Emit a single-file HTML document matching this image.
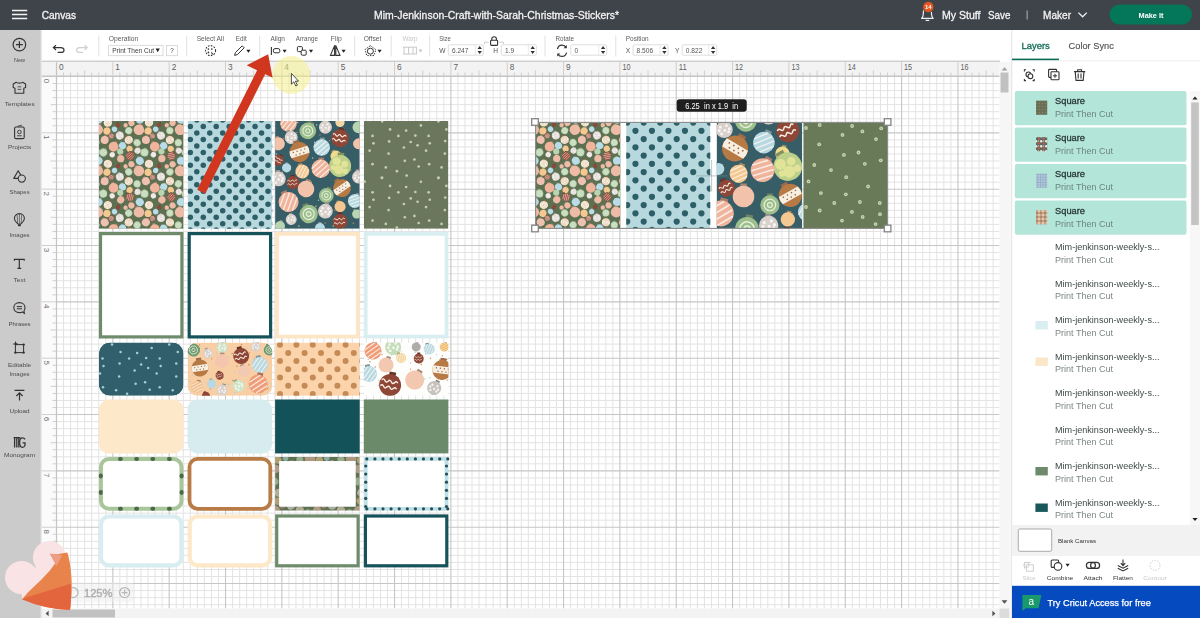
<!DOCTYPE html><html><head><meta charset="utf-8"><style>html,body{margin:0;padding:0;background:#fff}body{width:1200px;height:618px;overflow:hidden}svg{display:block;filter:blur(0.4px)}</style></head><body><svg width="1200" height="618" viewBox="0 0 1200 618" font-family="'Liberation Sans', sans-serif"><defs><clipPath id="c1"><rect x="98.9" y="121" width="84.6" height="107.8" rx="0"/></clipPath><clipPath id="c2"><rect x="187.6" y="121" width="84.6" height="107.8" rx="0"/></clipPath><clipPath id="c3"><rect x="275.1" y="121" width="84.6" height="107.8" rx="0"/></clipPath><clipPath id="c4"><rect x="363.8" y="121" width="84.6" height="107.8" rx="0"/></clipPath><clipPath id="c5"><rect x="98.9" y="342.6" width="84.6" height="53.2" rx="11"/></clipPath><clipPath id="c6"><rect x="187.6" y="342.6" width="84.6" height="53.2" rx="10"/></clipPath><clipPath id="c7"><rect x="275.1" y="342.6" width="84.6" height="53.2" rx="0"/></clipPath><clipPath id="c8"><rect x="363.8" y="342.6" width="84.6" height="53.2" rx="0"/></clipPath><clipPath id="c9"><rect x="275.1" y="457" width="84.6" height="53.7" rx="0"/></clipPath><mask id="m5"><rect x="275.1" y="457" width="84.6" height="53.7" fill="#fff"/><rect x="279.3" y="461.2" width="76.2" height="45.3" fill="#000"/></mask><clipPath id="c10"><rect x="275.1" y="457" width="84.6" height="53.7" rx="0"/></clipPath><clipPath id="c11"><rect x="536" y="122.8" width="84.5" height="105.8" rx="0"/></clipPath><clipPath id="c12"><rect x="626.2" y="122.8" width="84.1" height="105.8" rx="0"/></clipPath><clipPath id="c13"><rect x="716.6" y="122.8" width="85.5" height="105.8" rx="0"/></clipPath><clipPath id="c14"><rect x="803.3" y="122.8" width="84.5" height="105.8" rx="0"/></clipPath><pattern id="th_ornA" patternUnits="userSpaceOnUse" width="5" height="5"><rect width="5" height="5" fill="#5a6a62"/><circle cx="1.2" cy="1.2" r="1.2" fill="#f0e8e0"/><circle cx="3.8" cy="3.4" r="1.1" fill="#c85a48"/><circle cx="3.6" cy="1" r="0.8" fill="#f0b8a0"/></pattern><pattern id="th_polka" patternUnits="userSpaceOnUse" width="2.6" height="2.6"><rect width="2.6" height="2.6" fill="#b4cadc"/><path d="M0 .4H2.6M.4 0V2.6" stroke="#8ea8c2" stroke-width="0.7"/></pattern><pattern id="th_ornB" patternUnits="userSpaceOnUse" width="4" height="4"><rect width="4" height="4" fill="#c7a386"/><circle cx="1" cy="1" r="0.8" fill="#8a604a"/><circle cx="3" cy="3" r="0.9" fill="#ecdcc8"/></pattern><pattern id="th_sp" patternUnits="userSpaceOnUse" width="3" height="3"><rect width="3" height="3" fill="#6b6f56"/><circle cx="1.5" cy="1.5" r="0.45" fill="#9aa088"/></pattern></defs><rect x="41" y="61" width="971" height="557" fill="#ffffff"/><path d="M63.54 76V608.5M70.59 76V608.5M77.63 76V608.5M84.67 76V608.5M91.71 76V608.5M98.75 76V608.5M105.8 76V608.5M119.88 76V608.5M126.93 76V608.5M133.97 76V608.5M141.01 76V608.5M148.05 76V608.5M155.09 76V608.5M162.14 76V608.5M176.22 76V608.5M183.27 76V608.5M190.31 76V608.5M197.35 76V608.5M204.39 76V608.5M211.44 76V608.5M218.48 76V608.5M232.56 76V608.5M239.61 76V608.5M246.65 76V608.5M253.69 76V608.5M260.73 76V608.5M267.77 76V608.5M274.82 76V608.5M288.9 76V608.5M295.95 76V608.5M302.99 76V608.5M310.03 76V608.5M317.07 76V608.5M324.12 76V608.5M331.16 76V608.5M345.24 76V608.5M352.29 76V608.5M359.33 76V608.5M366.37 76V608.5M373.41 76V608.5M380.46 76V608.5M387.5 76V608.5M401.58 76V608.5M408.62 76V608.5M415.67 76V608.5M422.71 76V608.5M429.75 76V608.5M436.8 76V608.5M443.84 76V608.5M457.92 76V608.5M464.97 76V608.5M472.01 76V608.5M479.05 76V608.5M486.09 76V608.5M493.14 76V608.5M500.18 76V608.5M514.26 76V608.5M521.31 76V608.5M528.35 76V608.5M535.39 76V608.5M542.43 76V608.5M549.48 76V608.5M556.52 76V608.5M570.6 76V608.5M577.64 76V608.5M584.69 76V608.5M591.73 76V608.5M598.77 76V608.5M605.82 76V608.5M612.86 76V608.5M626.94 76V608.5M633.99 76V608.5M641.03 76V608.5M648.07 76V608.5M655.11 76V608.5M662.16 76V608.5M669.2 76V608.5M683.28 76V608.5M690.33 76V608.5M697.37 76V608.5M704.41 76V608.5M711.45 76V608.5M718.5 76V608.5M725.54 76V608.5M739.62 76V608.5M746.67 76V608.5M753.71 76V608.5M760.75 76V608.5M767.79 76V608.5M774.84 76V608.5M781.88 76V608.5M795.96 76V608.5M803 76V608.5M810.05 76V608.5M817.09 76V608.5M824.13 76V608.5M831.18 76V608.5M838.22 76V608.5M852.3 76V608.5M859.35 76V608.5M866.39 76V608.5M873.43 76V608.5M880.47 76V608.5M887.52 76V608.5M894.56 76V608.5M908.64 76V608.5M915.69 76V608.5M922.73 76V608.5M929.77 76V608.5M936.81 76V608.5M943.86 76V608.5M950.9 76V608.5M964.98 76V608.5M972.03 76V608.5M979.07 76V608.5M986.11 76V608.5M993.15 76V608.5M56 83.54H999.5M56 90.59H999.5M56 97.63H999.5M56 104.67H999.5M56 111.71H999.5M56 118.75H999.5M56 125.8H999.5M56 139.88H999.5M56 146.93H999.5M56 153.97H999.5M56 161.01H999.5M56 168.05H999.5M56 175.09H999.5M56 182.14H999.5M56 196.22H999.5M56 203.27H999.5M56 210.31H999.5M56 217.35H999.5M56 224.39H999.5M56 231.44H999.5M56 238.48H999.5M56 252.56H999.5M56 259.61H999.5M56 266.65H999.5M56 273.69H999.5M56 280.73H999.5M56 287.77H999.5M56 294.82H999.5M56 308.9H999.5M56 315.95H999.5M56 322.99H999.5M56 330.03H999.5M56 337.07H999.5M56 344.12H999.5M56 351.16H999.5M56 365.24H999.5M56 372.29H999.5M56 379.33H999.5M56 386.37H999.5M56 393.41H999.5M56 400.46H999.5M56 407.5H999.5M56 421.58H999.5M56 428.62H999.5M56 435.67H999.5M56 442.71H999.5M56 449.75H999.5M56 456.8H999.5M56 463.84H999.5M56 477.92H999.5M56 484.97H999.5M56 492.01H999.5M56 499.05H999.5M56 506.09H999.5M56 513.13H999.5M56 520.18H999.5M56 534.26H999.5M56 541.31H999.5M56 548.35H999.5M56 555.39H999.5M56 562.43H999.5M56 569.48H999.5M56 576.52H999.5M56 590.6H999.5M56 597.64H999.5M56 604.69H999.5" stroke="#e3e3e3" stroke-width="1" fill="none"/><path d="M56.5 62V608.5M112.84 62V608.5M169.18 62V608.5M225.52 62V608.5M281.86 62V608.5M338.2 62V608.5M394.54 62V608.5M450.88 62V608.5M507.22 62V608.5M563.56 62V608.5M619.9 62V608.5M676.24 62V608.5M732.58 62V608.5M788.92 62V608.5M845.26 62V608.5M901.6 62V608.5M957.94 62V608.5M41 76.5H999.5M41 132.84H999.5M41 189.18H999.5M41 245.52H999.5M41 301.86H999.5M41 358.2H999.5M41 414.54H999.5M41 470.88H999.5M41 527.22H999.5M41 583.56H999.5" stroke="#c6c6c6" stroke-width="1.1" fill="none"/><rect x="41" y="61.5" width="958.5" height="14.5" fill="#f3f3f3"/><rect x="41" y="76" width="15.5" height="532.5" fill="#fbfbfb"/><path d="M56.5 62V76M63.54 72.5V76M70.59 72.5V76M77.63 72.5V76M84.67 70.5V76M91.71 72.5V76M98.75 72.5V76M105.8 72.5V76M112.84 62V76M119.88 72.5V76M126.93 72.5V76M133.97 72.5V76M141.01 70.5V76M148.05 72.5V76M155.09 72.5V76M162.14 72.5V76M169.18 62V76M176.22 72.5V76M183.27 72.5V76M190.31 72.5V76M197.35 70.5V76M204.39 72.5V76M211.44 72.5V76M218.48 72.5V76M225.52 62V76M232.56 72.5V76M239.61 72.5V76M246.65 72.5V76M253.69 70.5V76M260.73 72.5V76M267.77 72.5V76M274.82 72.5V76M281.86 62V76M288.9 72.5V76M295.95 72.5V76M302.99 72.5V76M310.03 70.5V76M317.07 72.5V76M324.12 72.5V76M331.16 72.5V76M338.2 62V76M345.24 72.5V76M352.29 72.5V76M359.33 72.5V76M366.37 70.5V76M373.41 72.5V76M380.46 72.5V76M387.5 72.5V76M394.54 62V76M401.58 72.5V76M408.62 72.5V76M415.67 72.5V76M422.71 70.5V76M429.75 72.5V76M436.8 72.5V76M443.84 72.5V76M450.88 62V76M457.92 72.5V76M464.97 72.5V76M472.01 72.5V76M479.05 70.5V76M486.09 72.5V76M493.14 72.5V76M500.18 72.5V76M507.22 62V76M514.26 72.5V76M521.31 72.5V76M528.35 72.5V76M535.39 70.5V76M542.43 72.5V76M549.48 72.5V76M556.52 72.5V76M563.56 62V76M570.6 72.5V76M577.64 72.5V76M584.69 72.5V76M591.73 70.5V76M598.77 72.5V76M605.82 72.5V76M612.86 72.5V76M619.9 62V76M626.94 72.5V76M633.99 72.5V76M641.03 72.5V76M648.07 70.5V76M655.11 72.5V76M662.16 72.5V76M669.2 72.5V76M676.24 62V76M683.28 72.5V76M690.33 72.5V76M697.37 72.5V76M704.41 70.5V76M711.45 72.5V76M718.5 72.5V76M725.54 72.5V76M732.58 62V76M739.62 72.5V76M746.67 72.5V76M753.71 72.5V76M760.75 70.5V76M767.79 72.5V76M774.84 72.5V76M781.88 72.5V76M788.92 62V76M795.96 72.5V76M803 72.5V76M810.05 72.5V76M817.09 70.5V76M824.13 72.5V76M831.18 72.5V76M838.22 72.5V76M845.26 62V76M852.3 72.5V76M859.35 72.5V76M866.39 72.5V76M873.43 70.5V76M880.47 72.5V76M887.52 72.5V76M894.56 72.5V76M901.6 62V76M908.64 72.5V76M915.69 72.5V76M922.73 72.5V76M929.77 70.5V76M936.81 72.5V76M943.86 72.5V76M950.9 72.5V76M957.94 62V76M964.98 72.5V76M972.03 72.5V76M979.07 72.5V76M986.11 70.5V76M993.15 72.5V76M41 76.5H56.5M52.5 83.54H56.5M52.5 90.59H56.5M52.5 97.63H56.5M50.5 104.67H56.5M52.5 111.71H56.5M52.5 118.75H56.5M52.5 125.8H56.5M41 132.84H56.5M52.5 139.88H56.5M52.5 146.93H56.5M52.5 153.97H56.5M50.5 161.01H56.5M52.5 168.05H56.5M52.5 175.09H56.5M52.5 182.14H56.5M41 189.18H56.5M52.5 196.22H56.5M52.5 203.27H56.5M52.5 210.31H56.5M50.5 217.35H56.5M52.5 224.39H56.5M52.5 231.44H56.5M52.5 238.48H56.5M41 245.52H56.5M52.5 252.56H56.5M52.5 259.61H56.5M52.5 266.65H56.5M50.5 273.69H56.5M52.5 280.73H56.5M52.5 287.77H56.5M52.5 294.82H56.5M41 301.86H56.5M52.5 308.9H56.5M52.5 315.95H56.5M52.5 322.99H56.5M50.5 330.03H56.5M52.5 337.07H56.5M52.5 344.12H56.5M52.5 351.16H56.5M41 358.2H56.5M52.5 365.24H56.5M52.5 372.29H56.5M52.5 379.33H56.5M50.5 386.37H56.5M52.5 393.41H56.5M52.5 400.46H56.5M52.5 407.5H56.5M41 414.54H56.5M52.5 421.58H56.5M52.5 428.62H56.5M52.5 435.67H56.5M50.5 442.71H56.5M52.5 449.75H56.5M52.5 456.8H56.5M52.5 463.84H56.5M41 470.88H56.5M52.5 477.92H56.5M52.5 484.97H56.5M52.5 492.01H56.5M50.5 499.05H56.5M52.5 506.09H56.5M52.5 513.13H56.5M52.5 520.18H56.5M41 527.22H56.5M52.5 534.26H56.5M52.5 541.31H56.5M52.5 548.35H56.5M50.5 555.39H56.5M52.5 562.43H56.5M52.5 569.48H56.5M52.5 576.52H56.5M41 583.56H56.5M52.5 590.6H56.5M52.5 597.64H56.5M52.5 604.69H56.5" stroke="#cfcfcf" stroke-width="1" fill="none"/><path d="M41 76.2H999.5M56.5 62V608.5" stroke="#c4c4c4" stroke-width="1.2" fill="none"/><text x="59" y="70.4" font-size="8.3" fill="#5f5f5f">0</text><text x="115.34" y="70.4" font-size="8.3" fill="#5f5f5f">1</text><text x="171.68" y="70.4" font-size="8.3" fill="#5f5f5f">2</text><text x="228.02" y="70.4" font-size="8.3" fill="#5f5f5f">3</text><text x="284.36" y="70.4" font-size="8.3" fill="#5f5f5f">4</text><text x="340.7" y="70.4" font-size="8.3" fill="#5f5f5f">5</text><text x="397.04" y="70.4" font-size="8.3" fill="#5f5f5f">6</text><text x="453.38" y="70.4" font-size="8.3" fill="#5f5f5f">7</text><text x="509.72" y="70.4" font-size="8.3" fill="#5f5f5f">8</text><text x="566.06" y="70.4" font-size="8.3" fill="#5f5f5f">9</text><text x="622.4" y="70.4" font-size="8.3" fill="#5f5f5f" textLength="8" lengthAdjust="spacingAndGlyphs">10</text><text x="678.74" y="70.4" font-size="8.3" fill="#5f5f5f" textLength="8" lengthAdjust="spacingAndGlyphs">11</text><text x="735.08" y="70.4" font-size="8.3" fill="#5f5f5f" textLength="8" lengthAdjust="spacingAndGlyphs">12</text><text x="791.42" y="70.4" font-size="8.3" fill="#5f5f5f" textLength="8" lengthAdjust="spacingAndGlyphs">13</text><text x="847.76" y="70.4" font-size="8.3" fill="#5f5f5f" textLength="8" lengthAdjust="spacingAndGlyphs">14</text><text x="904.1" y="70.4" font-size="8.3" fill="#5f5f5f" textLength="8" lengthAdjust="spacingAndGlyphs">15</text><text x="960.44" y="70.4" font-size="8.3" fill="#5f5f5f" textLength="8" lengthAdjust="spacingAndGlyphs">16</text><text x="0" y="0" font-size="8" fill="#6f6f6f" transform="translate(44.2 78.7) rotate(90)">0</text><text x="0" y="0" font-size="8" fill="#6f6f6f" transform="translate(44.2 135.04) rotate(90)">1</text><text x="0" y="0" font-size="8" fill="#6f6f6f" transform="translate(44.2 191.38) rotate(90)">2</text><text x="0" y="0" font-size="8" fill="#6f6f6f" transform="translate(44.2 247.72) rotate(90)">3</text><text x="0" y="0" font-size="8" fill="#6f6f6f" transform="translate(44.2 304.06) rotate(90)">4</text><text x="0" y="0" font-size="8" fill="#6f6f6f" transform="translate(44.2 360.4) rotate(90)">5</text><text x="0" y="0" font-size="8" fill="#6f6f6f" transform="translate(44.2 416.74) rotate(90)">6</text><text x="0" y="0" font-size="8" fill="#6f6f6f" transform="translate(44.2 473.08) rotate(90)">7</text><text x="0" y="0" font-size="8" fill="#6f6f6f" transform="translate(44.2 529.42) rotate(90)">8</text><text x="0" y="0" font-size="8" fill="#6f6f6f" transform="translate(44.2 585.76) rotate(90)">9</text><rect x="999.5" y="61.5" width="12.5" height="556.5" fill="#f6f6f6"/><rect x="1000.5" y="72.5" width="8" height="20" fill="#c1c1c1"/><path d="M1001.6 70.5L1004.5 67.3L1007.4 70.5Z" fill="#a0a0a0"/><path d="M1001.6 600.2L1004.5 603.7L1007.4 600.2Z" fill="#505050"/><rect x="41" y="608.5" width="958.5" height="9.5" fill="#f3f3f3"/><rect x="52.5" y="609.5" width="62.5" height="8" fill="#c1c1c1"/><path d="M48.6 610.8L45.6 613.5L48.6 616.2Z" fill="#505050"/><path d="M992.4 610.8L995.4 613.5L992.4 616.2Z" fill="#505050"/><rect x="999.5" y="608.5" width="10" height="9.5" fill="#dcdcdc"/><rect x="1009.5" y="61.5" width="2.5" height="556.5" fill="#f7f7f7"/><g clip-path="url(#c1)"><rect x="98.9" y="121" width="84.6" height="107.8" fill="#5d7052"/><g transform="translate(98.6 119.7) rotate(8.6)"><rect x="-1.2" y="-4.8" width="2.4" height="1.6" fill="#849ea7"/><circle r="4" fill="#b8dce8"/></g><g transform="translate(97.7 129.8) rotate(16.93)"><rect x="-1.59" y="-6.36" width="3.18" height="2.12" fill="#ab8677"/><circle r="5.3" fill="#eebba6"/></g><g transform="translate(95.9 142.7) rotate(20.66)"><rect x="-1.08" y="-4.32" width="2.16" height="1.44" fill="#84987e"/><circle r="3.6" fill="#b8d4b0"/><circle r="2.16" fill="none" stroke="#eef4e4" stroke-opacity="0.9" stroke-width="0.55"/><circle r="0.9" fill="none" stroke="#eef4e4" stroke-opacity="0.9" stroke-width="0.55"/></g><g transform="translate(96.4 150.7) rotate(30.97)"><rect x="-0.93" y="-3.72" width="1.86" height="1.24" fill="#a49e9b"/><circle r="3.1" fill="#e4dcd8"/><circle cx="-1.4" cy="-0.93" r="0.53" fill="#fff" fill-opacity="0.8"/><circle cx="0.93" cy="-1.4" r="0.53" fill="#fff" fill-opacity="0.8"/><circle cx="0.16" cy="0.31" r="0.53" fill="#fff" fill-opacity="0.8"/><circle cx="-1.08" cy="1.55" r="0.53" fill="#fff" fill-opacity="0.8"/><circle cx="1.55" cy="0.93" r="0.53" fill="#fff" fill-opacity="0.8"/><circle cx="1.86" cy="-0.16" r="0.53" fill="#fff" fill-opacity="0.8"/><circle cx="-1.86" cy="0.31" r="0.53" fill="#fff" fill-opacity="0.8"/></g><g transform="translate(98.6 160.9) rotate(16.79)"><rect x="-1.2" y="-4.8" width="2.4" height="1.6" fill="#849ea7"/><circle r="4" fill="#b8dce8"/></g><g transform="translate(97.7 171) rotate(29.56)"><rect x="-1.59" y="-6.36" width="3.18" height="2.12" fill="#ab8677"/><circle r="5.3" fill="#eebba6"/></g><g transform="translate(95.9 183.9) rotate(-32.97)"><rect x="-1.08" y="-4.32" width="2.16" height="1.44" fill="#84987e"/><circle r="3.6" fill="#b8d4b0"/><circle r="2.16" fill="none" stroke="#eef4e4" stroke-opacity="0.9" stroke-width="0.55"/><circle r="0.9" fill="none" stroke="#eef4e4" stroke-opacity="0.9" stroke-width="0.55"/></g><g transform="translate(96.4 191.9) rotate(-2.41)"><rect x="-0.93" y="-3.72" width="1.86" height="1.24" fill="#a49e9b"/><circle r="3.1" fill="#e4dcd8"/><circle cx="-1.4" cy="-0.93" r="0.53" fill="#fff" fill-opacity="0.8"/><circle cx="0.93" cy="-1.4" r="0.53" fill="#fff" fill-opacity="0.8"/><circle cx="0.16" cy="0.31" r="0.53" fill="#fff" fill-opacity="0.8"/><circle cx="-1.08" cy="1.55" r="0.53" fill="#fff" fill-opacity="0.8"/><circle cx="1.55" cy="0.93" r="0.53" fill="#fff" fill-opacity="0.8"/><circle cx="1.86" cy="-0.16" r="0.53" fill="#fff" fill-opacity="0.8"/><circle cx="-1.86" cy="0.31" r="0.53" fill="#fff" fill-opacity="0.8"/></g><g transform="translate(98.6 202.1) rotate(31.03)"><rect x="-1.2" y="-4.8" width="2.4" height="1.6" fill="#849ea7"/><circle r="4" fill="#b8dce8"/></g><g transform="translate(97.7 212.2) rotate(10.43)"><rect x="-1.59" y="-6.36" width="3.18" height="2.12" fill="#ab8677"/><circle r="5.3" fill="#eebba6"/></g><g transform="translate(95.9 225.1) rotate(28.06)"><rect x="-1.08" y="-4.32" width="2.16" height="1.44" fill="#84987e"/><circle r="3.6" fill="#b8d4b0"/><circle r="2.16" fill="none" stroke="#eef4e4" stroke-opacity="0.9" stroke-width="0.55"/><circle r="0.9" fill="none" stroke="#eef4e4" stroke-opacity="0.9" stroke-width="0.55"/></g><g transform="translate(96.4 233.1) rotate(-27.08)"><rect x="-0.93" y="-3.72" width="1.86" height="1.24" fill="#a49e9b"/><circle r="3.1" fill="#e4dcd8"/><circle cx="-1.4" cy="-0.93" r="0.53" fill="#fff" fill-opacity="0.8"/><circle cx="0.93" cy="-1.4" r="0.53" fill="#fff" fill-opacity="0.8"/><circle cx="0.16" cy="0.31" r="0.53" fill="#fff" fill-opacity="0.8"/><circle cx="-1.08" cy="1.55" r="0.53" fill="#fff" fill-opacity="0.8"/><circle cx="1.55" cy="0.93" r="0.53" fill="#fff" fill-opacity="0.8"/><circle cx="1.86" cy="-0.16" r="0.53" fill="#fff" fill-opacity="0.8"/><circle cx="-1.86" cy="0.31" r="0.53" fill="#fff" fill-opacity="0.8"/></g><g transform="translate(120.7 117.5) rotate(-2.17)"><rect x="-1.08" y="-4.32" width="2.16" height="1.44" fill="#ab8677"/><circle r="3.6" fill="#eebba6"/></g><g transform="translate(139.8 119.7) rotate(-17.74)"><rect x="-1.2" y="-4.8" width="2.4" height="1.6" fill="#849ea7"/><circle r="4" fill="#b8dce8"/></g><g transform="translate(107.8 122.7) rotate(3.06)"><rect x="-1.2" y="-4.8" width="2.4" height="1.6" fill="#9c6a48"/><circle r="4" fill="#f2e2cc"/><path d="M-3.73 -1.44L3.73 -1.44L4 0L3.73 1.44L-3.73 1.44L-4 0Z" fill="#f8efe0"/><g fill="#9a6a4a"><circle cx="-2.4" cy="-0.6" r="0.28"/><circle cx="-0.8" cy="-0.6" r="0.28"/><circle cx="0.8" cy="-0.6" r="0.28"/><circle cx="2.4" cy="-0.6" r="0.28"/><circle cx="-1.6" cy="0.68" r="0.28"/><circle cx="0" cy="0.68" r="0.28"/><circle cx="1.6" cy="0.68" r="0.28"/></g></g><g transform="translate(106.9 131.1) rotate(5.18)"><rect x="-1.08" y="-4.32" width="2.16" height="1.44" fill="#af9067"/><circle r="3.6" fill="#f4c890"/></g><g transform="translate(114.5 129.3) rotate(-34.08)"><rect x="-0.81" y="-3.24" width="1.62" height="1.08" fill="#849ea7"/><circle r="2.7" fill="#b8dce8"/></g><g transform="translate(118 124.9) rotate(-19.83)"><rect x="-0.66" y="-2.64" width="1.32" height="0.88" fill="#633529"/><circle r="2.2" fill="#8a4a3a"/></g><g transform="translate(119.8 135.6) rotate(-15.44)"><rect x="-1.2" y="-4.8" width="2.4" height="1.6" fill="#a49e9b"/><circle r="4" fill="#e4dcd8"/><circle cx="-1.8" cy="-1.2" r="0.68" fill="#fff" fill-opacity="0.8"/><circle cx="1.2" cy="-1.8" r="0.68" fill="#fff" fill-opacity="0.8"/><circle cx="0.2" cy="0.4" r="0.68" fill="#fff" fill-opacity="0.8"/><circle cx="-1.4" cy="2" r="0.68" fill="#fff" fill-opacity="0.8"/><circle cx="2" cy="1.2" r="0.68" fill="#fff" fill-opacity="0.8"/><circle cx="2.4" cy="-0.2" r="0.68" fill="#fff" fill-opacity="0.8"/><circle cx="-2.4" cy="0.4" r="0.68" fill="#fff" fill-opacity="0.8"/></g><g transform="translate(125.6 125.3) rotate(29.14)"><rect x="-0.66" y="-2.64" width="1.32" height="0.88" fill="#ab8677"/><circle r="2.2" fill="#eebba6"/></g><g transform="translate(128.7 130.7) rotate(18.6)"><rect x="-1.08" y="-4.32" width="2.16" height="1.44" fill="#84987e"/><circle r="3.6" fill="#b8d4b0"/><circle r="2.16" fill="none" stroke="#eef4e4" stroke-opacity="0.9" stroke-width="0.55"/><circle r="0.9" fill="none" stroke="#eef4e4" stroke-opacity="0.9" stroke-width="0.55"/></g><g transform="translate(131.4 123.1) rotate(-23.83)"><rect x="-0.93" y="-3.72" width="1.86" height="1.24" fill="#ab8677"/><circle r="3.1" fill="#eebba6"/></g><g transform="translate(138.9 129.8) rotate(20.8)"><rect x="-1.59" y="-6.36" width="3.18" height="2.12" fill="#ab8677"/><circle r="5.3" fill="#eebba6"/></g><g transform="translate(111.3 136) rotate(-25.29)"><rect x="-0.81" y="-3.24" width="1.62" height="1.08" fill="#73392e"/><circle r="2.7" fill="#a05040"/><path d="M-2.58 0.06L0.06 -2.58M-2.13 1.29L1.29 -2.13M-1.29 2.13L2.13 -1.29M-0.06 2.58L2.58 -0.06" stroke="#fdf6ee" stroke-opacity="0.85" stroke-width="0.55"/></g><g transform="translate(104.7 140) rotate(8.22)"><rect x="-1.2" y="-4.8" width="2.4" height="1.6" fill="#ac8a7e"/><circle r="4" fill="#f0c0b0"/></g><g transform="translate(128.7 140) rotate(-26.13)"><rect x="-1.2" y="-4.8" width="2.4" height="1.6" fill="#9c6a48"/><circle r="4" fill="#f0d8c0"/><path d="M-3.73 -1.44L3.73 -1.44L4 0L3.73 1.44L-3.73 1.44L-4 0Z" fill="#f8efe0"/><g fill="#9a6a4a"><circle cx="-2.4" cy="-0.6" r="0.28"/><circle cx="-0.8" cy="-0.6" r="0.28"/><circle cx="0.8" cy="-0.6" r="0.28"/><circle cx="2.4" cy="-0.6" r="0.28"/><circle cx="-1.6" cy="0.68" r="0.28"/><circle cx="0" cy="0.68" r="0.28"/><circle cx="1.6" cy="0.68" r="0.28"/></g></g><g transform="translate(137.1 142.7) rotate(-34.88)"><rect x="-1.08" y="-4.32" width="2.16" height="1.44" fill="#84987e"/><circle r="3.6" fill="#b8d4b0"/><circle r="2.16" fill="none" stroke="#eef4e4" stroke-opacity="0.9" stroke-width="0.55"/><circle r="0.9" fill="none" stroke="#eef4e4" stroke-opacity="0.9" stroke-width="0.55"/></g><g transform="translate(113.6 146.7) rotate(26)"><rect x="-1.47" y="-5.88" width="2.94" height="1.96" fill="#ac8170"/><circle r="4.9" fill="#f0b49c"/></g><g transform="translate(122.5 145.8) rotate(-20.34)"><rect x="-1.08" y="-4.32" width="2.16" height="1.44" fill="#849ea7"/><circle r="3.6" fill="#b8dce8"/></g><g transform="translate(129.6 148.9) rotate(-19.92)"><rect x="-0.93" y="-3.72" width="1.86" height="1.24" fill="#af9067"/><circle r="3.1" fill="#f4c890"/></g><g transform="translate(103.3 152.5) rotate(33.77)"><rect x="-1.2" y="-4.8" width="2.4" height="1.6" fill="#84987e"/><circle r="4" fill="#b8d4b0"/><circle r="2.4" fill="none" stroke="#eef4e4" stroke-opacity="0.9" stroke-width="0.55"/><circle r="1" fill="none" stroke="#eef4e4" stroke-opacity="0.9" stroke-width="0.55"/></g><g transform="translate(112.2 154.7) rotate(26.07)"><rect x="-0.81" y="-3.24" width="1.62" height="1.08" fill="#a9a4a1"/><circle r="2.7" fill="#ece4e0"/><circle cx="-1.22" cy="-0.81" r="0.46" fill="#fff" fill-opacity="0.8"/><circle cx="0.81" cy="-1.22" r="0.46" fill="#fff" fill-opacity="0.8"/><circle cx="0.14" cy="0.27" r="0.46" fill="#fff" fill-opacity="0.8"/><circle cx="-0.94" cy="1.35" r="0.46" fill="#fff" fill-opacity="0.8"/><circle cx="1.35" cy="0.81" r="0.46" fill="#fff" fill-opacity="0.8"/><circle cx="1.62" cy="-0.14" r="0.46" fill="#fff" fill-opacity="0.8"/><circle cx="-1.62" cy="0.27" r="0.46" fill="#fff" fill-opacity="0.8"/></g><g transform="translate(120.2 151.6) rotate(-14.75)"><rect x="-0.93" y="-3.72" width="1.86" height="1.24" fill="#84987e"/><circle r="3.1" fill="#b8d4b0"/></g><g transform="translate(137.6 150.7) rotate(32.3)"><rect x="-0.93" y="-3.72" width="1.86" height="1.24" fill="#a49e9b"/><circle r="3.1" fill="#e4dcd8"/><circle cx="-1.4" cy="-0.93" r="0.53" fill="#fff" fill-opacity="0.8"/><circle cx="0.93" cy="-1.4" r="0.53" fill="#fff" fill-opacity="0.8"/><circle cx="0.16" cy="0.31" r="0.53" fill="#fff" fill-opacity="0.8"/><circle cx="-1.08" cy="1.55" r="0.53" fill="#fff" fill-opacity="0.8"/><circle cx="1.55" cy="0.93" r="0.53" fill="#fff" fill-opacity="0.8"/><circle cx="1.86" cy="-0.16" r="0.53" fill="#fff" fill-opacity="0.8"/><circle cx="-1.86" cy="0.31" r="0.53" fill="#fff" fill-opacity="0.8"/></g><g transform="translate(130 156) rotate(2.75)"><rect x="-1.2" y="-4.8" width="2.4" height="1.6" fill="#73392e"/><circle r="4" fill="#a05040"/><path d="M-3.82 0.09L0.09 -3.82M-3.16 1.92L1.92 -3.16M-1.92 3.16L3.16 -1.92M-0.09 3.82L3.82 -0.09" stroke="#fdf6ee" stroke-opacity="0.85" stroke-width="0.55"/></g><g transform="translate(120.7 158.7) rotate(12.45)"><rect x="-1.08" y="-4.32" width="2.16" height="1.44" fill="#ab8677"/><circle r="3.6" fill="#eebba6"/></g><g transform="translate(139.8 160.9) rotate(-20.67)"><rect x="-1.2" y="-4.8" width="2.4" height="1.6" fill="#849ea7"/><circle r="4" fill="#b8dce8"/></g><g transform="translate(107.8 163.9) rotate(30.87)"><rect x="-1.2" y="-4.8" width="2.4" height="1.6" fill="#9c6a48"/><circle r="4" fill="#f2e2cc"/><path d="M-3.73 -1.44L3.73 -1.44L4 0L3.73 1.44L-3.73 1.44L-4 0Z" fill="#f8efe0"/><g fill="#9a6a4a"><circle cx="-2.4" cy="-0.6" r="0.28"/><circle cx="-0.8" cy="-0.6" r="0.28"/><circle cx="0.8" cy="-0.6" r="0.28"/><circle cx="2.4" cy="-0.6" r="0.28"/><circle cx="-1.6" cy="0.68" r="0.28"/><circle cx="0" cy="0.68" r="0.28"/><circle cx="1.6" cy="0.68" r="0.28"/></g></g><g transform="translate(106.9 172.3) rotate(13.34)"><rect x="-1.08" y="-4.32" width="2.16" height="1.44" fill="#af9067"/><circle r="3.6" fill="#f4c890"/></g><g transform="translate(114.5 170.5) rotate(32.66)"><rect x="-0.81" y="-3.24" width="1.62" height="1.08" fill="#849ea7"/><circle r="2.7" fill="#b8dce8"/></g><g transform="translate(118 166.1) rotate(27.56)"><rect x="-0.66" y="-2.64" width="1.32" height="0.88" fill="#633529"/><circle r="2.2" fill="#8a4a3a"/></g><g transform="translate(119.8 176.8) rotate(-14.08)"><rect x="-1.2" y="-4.8" width="2.4" height="1.6" fill="#a49e9b"/><circle r="4" fill="#e4dcd8"/><circle cx="-1.8" cy="-1.2" r="0.68" fill="#fff" fill-opacity="0.8"/><circle cx="1.2" cy="-1.8" r="0.68" fill="#fff" fill-opacity="0.8"/><circle cx="0.2" cy="0.4" r="0.68" fill="#fff" fill-opacity="0.8"/><circle cx="-1.4" cy="2" r="0.68" fill="#fff" fill-opacity="0.8"/><circle cx="2" cy="1.2" r="0.68" fill="#fff" fill-opacity="0.8"/><circle cx="2.4" cy="-0.2" r="0.68" fill="#fff" fill-opacity="0.8"/><circle cx="-2.4" cy="0.4" r="0.68" fill="#fff" fill-opacity="0.8"/></g><g transform="translate(125.6 166.5) rotate(-9.72)"><rect x="-0.66" y="-2.64" width="1.32" height="0.88" fill="#ab8677"/><circle r="2.2" fill="#eebba6"/></g><g transform="translate(128.7 171.9) rotate(-23.38)"><rect x="-1.08" y="-4.32" width="2.16" height="1.44" fill="#84987e"/><circle r="3.6" fill="#b8d4b0"/><circle r="2.16" fill="none" stroke="#eef4e4" stroke-opacity="0.9" stroke-width="0.55"/><circle r="0.9" fill="none" stroke="#eef4e4" stroke-opacity="0.9" stroke-width="0.55"/></g><g transform="translate(131.4 164.3) rotate(-24.8)"><rect x="-0.93" y="-3.72" width="1.86" height="1.24" fill="#ab8677"/><circle r="3.1" fill="#eebba6"/></g><g transform="translate(138.9 171) rotate(-30.44)"><rect x="-1.59" y="-6.36" width="3.18" height="2.12" fill="#ab8677"/><circle r="5.3" fill="#eebba6"/></g><g transform="translate(111.3 177.2) rotate(-13.9)"><rect x="-0.81" y="-3.24" width="1.62" height="1.08" fill="#73392e"/><circle r="2.7" fill="#a05040"/><path d="M-2.58 0.06L0.06 -2.58M-2.13 1.29L1.29 -2.13M-1.29 2.13L2.13 -1.29M-0.06 2.58L2.58 -0.06" stroke="#fdf6ee" stroke-opacity="0.85" stroke-width="0.55"/></g><g transform="translate(104.7 181.2) rotate(7.22)"><rect x="-1.2" y="-4.8" width="2.4" height="1.6" fill="#ac8a7e"/><circle r="4" fill="#f0c0b0"/></g><g transform="translate(128.7 181.2) rotate(-34.76)"><rect x="-1.2" y="-4.8" width="2.4" height="1.6" fill="#9c6a48"/><circle r="4" fill="#f0d8c0"/><path d="M-3.73 -1.44L3.73 -1.44L4 0L3.73 1.44L-3.73 1.44L-4 0Z" fill="#f8efe0"/><g fill="#9a6a4a"><circle cx="-2.4" cy="-0.6" r="0.28"/><circle cx="-0.8" cy="-0.6" r="0.28"/><circle cx="0.8" cy="-0.6" r="0.28"/><circle cx="2.4" cy="-0.6" r="0.28"/><circle cx="-1.6" cy="0.68" r="0.28"/><circle cx="0" cy="0.68" r="0.28"/><circle cx="1.6" cy="0.68" r="0.28"/></g></g><g transform="translate(137.1 183.9) rotate(12.46)"><rect x="-1.08" y="-4.32" width="2.16" height="1.44" fill="#84987e"/><circle r="3.6" fill="#b8d4b0"/><circle r="2.16" fill="none" stroke="#eef4e4" stroke-opacity="0.9" stroke-width="0.55"/><circle r="0.9" fill="none" stroke="#eef4e4" stroke-opacity="0.9" stroke-width="0.55"/></g><g transform="translate(113.6 187.9) rotate(-11.35)"><rect x="-1.47" y="-5.88" width="2.94" height="1.96" fill="#ac8170"/><circle r="4.9" fill="#f0b49c"/></g><g transform="translate(122.5 187) rotate(-13.3)"><rect x="-1.08" y="-4.32" width="2.16" height="1.44" fill="#849ea7"/><circle r="3.6" fill="#b8dce8"/></g><g transform="translate(129.6 190.1) rotate(22.3)"><rect x="-0.93" y="-3.72" width="1.86" height="1.24" fill="#af9067"/><circle r="3.1" fill="#f4c890"/></g><g transform="translate(103.3 193.7) rotate(-1.35)"><rect x="-1.2" y="-4.8" width="2.4" height="1.6" fill="#84987e"/><circle r="4" fill="#b8d4b0"/><circle r="2.4" fill="none" stroke="#eef4e4" stroke-opacity="0.9" stroke-width="0.55"/><circle r="1" fill="none" stroke="#eef4e4" stroke-opacity="0.9" stroke-width="0.55"/></g><g transform="translate(112.2 195.9) rotate(-12.89)"><rect x="-0.81" y="-3.24" width="1.62" height="1.08" fill="#a9a4a1"/><circle r="2.7" fill="#ece4e0"/><circle cx="-1.22" cy="-0.81" r="0.46" fill="#fff" fill-opacity="0.8"/><circle cx="0.81" cy="-1.22" r="0.46" fill="#fff" fill-opacity="0.8"/><circle cx="0.14" cy="0.27" r="0.46" fill="#fff" fill-opacity="0.8"/><circle cx="-0.94" cy="1.35" r="0.46" fill="#fff" fill-opacity="0.8"/><circle cx="1.35" cy="0.81" r="0.46" fill="#fff" fill-opacity="0.8"/><circle cx="1.62" cy="-0.14" r="0.46" fill="#fff" fill-opacity="0.8"/><circle cx="-1.62" cy="0.27" r="0.46" fill="#fff" fill-opacity="0.8"/></g><g transform="translate(120.2 192.8) rotate(-1.31)"><rect x="-0.93" y="-3.72" width="1.86" height="1.24" fill="#84987e"/><circle r="3.1" fill="#b8d4b0"/></g><g transform="translate(137.6 191.9) rotate(14.33)"><rect x="-0.93" y="-3.72" width="1.86" height="1.24" fill="#a49e9b"/><circle r="3.1" fill="#e4dcd8"/><circle cx="-1.4" cy="-0.93" r="0.53" fill="#fff" fill-opacity="0.8"/><circle cx="0.93" cy="-1.4" r="0.53" fill="#fff" fill-opacity="0.8"/><circle cx="0.16" cy="0.31" r="0.53" fill="#fff" fill-opacity="0.8"/><circle cx="-1.08" cy="1.55" r="0.53" fill="#fff" fill-opacity="0.8"/><circle cx="1.55" cy="0.93" r="0.53" fill="#fff" fill-opacity="0.8"/><circle cx="1.86" cy="-0.16" r="0.53" fill="#fff" fill-opacity="0.8"/><circle cx="-1.86" cy="0.31" r="0.53" fill="#fff" fill-opacity="0.8"/></g><g transform="translate(130 197.2) rotate(-31.01)"><rect x="-1.2" y="-4.8" width="2.4" height="1.6" fill="#73392e"/><circle r="4" fill="#a05040"/><path d="M-3.82 0.09L0.09 -3.82M-3.16 1.92L1.92 -3.16M-1.92 3.16L3.16 -1.92M-0.09 3.82L3.82 -0.09" stroke="#fdf6ee" stroke-opacity="0.85" stroke-width="0.55"/></g><g transform="translate(120.7 199.9) rotate(33.26)"><rect x="-1.08" y="-4.32" width="2.16" height="1.44" fill="#ab8677"/><circle r="3.6" fill="#eebba6"/></g><g transform="translate(139.8 202.1) rotate(-33.4)"><rect x="-1.2" y="-4.8" width="2.4" height="1.6" fill="#849ea7"/><circle r="4" fill="#b8dce8"/></g><g transform="translate(107.8 205.1) rotate(17.49)"><rect x="-1.2" y="-4.8" width="2.4" height="1.6" fill="#9c6a48"/><circle r="4" fill="#f2e2cc"/><path d="M-3.73 -1.44L3.73 -1.44L4 0L3.73 1.44L-3.73 1.44L-4 0Z" fill="#f8efe0"/><g fill="#9a6a4a"><circle cx="-2.4" cy="-0.6" r="0.28"/><circle cx="-0.8" cy="-0.6" r="0.28"/><circle cx="0.8" cy="-0.6" r="0.28"/><circle cx="2.4" cy="-0.6" r="0.28"/><circle cx="-1.6" cy="0.68" r="0.28"/><circle cx="0" cy="0.68" r="0.28"/><circle cx="1.6" cy="0.68" r="0.28"/></g></g><g transform="translate(106.9 213.5) rotate(24.14)"><rect x="-1.08" y="-4.32" width="2.16" height="1.44" fill="#af9067"/><circle r="3.6" fill="#f4c890"/></g><g transform="translate(114.5 211.7) rotate(-33.74)"><rect x="-0.81" y="-3.24" width="1.62" height="1.08" fill="#849ea7"/><circle r="2.7" fill="#b8dce8"/></g><g transform="translate(118 207.3) rotate(20.14)"><rect x="-0.66" y="-2.64" width="1.32" height="0.88" fill="#633529"/><circle r="2.2" fill="#8a4a3a"/></g><g transform="translate(119.8 218) rotate(-9.37)"><rect x="-1.2" y="-4.8" width="2.4" height="1.6" fill="#a49e9b"/><circle r="4" fill="#e4dcd8"/><circle cx="-1.8" cy="-1.2" r="0.68" fill="#fff" fill-opacity="0.8"/><circle cx="1.2" cy="-1.8" r="0.68" fill="#fff" fill-opacity="0.8"/><circle cx="0.2" cy="0.4" r="0.68" fill="#fff" fill-opacity="0.8"/><circle cx="-1.4" cy="2" r="0.68" fill="#fff" fill-opacity="0.8"/><circle cx="2" cy="1.2" r="0.68" fill="#fff" fill-opacity="0.8"/><circle cx="2.4" cy="-0.2" r="0.68" fill="#fff" fill-opacity="0.8"/><circle cx="-2.4" cy="0.4" r="0.68" fill="#fff" fill-opacity="0.8"/></g><g transform="translate(125.6 207.7) rotate(5.5)"><rect x="-0.66" y="-2.64" width="1.32" height="0.88" fill="#ab8677"/><circle r="2.2" fill="#eebba6"/></g><g transform="translate(128.7 213.1) rotate(-34.36)"><rect x="-1.08" y="-4.32" width="2.16" height="1.44" fill="#84987e"/><circle r="3.6" fill="#b8d4b0"/><circle r="2.16" fill="none" stroke="#eef4e4" stroke-opacity="0.9" stroke-width="0.55"/><circle r="0.9" fill="none" stroke="#eef4e4" stroke-opacity="0.9" stroke-width="0.55"/></g><g transform="translate(131.4 205.5) rotate(-31.73)"><rect x="-0.93" y="-3.72" width="1.86" height="1.24" fill="#ab8677"/><circle r="3.1" fill="#eebba6"/></g><g transform="translate(138.9 212.2) rotate(-22.34)"><rect x="-1.59" y="-6.36" width="3.18" height="2.12" fill="#ab8677"/><circle r="5.3" fill="#eebba6"/></g><g transform="translate(111.3 218.4) rotate(31.86)"><rect x="-0.81" y="-3.24" width="1.62" height="1.08" fill="#73392e"/><circle r="2.7" fill="#a05040"/><path d="M-2.58 0.06L0.06 -2.58M-2.13 1.29L1.29 -2.13M-1.29 2.13L2.13 -1.29M-0.06 2.58L2.58 -0.06" stroke="#fdf6ee" stroke-opacity="0.85" stroke-width="0.55"/></g><g transform="translate(104.7 222.4) rotate(-21.24)"><rect x="-1.2" y="-4.8" width="2.4" height="1.6" fill="#ac8a7e"/><circle r="4" fill="#f0c0b0"/></g><g transform="translate(128.7 222.4) rotate(17.9)"><rect x="-1.2" y="-4.8" width="2.4" height="1.6" fill="#9c6a48"/><circle r="4" fill="#f0d8c0"/><path d="M-3.73 -1.44L3.73 -1.44L4 0L3.73 1.44L-3.73 1.44L-4 0Z" fill="#f8efe0"/><g fill="#9a6a4a"><circle cx="-2.4" cy="-0.6" r="0.28"/><circle cx="-0.8" cy="-0.6" r="0.28"/><circle cx="0.8" cy="-0.6" r="0.28"/><circle cx="2.4" cy="-0.6" r="0.28"/><circle cx="-1.6" cy="0.68" r="0.28"/><circle cx="0" cy="0.68" r="0.28"/><circle cx="1.6" cy="0.68" r="0.28"/></g></g><g transform="translate(137.1 225.1) rotate(30.08)"><rect x="-1.08" y="-4.32" width="2.16" height="1.44" fill="#84987e"/><circle r="3.6" fill="#b8d4b0"/><circle r="2.16" fill="none" stroke="#eef4e4" stroke-opacity="0.9" stroke-width="0.55"/><circle r="0.9" fill="none" stroke="#eef4e4" stroke-opacity="0.9" stroke-width="0.55"/></g><g transform="translate(113.6 229.1) rotate(30.94)"><rect x="-1.47" y="-5.88" width="2.94" height="1.96" fill="#ac8170"/><circle r="4.9" fill="#f0b49c"/></g><g transform="translate(122.5 228.2) rotate(-10.89)"><rect x="-1.08" y="-4.32" width="2.16" height="1.44" fill="#849ea7"/><circle r="3.6" fill="#b8dce8"/></g><g transform="translate(129.6 231.3) rotate(-10.16)"><rect x="-0.93" y="-3.72" width="1.86" height="1.24" fill="#af9067"/><circle r="3.1" fill="#f4c890"/></g><g transform="translate(120.2 234) rotate(1.73)"><rect x="-0.93" y="-3.72" width="1.86" height="1.24" fill="#84987e"/><circle r="3.1" fill="#b8d4b0"/></g><g transform="translate(137.6 233.1) rotate(19.29)"><rect x="-0.93" y="-3.72" width="1.86" height="1.24" fill="#a49e9b"/><circle r="3.1" fill="#e4dcd8"/><circle cx="-1.4" cy="-0.93" r="0.53" fill="#fff" fill-opacity="0.8"/><circle cx="0.93" cy="-1.4" r="0.53" fill="#fff" fill-opacity="0.8"/><circle cx="0.16" cy="0.31" r="0.53" fill="#fff" fill-opacity="0.8"/><circle cx="-1.08" cy="1.55" r="0.53" fill="#fff" fill-opacity="0.8"/><circle cx="1.55" cy="0.93" r="0.53" fill="#fff" fill-opacity="0.8"/><circle cx="1.86" cy="-0.16" r="0.53" fill="#fff" fill-opacity="0.8"/><circle cx="-1.86" cy="0.31" r="0.53" fill="#fff" fill-opacity="0.8"/></g><g transform="translate(161.9 117.5) rotate(-27.44)"><rect x="-1.08" y="-4.32" width="2.16" height="1.44" fill="#ab8677"/><circle r="3.6" fill="#eebba6"/></g><g transform="translate(181 119.7) rotate(17.39)"><rect x="-1.2" y="-4.8" width="2.4" height="1.6" fill="#849ea7"/><circle r="4" fill="#b8dce8"/></g><g transform="translate(149 122.7) rotate(20.81)"><rect x="-1.2" y="-4.8" width="2.4" height="1.6" fill="#9c6a48"/><circle r="4" fill="#f2e2cc"/><path d="M-3.73 -1.44L3.73 -1.44L4 0L3.73 1.44L-3.73 1.44L-4 0Z" fill="#f8efe0"/><g fill="#9a6a4a"><circle cx="-2.4" cy="-0.6" r="0.28"/><circle cx="-0.8" cy="-0.6" r="0.28"/><circle cx="0.8" cy="-0.6" r="0.28"/><circle cx="2.4" cy="-0.6" r="0.28"/><circle cx="-1.6" cy="0.68" r="0.28"/><circle cx="0" cy="0.68" r="0.28"/><circle cx="1.6" cy="0.68" r="0.28"/></g></g><g transform="translate(148.1 131.1) rotate(25.18)"><rect x="-1.08" y="-4.32" width="2.16" height="1.44" fill="#af9067"/><circle r="3.6" fill="#f4c890"/></g><g transform="translate(155.7 129.3) rotate(-32.44)"><rect x="-0.81" y="-3.24" width="1.62" height="1.08" fill="#849ea7"/><circle r="2.7" fill="#b8dce8"/></g><g transform="translate(159.2 124.9) rotate(31.21)"><rect x="-0.66" y="-2.64" width="1.32" height="0.88" fill="#633529"/><circle r="2.2" fill="#8a4a3a"/></g><g transform="translate(161 135.6) rotate(-28.62)"><rect x="-1.2" y="-4.8" width="2.4" height="1.6" fill="#a49e9b"/><circle r="4" fill="#e4dcd8"/><circle cx="-1.8" cy="-1.2" r="0.68" fill="#fff" fill-opacity="0.8"/><circle cx="1.2" cy="-1.8" r="0.68" fill="#fff" fill-opacity="0.8"/><circle cx="0.2" cy="0.4" r="0.68" fill="#fff" fill-opacity="0.8"/><circle cx="-1.4" cy="2" r="0.68" fill="#fff" fill-opacity="0.8"/><circle cx="2" cy="1.2" r="0.68" fill="#fff" fill-opacity="0.8"/><circle cx="2.4" cy="-0.2" r="0.68" fill="#fff" fill-opacity="0.8"/><circle cx="-2.4" cy="0.4" r="0.68" fill="#fff" fill-opacity="0.8"/></g><g transform="translate(166.8 125.3) rotate(-11.15)"><rect x="-0.66" y="-2.64" width="1.32" height="0.88" fill="#ab8677"/><circle r="2.2" fill="#eebba6"/></g><g transform="translate(169.9 130.7) rotate(7.76)"><rect x="-1.08" y="-4.32" width="2.16" height="1.44" fill="#84987e"/><circle r="3.6" fill="#b8d4b0"/><circle r="2.16" fill="none" stroke="#eef4e4" stroke-opacity="0.9" stroke-width="0.55"/><circle r="0.9" fill="none" stroke="#eef4e4" stroke-opacity="0.9" stroke-width="0.55"/></g><g transform="translate(172.6 123.1) rotate(29.27)"><rect x="-0.93" y="-3.72" width="1.86" height="1.24" fill="#ab8677"/><circle r="3.1" fill="#eebba6"/></g><g transform="translate(180.1 129.8) rotate(-11.2)"><rect x="-1.59" y="-6.36" width="3.18" height="2.12" fill="#ab8677"/><circle r="5.3" fill="#eebba6"/></g><g transform="translate(152.5 136) rotate(29.69)"><rect x="-0.81" y="-3.24" width="1.62" height="1.08" fill="#73392e"/><circle r="2.7" fill="#a05040"/><path d="M-2.58 0.06L0.06 -2.58M-2.13 1.29L1.29 -2.13M-1.29 2.13L2.13 -1.29M-0.06 2.58L2.58 -0.06" stroke="#fdf6ee" stroke-opacity="0.85" stroke-width="0.55"/></g><g transform="translate(145.9 140) rotate(3.16)"><rect x="-1.2" y="-4.8" width="2.4" height="1.6" fill="#ac8a7e"/><circle r="4" fill="#f0c0b0"/></g><g transform="translate(169.9 140) rotate(-13.13)"><rect x="-1.2" y="-4.8" width="2.4" height="1.6" fill="#9c6a48"/><circle r="4" fill="#f0d8c0"/><path d="M-3.73 -1.44L3.73 -1.44L4 0L3.73 1.44L-3.73 1.44L-4 0Z" fill="#f8efe0"/><g fill="#9a6a4a"><circle cx="-2.4" cy="-0.6" r="0.28"/><circle cx="-0.8" cy="-0.6" r="0.28"/><circle cx="0.8" cy="-0.6" r="0.28"/><circle cx="2.4" cy="-0.6" r="0.28"/><circle cx="-1.6" cy="0.68" r="0.28"/><circle cx="0" cy="0.68" r="0.28"/><circle cx="1.6" cy="0.68" r="0.28"/></g></g><g transform="translate(178.3 142.7) rotate(-12.82)"><rect x="-1.08" y="-4.32" width="2.16" height="1.44" fill="#84987e"/><circle r="3.6" fill="#b8d4b0"/><circle r="2.16" fill="none" stroke="#eef4e4" stroke-opacity="0.9" stroke-width="0.55"/><circle r="0.9" fill="none" stroke="#eef4e4" stroke-opacity="0.9" stroke-width="0.55"/></g><g transform="translate(154.8 146.7) rotate(-22.58)"><rect x="-1.47" y="-5.88" width="2.94" height="1.96" fill="#ac8170"/><circle r="4.9" fill="#f0b49c"/></g><g transform="translate(163.7 145.8) rotate(-29.53)"><rect x="-1.08" y="-4.32" width="2.16" height="1.44" fill="#849ea7"/><circle r="3.6" fill="#b8dce8"/></g><g transform="translate(170.8 148.9) rotate(-24.58)"><rect x="-0.93" y="-3.72" width="1.86" height="1.24" fill="#af9067"/><circle r="3.1" fill="#f4c890"/></g><g transform="translate(144.5 152.5) rotate(13.24)"><rect x="-1.2" y="-4.8" width="2.4" height="1.6" fill="#84987e"/><circle r="4" fill="#b8d4b0"/><circle r="2.4" fill="none" stroke="#eef4e4" stroke-opacity="0.9" stroke-width="0.55"/><circle r="1" fill="none" stroke="#eef4e4" stroke-opacity="0.9" stroke-width="0.55"/></g><g transform="translate(153.4 154.7) rotate(34.77)"><rect x="-0.81" y="-3.24" width="1.62" height="1.08" fill="#a9a4a1"/><circle r="2.7" fill="#ece4e0"/><circle cx="-1.22" cy="-0.81" r="0.46" fill="#fff" fill-opacity="0.8"/><circle cx="0.81" cy="-1.22" r="0.46" fill="#fff" fill-opacity="0.8"/><circle cx="0.14" cy="0.27" r="0.46" fill="#fff" fill-opacity="0.8"/><circle cx="-0.94" cy="1.35" r="0.46" fill="#fff" fill-opacity="0.8"/><circle cx="1.35" cy="0.81" r="0.46" fill="#fff" fill-opacity="0.8"/><circle cx="1.62" cy="-0.14" r="0.46" fill="#fff" fill-opacity="0.8"/><circle cx="-1.62" cy="0.27" r="0.46" fill="#fff" fill-opacity="0.8"/></g><g transform="translate(161.4 151.6) rotate(-23.69)"><rect x="-0.93" y="-3.72" width="1.86" height="1.24" fill="#84987e"/><circle r="3.1" fill="#b8d4b0"/></g><g transform="translate(178.8 150.7) rotate(-31.6)"><rect x="-0.93" y="-3.72" width="1.86" height="1.24" fill="#a49e9b"/><circle r="3.1" fill="#e4dcd8"/><circle cx="-1.4" cy="-0.93" r="0.53" fill="#fff" fill-opacity="0.8"/><circle cx="0.93" cy="-1.4" r="0.53" fill="#fff" fill-opacity="0.8"/><circle cx="0.16" cy="0.31" r="0.53" fill="#fff" fill-opacity="0.8"/><circle cx="-1.08" cy="1.55" r="0.53" fill="#fff" fill-opacity="0.8"/><circle cx="1.55" cy="0.93" r="0.53" fill="#fff" fill-opacity="0.8"/><circle cx="1.86" cy="-0.16" r="0.53" fill="#fff" fill-opacity="0.8"/><circle cx="-1.86" cy="0.31" r="0.53" fill="#fff" fill-opacity="0.8"/></g><g transform="translate(171.2 156) rotate(34.07)"><rect x="-1.2" y="-4.8" width="2.4" height="1.6" fill="#73392e"/><circle r="4" fill="#a05040"/><path d="M-3.82 0.09L0.09 -3.82M-3.16 1.92L1.92 -3.16M-1.92 3.16L3.16 -1.92M-0.09 3.82L3.82 -0.09" stroke="#fdf6ee" stroke-opacity="0.85" stroke-width="0.55"/></g><g transform="translate(161.9 158.7) rotate(2.35)"><rect x="-1.08" y="-4.32" width="2.16" height="1.44" fill="#ab8677"/><circle r="3.6" fill="#eebba6"/></g><g transform="translate(181 160.9) rotate(-6.59)"><rect x="-1.2" y="-4.8" width="2.4" height="1.6" fill="#849ea7"/><circle r="4" fill="#b8dce8"/></g><g transform="translate(149 163.9) rotate(-18.39)"><rect x="-1.2" y="-4.8" width="2.4" height="1.6" fill="#9c6a48"/><circle r="4" fill="#f2e2cc"/><path d="M-3.73 -1.44L3.73 -1.44L4 0L3.73 1.44L-3.73 1.44L-4 0Z" fill="#f8efe0"/><g fill="#9a6a4a"><circle cx="-2.4" cy="-0.6" r="0.28"/><circle cx="-0.8" cy="-0.6" r="0.28"/><circle cx="0.8" cy="-0.6" r="0.28"/><circle cx="2.4" cy="-0.6" r="0.28"/><circle cx="-1.6" cy="0.68" r="0.28"/><circle cx="0" cy="0.68" r="0.28"/><circle cx="1.6" cy="0.68" r="0.28"/></g></g><g transform="translate(148.1 172.3) rotate(6.58)"><rect x="-1.08" y="-4.32" width="2.16" height="1.44" fill="#af9067"/><circle r="3.6" fill="#f4c890"/></g><g transform="translate(155.7 170.5) rotate(22.84)"><rect x="-0.81" y="-3.24" width="1.62" height="1.08" fill="#849ea7"/><circle r="2.7" fill="#b8dce8"/></g><g transform="translate(159.2 166.1) rotate(-3.1)"><rect x="-0.66" y="-2.64" width="1.32" height="0.88" fill="#633529"/><circle r="2.2" fill="#8a4a3a"/></g><g transform="translate(161 176.8) rotate(-5.48)"><rect x="-1.2" y="-4.8" width="2.4" height="1.6" fill="#a49e9b"/><circle r="4" fill="#e4dcd8"/><circle cx="-1.8" cy="-1.2" r="0.68" fill="#fff" fill-opacity="0.8"/><circle cx="1.2" cy="-1.8" r="0.68" fill="#fff" fill-opacity="0.8"/><circle cx="0.2" cy="0.4" r="0.68" fill="#fff" fill-opacity="0.8"/><circle cx="-1.4" cy="2" r="0.68" fill="#fff" fill-opacity="0.8"/><circle cx="2" cy="1.2" r="0.68" fill="#fff" fill-opacity="0.8"/><circle cx="2.4" cy="-0.2" r="0.68" fill="#fff" fill-opacity="0.8"/><circle cx="-2.4" cy="0.4" r="0.68" fill="#fff" fill-opacity="0.8"/></g><g transform="translate(166.8 166.5) rotate(-31.1)"><rect x="-0.66" y="-2.64" width="1.32" height="0.88" fill="#ab8677"/><circle r="2.2" fill="#eebba6"/></g><g transform="translate(169.9 171.9) rotate(29.12)"><rect x="-1.08" y="-4.32" width="2.16" height="1.44" fill="#84987e"/><circle r="3.6" fill="#b8d4b0"/><circle r="2.16" fill="none" stroke="#eef4e4" stroke-opacity="0.9" stroke-width="0.55"/><circle r="0.9" fill="none" stroke="#eef4e4" stroke-opacity="0.9" stroke-width="0.55"/></g><g transform="translate(172.6 164.3) rotate(-32.71)"><rect x="-0.93" y="-3.72" width="1.86" height="1.24" fill="#ab8677"/><circle r="3.1" fill="#eebba6"/></g><g transform="translate(180.1 171) rotate(-0.45)"><rect x="-1.59" y="-6.36" width="3.18" height="2.12" fill="#ab8677"/><circle r="5.3" fill="#eebba6"/></g><g transform="translate(152.5 177.2) rotate(23.69)"><rect x="-0.81" y="-3.24" width="1.62" height="1.08" fill="#73392e"/><circle r="2.7" fill="#a05040"/><path d="M-2.58 0.06L0.06 -2.58M-2.13 1.29L1.29 -2.13M-1.29 2.13L2.13 -1.29M-0.06 2.58L2.58 -0.06" stroke="#fdf6ee" stroke-opacity="0.85" stroke-width="0.55"/></g><g transform="translate(145.9 181.2) rotate(-25.86)"><rect x="-1.2" y="-4.8" width="2.4" height="1.6" fill="#ac8a7e"/><circle r="4" fill="#f0c0b0"/></g><g transform="translate(169.9 181.2) rotate(16.22)"><rect x="-1.2" y="-4.8" width="2.4" height="1.6" fill="#9c6a48"/><circle r="4" fill="#f0d8c0"/><path d="M-3.73 -1.44L3.73 -1.44L4 0L3.73 1.44L-3.73 1.44L-4 0Z" fill="#f8efe0"/><g fill="#9a6a4a"><circle cx="-2.4" cy="-0.6" r="0.28"/><circle cx="-0.8" cy="-0.6" r="0.28"/><circle cx="0.8" cy="-0.6" r="0.28"/><circle cx="2.4" cy="-0.6" r="0.28"/><circle cx="-1.6" cy="0.68" r="0.28"/><circle cx="0" cy="0.68" r="0.28"/><circle cx="1.6" cy="0.68" r="0.28"/></g></g><g transform="translate(178.3 183.9) rotate(31.49)"><rect x="-1.08" y="-4.32" width="2.16" height="1.44" fill="#84987e"/><circle r="3.6" fill="#b8d4b0"/><circle r="2.16" fill="none" stroke="#eef4e4" stroke-opacity="0.9" stroke-width="0.55"/><circle r="0.9" fill="none" stroke="#eef4e4" stroke-opacity="0.9" stroke-width="0.55"/></g><g transform="translate(154.8 187.9) rotate(9.13)"><rect x="-1.47" y="-5.88" width="2.94" height="1.96" fill="#ac8170"/><circle r="4.9" fill="#f0b49c"/></g><g transform="translate(163.7 187) rotate(20.16)"><rect x="-1.08" y="-4.32" width="2.16" height="1.44" fill="#849ea7"/><circle r="3.6" fill="#b8dce8"/></g><g transform="translate(170.8 190.1) rotate(-27.54)"><rect x="-0.93" y="-3.72" width="1.86" height="1.24" fill="#af9067"/><circle r="3.1" fill="#f4c890"/></g><g transform="translate(144.5 193.7) rotate(-4.58)"><rect x="-1.2" y="-4.8" width="2.4" height="1.6" fill="#84987e"/><circle r="4" fill="#b8d4b0"/><circle r="2.4" fill="none" stroke="#eef4e4" stroke-opacity="0.9" stroke-width="0.55"/><circle r="1" fill="none" stroke="#eef4e4" stroke-opacity="0.9" stroke-width="0.55"/></g><g transform="translate(153.4 195.9) rotate(-24.55)"><rect x="-0.81" y="-3.24" width="1.62" height="1.08" fill="#a9a4a1"/><circle r="2.7" fill="#ece4e0"/><circle cx="-1.22" cy="-0.81" r="0.46" fill="#fff" fill-opacity="0.8"/><circle cx="0.81" cy="-1.22" r="0.46" fill="#fff" fill-opacity="0.8"/><circle cx="0.14" cy="0.27" r="0.46" fill="#fff" fill-opacity="0.8"/><circle cx="-0.94" cy="1.35" r="0.46" fill="#fff" fill-opacity="0.8"/><circle cx="1.35" cy="0.81" r="0.46" fill="#fff" fill-opacity="0.8"/><circle cx="1.62" cy="-0.14" r="0.46" fill="#fff" fill-opacity="0.8"/><circle cx="-1.62" cy="0.27" r="0.46" fill="#fff" fill-opacity="0.8"/></g><g transform="translate(161.4 192.8) rotate(24.13)"><rect x="-0.93" y="-3.72" width="1.86" height="1.24" fill="#84987e"/><circle r="3.1" fill="#b8d4b0"/></g><g transform="translate(178.8 191.9) rotate(-14.36)"><rect x="-0.93" y="-3.72" width="1.86" height="1.24" fill="#a49e9b"/><circle r="3.1" fill="#e4dcd8"/><circle cx="-1.4" cy="-0.93" r="0.53" fill="#fff" fill-opacity="0.8"/><circle cx="0.93" cy="-1.4" r="0.53" fill="#fff" fill-opacity="0.8"/><circle cx="0.16" cy="0.31" r="0.53" fill="#fff" fill-opacity="0.8"/><circle cx="-1.08" cy="1.55" r="0.53" fill="#fff" fill-opacity="0.8"/><circle cx="1.55" cy="0.93" r="0.53" fill="#fff" fill-opacity="0.8"/><circle cx="1.86" cy="-0.16" r="0.53" fill="#fff" fill-opacity="0.8"/><circle cx="-1.86" cy="0.31" r="0.53" fill="#fff" fill-opacity="0.8"/></g><g transform="translate(171.2 197.2) rotate(-3.28)"><rect x="-1.2" y="-4.8" width="2.4" height="1.6" fill="#73392e"/><circle r="4" fill="#a05040"/><path d="M-3.82 0.09L0.09 -3.82M-3.16 1.92L1.92 -3.16M-1.92 3.16L3.16 -1.92M-0.09 3.82L3.82 -0.09" stroke="#fdf6ee" stroke-opacity="0.85" stroke-width="0.55"/></g><g transform="translate(161.9 199.9) rotate(34.95)"><rect x="-1.08" y="-4.32" width="2.16" height="1.44" fill="#ab8677"/><circle r="3.6" fill="#eebba6"/></g><g transform="translate(181 202.1) rotate(24.66)"><rect x="-1.2" y="-4.8" width="2.4" height="1.6" fill="#849ea7"/><circle r="4" fill="#b8dce8"/></g><g transform="translate(149 205.1) rotate(33.32)"><rect x="-1.2" y="-4.8" width="2.4" height="1.6" fill="#9c6a48"/><circle r="4" fill="#f2e2cc"/><path d="M-3.73 -1.44L3.73 -1.44L4 0L3.73 1.44L-3.73 1.44L-4 0Z" fill="#f8efe0"/><g fill="#9a6a4a"><circle cx="-2.4" cy="-0.6" r="0.28"/><circle cx="-0.8" cy="-0.6" r="0.28"/><circle cx="0.8" cy="-0.6" r="0.28"/><circle cx="2.4" cy="-0.6" r="0.28"/><circle cx="-1.6" cy="0.68" r="0.28"/><circle cx="0" cy="0.68" r="0.28"/><circle cx="1.6" cy="0.68" r="0.28"/></g></g><g transform="translate(148.1 213.5) rotate(-3.25)"><rect x="-1.08" y="-4.32" width="2.16" height="1.44" fill="#af9067"/><circle r="3.6" fill="#f4c890"/></g><g transform="translate(155.7 211.7) rotate(-0.83)"><rect x="-0.81" y="-3.24" width="1.62" height="1.08" fill="#849ea7"/><circle r="2.7" fill="#b8dce8"/></g><g transform="translate(159.2 207.3) rotate(16.07)"><rect x="-0.66" y="-2.64" width="1.32" height="0.88" fill="#633529"/><circle r="2.2" fill="#8a4a3a"/></g><g transform="translate(161 218) rotate(-1.47)"><rect x="-1.2" y="-4.8" width="2.4" height="1.6" fill="#a49e9b"/><circle r="4" fill="#e4dcd8"/><circle cx="-1.8" cy="-1.2" r="0.68" fill="#fff" fill-opacity="0.8"/><circle cx="1.2" cy="-1.8" r="0.68" fill="#fff" fill-opacity="0.8"/><circle cx="0.2" cy="0.4" r="0.68" fill="#fff" fill-opacity="0.8"/><circle cx="-1.4" cy="2" r="0.68" fill="#fff" fill-opacity="0.8"/><circle cx="2" cy="1.2" r="0.68" fill="#fff" fill-opacity="0.8"/><circle cx="2.4" cy="-0.2" r="0.68" fill="#fff" fill-opacity="0.8"/><circle cx="-2.4" cy="0.4" r="0.68" fill="#fff" fill-opacity="0.8"/></g><g transform="translate(166.8 207.7) rotate(-14.63)"><rect x="-0.66" y="-2.64" width="1.32" height="0.88" fill="#ab8677"/><circle r="2.2" fill="#eebba6"/></g><g transform="translate(169.9 213.1) rotate(-6.73)"><rect x="-1.08" y="-4.32" width="2.16" height="1.44" fill="#84987e"/><circle r="3.6" fill="#b8d4b0"/><circle r="2.16" fill="none" stroke="#eef4e4" stroke-opacity="0.9" stroke-width="0.55"/><circle r="0.9" fill="none" stroke="#eef4e4" stroke-opacity="0.9" stroke-width="0.55"/></g><g transform="translate(172.6 205.5) rotate(-24.74)"><rect x="-0.93" y="-3.72" width="1.86" height="1.24" fill="#ab8677"/><circle r="3.1" fill="#eebba6"/></g><g transform="translate(180.1 212.2) rotate(-8.61)"><rect x="-1.59" y="-6.36" width="3.18" height="2.12" fill="#ab8677"/><circle r="5.3" fill="#eebba6"/></g><g transform="translate(152.5 218.4) rotate(34.19)"><rect x="-0.81" y="-3.24" width="1.62" height="1.08" fill="#73392e"/><circle r="2.7" fill="#a05040"/><path d="M-2.58 0.06L0.06 -2.58M-2.13 1.29L1.29 -2.13M-1.29 2.13L2.13 -1.29M-0.06 2.58L2.58 -0.06" stroke="#fdf6ee" stroke-opacity="0.85" stroke-width="0.55"/></g><g transform="translate(145.9 222.4) rotate(32.19)"><rect x="-1.2" y="-4.8" width="2.4" height="1.6" fill="#ac8a7e"/><circle r="4" fill="#f0c0b0"/></g><g transform="translate(169.9 222.4) rotate(8.89)"><rect x="-1.2" y="-4.8" width="2.4" height="1.6" fill="#9c6a48"/><circle r="4" fill="#f0d8c0"/><path d="M-3.73 -1.44L3.73 -1.44L4 0L3.73 1.44L-3.73 1.44L-4 0Z" fill="#f8efe0"/><g fill="#9a6a4a"><circle cx="-2.4" cy="-0.6" r="0.28"/><circle cx="-0.8" cy="-0.6" r="0.28"/><circle cx="0.8" cy="-0.6" r="0.28"/><circle cx="2.4" cy="-0.6" r="0.28"/><circle cx="-1.6" cy="0.68" r="0.28"/><circle cx="0" cy="0.68" r="0.28"/><circle cx="1.6" cy="0.68" r="0.28"/></g></g><g transform="translate(178.3 225.1) rotate(-0.05)"><rect x="-1.08" y="-4.32" width="2.16" height="1.44" fill="#84987e"/><circle r="3.6" fill="#b8d4b0"/><circle r="2.16" fill="none" stroke="#eef4e4" stroke-opacity="0.9" stroke-width="0.55"/><circle r="0.9" fill="none" stroke="#eef4e4" stroke-opacity="0.9" stroke-width="0.55"/></g><g transform="translate(154.8 229.1) rotate(-11.31)"><rect x="-1.47" y="-5.88" width="2.94" height="1.96" fill="#ac8170"/><circle r="4.9" fill="#f0b49c"/></g><g transform="translate(163.7 228.2) rotate(-28.76)"><rect x="-1.08" y="-4.32" width="2.16" height="1.44" fill="#849ea7"/><circle r="3.6" fill="#b8dce8"/></g><g transform="translate(170.8 231.3) rotate(-15.94)"><rect x="-0.93" y="-3.72" width="1.86" height="1.24" fill="#af9067"/><circle r="3.1" fill="#f4c890"/></g><g transform="translate(161.4 234) rotate(19.74)"><rect x="-0.93" y="-3.72" width="1.86" height="1.24" fill="#84987e"/><circle r="3.1" fill="#b8d4b0"/></g><g transform="translate(178.8 233.1) rotate(25.72)"><rect x="-0.93" y="-3.72" width="1.86" height="1.24" fill="#a49e9b"/><circle r="3.1" fill="#e4dcd8"/><circle cx="-1.4" cy="-0.93" r="0.53" fill="#fff" fill-opacity="0.8"/><circle cx="0.93" cy="-1.4" r="0.53" fill="#fff" fill-opacity="0.8"/><circle cx="0.16" cy="0.31" r="0.53" fill="#fff" fill-opacity="0.8"/><circle cx="-1.08" cy="1.55" r="0.53" fill="#fff" fill-opacity="0.8"/><circle cx="1.55" cy="0.93" r="0.53" fill="#fff" fill-opacity="0.8"/><circle cx="1.86" cy="-0.16" r="0.53" fill="#fff" fill-opacity="0.8"/><circle cx="-1.86" cy="0.31" r="0.53" fill="#fff" fill-opacity="0.8"/></g><g transform="translate(189.3 131.1) rotate(-9.71)"><rect x="-1.08" y="-4.32" width="2.16" height="1.44" fill="#af9067"/><circle r="3.6" fill="#f4c890"/></g><g transform="translate(187.1 140) rotate(20.02)"><rect x="-1.2" y="-4.8" width="2.4" height="1.6" fill="#ac8a7e"/><circle r="4" fill="#f0c0b0"/></g><g transform="translate(185.7 152.5) rotate(19.24)"><rect x="-1.2" y="-4.8" width="2.4" height="1.6" fill="#84987e"/><circle r="4" fill="#b8d4b0"/><circle r="2.4" fill="none" stroke="#eef4e4" stroke-opacity="0.9" stroke-width="0.55"/><circle r="1" fill="none" stroke="#eef4e4" stroke-opacity="0.9" stroke-width="0.55"/></g><g transform="translate(189.3 172.3) rotate(13.62)"><rect x="-1.08" y="-4.32" width="2.16" height="1.44" fill="#af9067"/><circle r="3.6" fill="#f4c890"/></g><g transform="translate(187.1 181.2) rotate(11.48)"><rect x="-1.2" y="-4.8" width="2.4" height="1.6" fill="#ac8a7e"/><circle r="4" fill="#f0c0b0"/></g><g transform="translate(185.7 193.7) rotate(18.17)"><rect x="-1.2" y="-4.8" width="2.4" height="1.6" fill="#84987e"/><circle r="4" fill="#b8d4b0"/><circle r="2.4" fill="none" stroke="#eef4e4" stroke-opacity="0.9" stroke-width="0.55"/><circle r="1" fill="none" stroke="#eef4e4" stroke-opacity="0.9" stroke-width="0.55"/></g><g transform="translate(189.3 213.5) rotate(-9.56)"><rect x="-1.08" y="-4.32" width="2.16" height="1.44" fill="#af9067"/><circle r="3.6" fill="#f4c890"/></g><g transform="translate(187.1 222.4) rotate(14.31)"><rect x="-1.2" y="-4.8" width="2.4" height="1.6" fill="#ac8a7e"/><circle r="4" fill="#f0c0b0"/></g></g><g clip-path="url(#c2)"><rect x="187.6" y="121" width="84.6" height="107.8" fill="#b7d9de"/><g fill="#2e5e68"><circle cx="183.85" cy="120.05" r="2.75"/><circle cx="196.8" cy="120.05" r="2.75"/><circle cx="209.75" cy="120.05" r="2.75"/><circle cx="222.7" cy="120.05" r="2.75"/><circle cx="235.65" cy="120.05" r="2.75"/><circle cx="248.6" cy="120.05" r="2.75"/><circle cx="261.55" cy="120.05" r="2.75"/><circle cx="274.5" cy="120.05" r="2.75"/><circle cx="190.32" cy="126.52" r="2.75"/><circle cx="203.27" cy="126.52" r="2.75"/><circle cx="216.22" cy="126.52" r="2.75"/><circle cx="229.17" cy="126.52" r="2.75"/><circle cx="242.12" cy="126.52" r="2.75"/><circle cx="255.07" cy="126.52" r="2.75"/><circle cx="268.02" cy="126.52" r="2.75"/><circle cx="183.85" cy="133" r="2.75"/><circle cx="196.8" cy="133" r="2.75"/><circle cx="209.75" cy="133" r="2.75"/><circle cx="222.7" cy="133" r="2.75"/><circle cx="235.65" cy="133" r="2.75"/><circle cx="248.6" cy="133" r="2.75"/><circle cx="261.55" cy="133" r="2.75"/><circle cx="274.5" cy="133" r="2.75"/><circle cx="190.32" cy="139.47" r="2.75"/><circle cx="203.27" cy="139.47" r="2.75"/><circle cx="216.22" cy="139.47" r="2.75"/><circle cx="229.17" cy="139.47" r="2.75"/><circle cx="242.12" cy="139.47" r="2.75"/><circle cx="255.07" cy="139.47" r="2.75"/><circle cx="268.02" cy="139.47" r="2.75"/><circle cx="183.85" cy="145.95" r="2.75"/><circle cx="196.8" cy="145.95" r="2.75"/><circle cx="209.75" cy="145.95" r="2.75"/><circle cx="222.7" cy="145.95" r="2.75"/><circle cx="235.65" cy="145.95" r="2.75"/><circle cx="248.6" cy="145.95" r="2.75"/><circle cx="261.55" cy="145.95" r="2.75"/><circle cx="274.5" cy="145.95" r="2.75"/><circle cx="190.32" cy="152.42" r="2.75"/><circle cx="203.27" cy="152.42" r="2.75"/><circle cx="216.22" cy="152.42" r="2.75"/><circle cx="229.17" cy="152.42" r="2.75"/><circle cx="242.12" cy="152.42" r="2.75"/><circle cx="255.07" cy="152.42" r="2.75"/><circle cx="268.02" cy="152.42" r="2.75"/><circle cx="183.85" cy="158.9" r="2.75"/><circle cx="196.8" cy="158.9" r="2.75"/><circle cx="209.75" cy="158.9" r="2.75"/><circle cx="222.7" cy="158.9" r="2.75"/><circle cx="235.65" cy="158.9" r="2.75"/><circle cx="248.6" cy="158.9" r="2.75"/><circle cx="261.55" cy="158.9" r="2.75"/><circle cx="274.5" cy="158.9" r="2.75"/><circle cx="190.32" cy="165.37" r="2.75"/><circle cx="203.27" cy="165.37" r="2.75"/><circle cx="216.22" cy="165.37" r="2.75"/><circle cx="229.17" cy="165.37" r="2.75"/><circle cx="242.12" cy="165.37" r="2.75"/><circle cx="255.07" cy="165.37" r="2.75"/><circle cx="268.02" cy="165.37" r="2.75"/><circle cx="183.85" cy="171.85" r="2.75"/><circle cx="196.8" cy="171.85" r="2.75"/><circle cx="209.75" cy="171.85" r="2.75"/><circle cx="222.7" cy="171.85" r="2.75"/><circle cx="235.65" cy="171.85" r="2.75"/><circle cx="248.6" cy="171.85" r="2.75"/><circle cx="261.55" cy="171.85" r="2.75"/><circle cx="274.5" cy="171.85" r="2.75"/><circle cx="190.32" cy="178.32" r="2.75"/><circle cx="203.27" cy="178.32" r="2.75"/><circle cx="216.22" cy="178.32" r="2.75"/><circle cx="229.17" cy="178.32" r="2.75"/><circle cx="242.12" cy="178.32" r="2.75"/><circle cx="255.07" cy="178.32" r="2.75"/><circle cx="268.02" cy="178.32" r="2.75"/><circle cx="183.85" cy="184.8" r="2.75"/><circle cx="196.8" cy="184.8" r="2.75"/><circle cx="209.75" cy="184.8" r="2.75"/><circle cx="222.7" cy="184.8" r="2.75"/><circle cx="235.65" cy="184.8" r="2.75"/><circle cx="248.6" cy="184.8" r="2.75"/><circle cx="261.55" cy="184.8" r="2.75"/><circle cx="274.5" cy="184.8" r="2.75"/><circle cx="190.32" cy="191.27" r="2.75"/><circle cx="203.27" cy="191.27" r="2.75"/><circle cx="216.22" cy="191.27" r="2.75"/><circle cx="229.17" cy="191.27" r="2.75"/><circle cx="242.12" cy="191.27" r="2.75"/><circle cx="255.07" cy="191.27" r="2.75"/><circle cx="268.02" cy="191.27" r="2.75"/><circle cx="183.85" cy="197.75" r="2.75"/><circle cx="196.8" cy="197.75" r="2.75"/><circle cx="209.75" cy="197.75" r="2.75"/><circle cx="222.7" cy="197.75" r="2.75"/><circle cx="235.65" cy="197.75" r="2.75"/><circle cx="248.6" cy="197.75" r="2.75"/><circle cx="261.55" cy="197.75" r="2.75"/><circle cx="274.5" cy="197.75" r="2.75"/><circle cx="190.32" cy="204.22" r="2.75"/><circle cx="203.27" cy="204.22" r="2.75"/><circle cx="216.22" cy="204.22" r="2.75"/><circle cx="229.17" cy="204.22" r="2.75"/><circle cx="242.12" cy="204.22" r="2.75"/><circle cx="255.07" cy="204.22" r="2.75"/><circle cx="268.02" cy="204.22" r="2.75"/><circle cx="183.85" cy="210.7" r="2.75"/><circle cx="196.8" cy="210.7" r="2.75"/><circle cx="209.75" cy="210.7" r="2.75"/><circle cx="222.7" cy="210.7" r="2.75"/><circle cx="235.65" cy="210.7" r="2.75"/><circle cx="248.6" cy="210.7" r="2.75"/><circle cx="261.55" cy="210.7" r="2.75"/><circle cx="274.5" cy="210.7" r="2.75"/><circle cx="190.32" cy="217.17" r="2.75"/><circle cx="203.27" cy="217.17" r="2.75"/><circle cx="216.22" cy="217.17" r="2.75"/><circle cx="229.17" cy="217.17" r="2.75"/><circle cx="242.12" cy="217.17" r="2.75"/><circle cx="255.07" cy="217.17" r="2.75"/><circle cx="268.02" cy="217.17" r="2.75"/><circle cx="183.85" cy="223.65" r="2.75"/><circle cx="196.8" cy="223.65" r="2.75"/><circle cx="209.75" cy="223.65" r="2.75"/><circle cx="222.7" cy="223.65" r="2.75"/><circle cx="235.65" cy="223.65" r="2.75"/><circle cx="248.6" cy="223.65" r="2.75"/><circle cx="261.55" cy="223.65" r="2.75"/><circle cx="274.5" cy="223.65" r="2.75"/><circle cx="190.32" cy="230.12" r="2.75"/><circle cx="203.27" cy="230.12" r="2.75"/><circle cx="216.22" cy="230.12" r="2.75"/><circle cx="229.17" cy="230.12" r="2.75"/><circle cx="242.12" cy="230.12" r="2.75"/><circle cx="255.07" cy="230.12" r="2.75"/><circle cx="268.02" cy="230.12" r="2.75"/></g></g><g clip-path="url(#c3)"><rect x="275.1" y="121" width="84.6" height="107.8" fill="#375d67"/><circle cx="353.34" cy="223.26" r="0.7" fill="#d08a6a"/><circle cx="276.54" cy="154.07" r="0.7" fill="#a8d0d8"/><circle cx="319.95" cy="135.05" r="0.7" fill="#d08a6a"/><circle cx="297.72" cy="122.52" r="0.7" fill="#e8c890"/><circle cx="313.6" cy="123.67" r="0.7" fill="#d08a6a"/><circle cx="358.12" cy="174.71" r="0.7" fill="#d08a6a"/><circle cx="318.47" cy="200.15" r="0.7" fill="#a8d0d8"/><circle cx="340.31" cy="143.17" r="0.7" fill="#d08a6a"/><circle cx="324.94" cy="191.92" r="0.7" fill="#e8c890"/><circle cx="293.38" cy="200.26" r="0.7" fill="#e8c890"/><circle cx="339.38" cy="160.74" r="0.7" fill="#e8c890"/><circle cx="298.9" cy="226.06" r="0.7" fill="#e8c890"/><circle cx="282.35" cy="172.1" r="0.7" fill="#e8c890"/><circle cx="315.97" cy="206.32" r="0.7" fill="#e8c890"/><circle cx="329.45" cy="140.62" r="0.7" fill="#d08a6a"/><circle cx="320.24" cy="193.59" r="0.7" fill="#e8c890"/><circle cx="291.65" cy="133.32" r="0.7" fill="#d08a6a"/><circle cx="311.15" cy="182.23" r="0.7" fill="#e8c890"/><circle cx="298.84" cy="184.6" r="0.7" fill="#d08a6a"/><circle cx="306.37" cy="152.1" r="0.7" fill="#a8d0d8"/><circle cx="350.78" cy="170.02" r="0.7" fill="#d08a6a"/><circle cx="296.96" cy="132.55" r="0.7" fill="#d08a6a"/><circle cx="334.92" cy="210.32" r="0.7" fill="#d08a6a"/><circle cx="302.87" cy="136.36" r="0.7" fill="#e8c890"/><circle cx="325.24" cy="222.92" r="0.7" fill="#d08a6a"/><circle cx="313.11" cy="124.64" r="0.7" fill="#e8c890"/><circle cx="310.31" cy="123.52" r="0.7" fill="#d08a6a"/><circle cx="333.24" cy="225.97" r="0.7" fill="#e8c890"/><circle cx="355.37" cy="179.06" r="0.7" fill="#a8d0d8"/><circle cx="338.47" cy="158.31" r="0.7" fill="#a8d0d8"/><circle cx="316.6" cy="124.99" r="0.7" fill="#a8d0d8"/><circle cx="314.52" cy="142.2" r="0.7" fill="#a8d0d8"/><circle cx="355.51" cy="144.28" r="0.7" fill="#d08a6a"/><circle cx="322.17" cy="191.02" r="0.7" fill="#e8c890"/><circle cx="321.09" cy="208.62" r="0.7" fill="#a8d0d8"/><circle cx="283.56" cy="138.78" r="0.7" fill="#d08a6a"/><circle cx="312.72" cy="157.95" r="0.7" fill="#a8d0d8"/><circle cx="343.94" cy="217.5" r="0.7" fill="#e8c890"/><circle cx="343.67" cy="128.5" r="0.7" fill="#e8c890"/><circle cx="338.19" cy="179.84" r="0.7" fill="#a8d0d8"/><g transform="translate(288.5 123.5) rotate(-6.33)"><rect x="-2.49" y="-9.96" width="4.98" height="3.32" fill="#a87d6d"/><circle r="8.3" fill="#f0b49c"/><path d="M-7.93 0.18L0.18 -7.93M-6.56 3.98L3.98 -6.56M-3.98 6.56L6.56 -3.98M-0.18 7.93L7.93 -0.18" stroke="#fdf6ee" stroke-opacity="0.85" stroke-width="1.08"/></g><g transform="translate(307.8 130.9) rotate(19.02)"><rect x="-2.49" y="-9.96" width="4.98" height="3.32" fill="#6d8562"/><circle r="8.3" fill="#9cbf8c"/><circle r="4.98" fill="none" stroke="#eef4e4" stroke-opacity="0.9" stroke-width="1.08"/><circle r="2.08" fill="none" stroke="#eef4e4" stroke-opacity="0.9" stroke-width="1.08"/></g><g transform="translate(325.4 127.2) rotate(4)"><rect x="-1.95" y="-7.8" width="3.9" height="2.6" fill="#97918e"/><circle r="6.5" fill="#d9d0cb"/><circle cx="-2.93" cy="-1.95" r="1.1" fill="#fff" fill-opacity="0.8"/><circle cx="1.95" cy="-2.93" r="1.1" fill="#fff" fill-opacity="0.8"/><circle cx="0.33" cy="0.65" r="1.1" fill="#fff" fill-opacity="0.8"/><circle cx="-2.27" cy="3.25" r="1.1" fill="#fff" fill-opacity="0.8"/><circle cx="3.25" cy="1.95" r="1.1" fill="#fff" fill-opacity="0.8"/><circle cx="3.9" cy="-0.33" r="1.1" fill="#fff" fill-opacity="0.8"/><circle cx="-3.9" cy="0.65" r="1.1" fill="#fff" fill-opacity="0.8"/></g><g transform="translate(340 122.5) rotate(3.5)"><rect x="-1.38" y="-5.52" width="2.76" height="1.84" fill="#aa9572"/><circle r="4.6" fill="#f4d6a4"/></g><g transform="translate(358.6 127.2) rotate(22.86)"><rect x="-1.8" y="-7.2" width="3.6" height="2.4" fill="#80947b"/><circle r="6" fill="#b8d4b0"/></g><g transform="translate(291.2 137.5) rotate(-27.41)"><rect x="-1.95" y="-7.8" width="3.9" height="2.6" fill="#97918e"/><circle r="6.5" fill="#d9d0cb"/><circle cx="-2.93" cy="-1.95" r="1.1" fill="#fff" fill-opacity="0.8"/><circle cx="1.95" cy="-2.93" r="1.1" fill="#fff" fill-opacity="0.8"/><circle cx="0.33" cy="0.65" r="1.1" fill="#fff" fill-opacity="0.8"/><circle cx="-2.27" cy="3.25" r="1.1" fill="#fff" fill-opacity="0.8"/><circle cx="3.25" cy="1.95" r="1.1" fill="#fff" fill-opacity="0.8"/><circle cx="3.9" cy="-0.33" r="1.1" fill="#fff" fill-opacity="0.8"/><circle cx="-3.9" cy="0.65" r="1.1" fill="#fff" fill-opacity="0.8"/></g><g transform="translate(340.1 138.3) rotate(9.19)"><rect x="-2.67" y="-10.68" width="5.34" height="3.56" fill="#633125"/><circle r="8.9" fill="#8e4636"/><path d="M-7.57 -2.67q1.33 -1.96 2.67 0t2.67 0t2.67 0t2.67 0t2.67 0M-7.57 2.23q1.33 -1.96 2.67 0t2.67 0t2.67 0t2.67 0t2.67 0" fill="none" stroke="#fbeee4" stroke-width="1.16"/></g><g transform="translate(278.3 143.8) rotate(-11.72)"><rect x="-1.95" y="-7.8" width="3.9" height="2.6" fill="#a98777"/><circle r="6.5" fill="#f2c2ab"/></g><g transform="translate(321.7 147.5) rotate(4.15)"><rect x="-2.49" y="-9.96" width="4.98" height="3.32" fill="#7f979e"/><circle r="8.3" fill="#b6d9e3"/><path d="M-7.93 0.18L0.18 -7.93M-6.56 3.98L3.98 -6.56M-3.98 6.56L6.56 -3.98M-0.18 7.93L7.93 -0.18" stroke="#fdf6ee" stroke-opacity="0.85" stroke-width="1.08"/></g><g transform="translate(358.6 143.8) rotate(23.47)"><rect x="-1.65" y="-6.6" width="3.3" height="2.2" fill="#a98777"/><circle r="5.5" fill="#f2c2ab"/></g><g transform="translate(299.5 152.1) rotate(-17.62)"><rect x="-3" y="-12" width="6" height="4" fill="#9c6a48"/><circle r="10" fill="#b87a45"/><path d="M-9.33 -3.6L9.33 -3.6L10 0L9.33 3.6L-9.33 3.6L-10 0Z" fill="#f8efe0"/><g fill="#9a6a4a"><circle cx="-6" cy="-1.5" r="0.7"/><circle cx="-2" cy="-1.5" r="0.7"/><circle cx="2" cy="-1.5" r="0.7"/><circle cx="6" cy="-1.5" r="0.7"/><circle cx="-4" cy="1.7" r="0.7"/><circle cx="0" cy="1.7" r="0.7"/><circle cx="4" cy="1.7" r="0.7"/></g></g><g transform="translate(278.3 160.4) rotate(31.61)"><rect x="-1.65" y="-6.6" width="3.3" height="2.2" fill="#633125"/><circle r="5.5" fill="#8e4636"/><path d="M-4.67 -1.65q0.82 -1.21 1.65 0t1.65 0t1.65 0t1.65 0t1.65 0M-4.67 1.38q0.82 -1.21 1.65 0t1.65 0t1.65 0t1.65 0t1.65 0" fill="none" stroke="#fbeee4" stroke-width="0.72"/></g><g transform="translate(336 156) rotate(-29.5)"><rect x="-1.65" y="-6.6" width="3.3" height="2.2" fill="#a89863"/><circle r="5.5" fill="#f0da8e"/></g><g transform="translate(340.1 166) rotate(4.34)"><rect x="-3.3" y="-13.2" width="6.6" height="4.4" fill="#839160"/><circle r="11" fill="#bcd08a"/><circle cx="-3.85" cy="-4.4" r="4.18" fill="#e4e49a" fill-opacity="0.9"/><circle cx="4.4" cy="-2.2" r="3.3" fill="#e4e49a" fill-opacity="0.9"/><circle cx="-1.1" cy="3.85" r="4.62" fill="#e4e49a" fill-opacity="0.9"/><circle cx="5.5" cy="4.95" r="2.75" fill="#e4e49a" fill-opacity="0.9"/><circle cx="-6.6" cy="2.2" r="2.42" fill="#e4e49a" fill-opacity="0.9"/></g><g transform="translate(320.7 168.7) rotate(2.93)"><rect x="-2.76" y="-11.04" width="5.52" height="3.68" fill="#a87d6d"/><circle r="9.2" fill="#f0b49c"/><path d="M-8.79 0.2L0.2 -8.79M-7.27 4.41L4.41 -7.27M-4.41 7.27L7.27 -4.41M-0.2 8.79L8.79 -0.2" stroke="#fdf6ee" stroke-opacity="0.85" stroke-width="1.2"/></g><g transform="translate(302.3 171.5) rotate(-18.54)"><rect x="-2.1" y="-8.4" width="4.2" height="2.8" fill="#aa8c64"/><circle r="7" fill="#f4c890"/><path d="M-6.69 0.15L0.15 -6.69M-5.53 3.35L3.35 -5.53M-3.35 5.53L5.53 -3.35M-0.15 6.69L6.69 -0.15" stroke="#fdf6ee" stroke-opacity="0.85" stroke-width="0.91"/></g><g transform="translate(286.6 167.8) rotate(4.26)"><rect x="-1.38" y="-5.52" width="2.76" height="1.84" fill="#7f979e"/><circle r="4.6" fill="#b6d9e3"/></g><g transform="translate(278.3 178.9) rotate(-2.05)"><rect x="-2.22" y="-8.88" width="4.44" height="2.96" fill="#97918e"/><circle r="7.4" fill="#d9d0cb"/><circle cx="-3.33" cy="-2.22" r="1.26" fill="#fff" fill-opacity="0.8"/><circle cx="2.22" cy="-3.33" r="1.26" fill="#fff" fill-opacity="0.8"/><circle cx="0.37" cy="0.74" r="1.26" fill="#fff" fill-opacity="0.8"/><circle cx="-2.59" cy="3.7" r="1.26" fill="#fff" fill-opacity="0.8"/><circle cx="3.7" cy="2.22" r="1.26" fill="#fff" fill-opacity="0.8"/><circle cx="4.44" cy="-0.37" r="1.26" fill="#fff" fill-opacity="0.8"/><circle cx="-4.44" cy="0.74" r="1.26" fill="#fff" fill-opacity="0.8"/></g><g transform="translate(293 182.6) rotate(-3.53)"><rect x="-1.95" y="-7.8" width="3.9" height="2.6" fill="#633125"/><circle r="6.5" fill="#8e4636"/><path d="M-5.52 -1.95q0.97 -1.43 1.95 0t1.95 0t1.95 0t1.95 0t1.95 0M-5.52 1.62q0.97 -1.43 1.95 0t1.95 0t1.95 0t1.95 0t1.95 0" fill="none" stroke="#fbeee4" stroke-width="0.84"/></g><g transform="translate(306 189) rotate(15.29)"><rect x="-2.49" y="-9.96" width="4.98" height="3.32" fill="#a98777"/><circle r="8.3" fill="#f2c2ab"/></g><g transform="translate(342 188.1) rotate(-34.72)"><rect x="-2.67" y="-10.68" width="5.34" height="3.56" fill="#9c6a48"/><circle r="8.9" fill="#b87a45"/><path d="M-8.3 -3.2L8.3 -3.2L8.9 0L8.3 3.2L-8.3 3.2L-8.9 0Z" fill="#f8efe0"/><g fill="#9a6a4a"><circle cx="-5.34" cy="-1.33" r="0.62"/><circle cx="-1.78" cy="-1.33" r="0.62"/><circle cx="1.78" cy="-1.33" r="0.62"/><circle cx="5.34" cy="-1.33" r="0.62"/><circle cx="-3.56" cy="1.51" r="0.62"/><circle cx="0" cy="1.51" r="0.62"/><circle cx="3.56" cy="1.51" r="0.62"/></g></g><g transform="translate(358.6 177) rotate(-8.6)"><rect x="-1.95" y="-7.8" width="3.9" height="2.6" fill="#97918e"/><circle r="6.5" fill="#d9d0cb"/><circle cx="-2.93" cy="-1.95" r="1.1" fill="#fff" fill-opacity="0.8"/><circle cx="1.95" cy="-2.93" r="1.1" fill="#fff" fill-opacity="0.8"/><circle cx="0.33" cy="0.65" r="1.1" fill="#fff" fill-opacity="0.8"/><circle cx="-2.27" cy="3.25" r="1.1" fill="#fff" fill-opacity="0.8"/><circle cx="3.25" cy="1.95" r="1.1" fill="#fff" fill-opacity="0.8"/><circle cx="3.9" cy="-0.33" r="1.1" fill="#fff" fill-opacity="0.8"/><circle cx="-3.9" cy="0.65" r="1.1" fill="#fff" fill-opacity="0.8"/></g><g transform="translate(326.3 195.5) rotate(19.99)"><rect x="-2.22" y="-8.88" width="4.44" height="2.96" fill="#6d8562"/><circle r="7.4" fill="#9cbf8c"/><circle r="4.44" fill="none" stroke="#eef4e4" stroke-opacity="0.9" stroke-width="0.96"/><circle r="1.85" fill="none" stroke="#eef4e4" stroke-opacity="0.9" stroke-width="0.96"/></g><g transform="translate(288.5 202) rotate(-25.07)"><rect x="-3" y="-12" width="6" height="4" fill="#a87d6d"/><circle r="10" fill="#f0b49c"/><path d="M-9.55 0.22L0.22 -9.55M-7.9 4.79L4.79 -7.9M-4.79 7.9L7.9 -4.79M-0.22 9.55L9.55 -0.22" stroke="#fdf6ee" stroke-opacity="0.85" stroke-width="1.3"/></g><g transform="translate(354.9 201) rotate(25.72)"><rect x="-2.1" y="-8.4" width="4.2" height="2.8" fill="#7f979e"/><circle r="7" fill="#b6d9e3"/><path d="M-6.69 0.15L0.15 -6.69M-5.53 3.35L3.35 -5.53M-3.35 5.53L5.53 -3.35M-0.15 6.69L6.69 -0.15" stroke="#fdf6ee" stroke-opacity="0.85" stroke-width="0.91"/></g><g transform="translate(308.7 214) rotate(-20.75)"><rect x="-2.76" y="-11.04" width="5.52" height="3.68" fill="#6d8562"/><circle r="9.2" fill="#9cbf8c"/><circle r="5.52" fill="none" stroke="#eef4e4" stroke-opacity="0.9" stroke-width="1.2"/><circle r="2.3" fill="none" stroke="#eef4e4" stroke-opacity="0.9" stroke-width="1.2"/></g><g transform="translate(325.4 211.2) rotate(12.68)"><rect x="-2.22" y="-8.88" width="4.44" height="2.96" fill="#97918e"/><circle r="7.4" fill="#d9d0cb"/><circle cx="-3.33" cy="-2.22" r="1.26" fill="#fff" fill-opacity="0.8"/><circle cx="2.22" cy="-3.33" r="1.26" fill="#fff" fill-opacity="0.8"/><circle cx="0.37" cy="0.74" r="1.26" fill="#fff" fill-opacity="0.8"/><circle cx="-2.59" cy="3.7" r="1.26" fill="#fff" fill-opacity="0.8"/><circle cx="3.7" cy="2.22" r="1.26" fill="#fff" fill-opacity="0.8"/><circle cx="4.44" cy="-0.37" r="1.26" fill="#fff" fill-opacity="0.8"/><circle cx="-4.44" cy="0.74" r="1.26" fill="#fff" fill-opacity="0.8"/></g><g transform="translate(340.1 206.6) rotate(-22.88)"><rect x="-1.65" y="-6.6" width="3.3" height="2.2" fill="#aa8c64"/><circle r="5.5" fill="#f4c890"/></g><g transform="translate(340.1 221.3) rotate(-3.55)"><rect x="-2.22" y="-8.88" width="4.44" height="2.96" fill="#633125"/><circle r="7.4" fill="#8e4636"/><path d="M-6.29 -2.22q1.11 -1.63 2.22 0t2.22 0t2.22 0t2.22 0t2.22 0M-6.29 1.85q1.11 -1.63 2.22 0t2.22 0t2.22 0t2.22 0t2.22 0" fill="none" stroke="#fbeee4" stroke-width="0.96"/></g><g transform="translate(291.2 219.5) rotate(-5.42)"><rect x="-1.65" y="-6.6" width="3.3" height="2.2" fill="#97918e"/><circle r="5.5" fill="#d9d0cb"/><circle cx="-2.48" cy="-1.65" r="0.94" fill="#fff" fill-opacity="0.8"/><circle cx="1.65" cy="-2.48" r="0.94" fill="#fff" fill-opacity="0.8"/><circle cx="0.28" cy="0.55" r="0.94" fill="#fff" fill-opacity="0.8"/><circle cx="-1.92" cy="2.75" r="0.94" fill="#fff" fill-opacity="0.8"/><circle cx="2.75" cy="1.65" r="0.94" fill="#fff" fill-opacity="0.8"/><circle cx="3.3" cy="-0.28" r="0.94" fill="#fff" fill-opacity="0.8"/><circle cx="-3.3" cy="0.55" r="0.94" fill="#fff" fill-opacity="0.8"/></g><g transform="translate(356.7 214) rotate(-29.27)"><rect x="-1.38" y="-5.52" width="2.76" height="1.84" fill="#80947b"/><circle r="4.6" fill="#b8d4b0"/></g><g transform="translate(280 226) rotate(13.97)"><rect x="-1.5" y="-6" width="3" height="2" fill="#80947b"/><circle r="5" fill="#b8d4b0"/></g><g transform="translate(320 228) rotate(-1.39)"><rect x="-1.5" y="-6" width="3" height="2" fill="#7f979e"/><circle r="5" fill="#b6d9e3"/></g></g><g clip-path="url(#c4)"><rect x="363.8" y="121" width="84.6" height="107.8" rx="0" fill="#6b775d"/><g fill="#c4ceac"><circle cx="420.89" cy="125.38" r="1.35"/><circle cx="420.89" cy="181.84" r="1.35"/><circle cx="390.07" cy="129.44" r="1.35"/><circle cx="390.07" cy="185.9" r="1.35"/><circle cx="406.13" cy="130.55" r="1.35"/><circle cx="406.13" cy="187" r="1.35"/><circle cx="446.35" cy="129.44" r="1.35"/><circle cx="446.35" cy="185.9" r="1.35"/><circle cx="372.55" cy="135.9" r="1.35"/><circle cx="372.55" cy="192.35" r="1.35"/><circle cx="398.38" cy="135.9" r="1.35"/><circle cx="398.38" cy="192.35" r="1.35"/><circle cx="415.35" cy="135.53" r="1.35"/><circle cx="415.35" cy="191.99" r="1.35"/><circle cx="428.63" cy="135.9" r="1.35"/><circle cx="428.63" cy="192.35" r="1.35"/><circle cx="373.47" cy="143.28" r="1.35"/><circle cx="373.47" cy="199.73" r="1.35"/><circle cx="389.15" cy="141.43" r="1.35"/><circle cx="389.15" cy="197.89" r="1.35"/><circle cx="410.74" cy="141.99" r="1.35"/><circle cx="410.74" cy="198.44" r="1.35"/><circle cx="429.74" cy="143.28" r="1.35"/><circle cx="429.74" cy="199.73" r="1.35"/><circle cx="445.24" cy="141.06" r="1.35"/><circle cx="445.24" cy="197.52" r="1.35"/><circle cx="417.56" cy="145.31" r="1.35"/><circle cx="417.56" cy="201.76" r="1.35"/><circle cx="403.91" cy="147.52" r="1.35"/><circle cx="403.91" cy="203.98" r="1.35"/><circle cx="369.59" cy="150.66" r="1.35"/><circle cx="369.59" cy="207.11" r="1.35"/><circle cx="426.05" cy="150.66" r="1.35"/><circle cx="426.05" cy="207.11" r="1.35"/><circle cx="388.6" cy="153.61" r="1.35"/><circle cx="388.6" cy="210.07" r="1.35"/><circle cx="444.87" cy="153.61" r="1.35"/><circle cx="444.87" cy="210.07" r="1.35"/><circle cx="404.83" cy="160.8" r="1.35"/><circle cx="404.83" cy="217.26" r="1.35"/><circle cx="414.43" cy="159.51" r="1.35"/><circle cx="414.43" cy="215.97" r="1.35"/><circle cx="372.55" cy="164.13" r="1.35"/><circle cx="372.55" cy="220.58" r="1.35"/><circle cx="429.19" cy="164.13" r="1.35"/><circle cx="429.19" cy="220.58" r="1.35"/><circle cx="385.83" cy="167.45" r="1.35"/><circle cx="385.83" cy="223.9" r="1.35"/><circle cx="418.67" cy="166.52" r="1.35"/><circle cx="418.67" cy="222.98" r="1.35"/><circle cx="441.55" cy="167.45" r="1.35"/><circle cx="441.55" cy="223.9" r="1.35"/><circle cx="396.9" cy="171.14" r="1.35"/><circle cx="396.9" cy="227.59" r="1.35"/><circle cx="406.68" cy="175.56" r="1.35"/><circle cx="406.68" cy="232.02" r="1.35"/><circle cx="381.77" cy="177.96" r="1.35"/><circle cx="381.77" cy="234.42" r="1.35"/><circle cx="438.41" cy="177.96" r="1.35"/><circle cx="438.41" cy="234.42" r="1.35"/><circle cx="364.61" cy="181.65" r="1.35"/><circle cx="364.61" cy="238.11" r="1.35"/><circle cx="382.14" cy="121.32" r="1.35"/><circle cx="382.14" cy="177.78" r="1.35"/><circle cx="438.41" cy="121.32" r="1.35"/><circle cx="438.41" cy="177.78" r="1.35"/></g></g><rect x="100.5" y="233.6" width="81.4" height="103.3" rx="0" fill="#fff" stroke="#6e8c6c" stroke-width="3.2"/><rect x="189.2" y="233.6" width="81.4" height="103.3" rx="0" fill="#fff" stroke="#15525a" stroke-width="3.2"/><rect x="277" y="233.9" width="80.8" height="102.7" rx="0" fill="#fff" stroke="#fde6c6" stroke-width="3.8"/><rect x="365.7" y="233.9" width="80.8" height="102.7" rx="0" fill="#fff" stroke="#d9eef0" stroke-width="3.8"/><g clip-path="url(#c5)"><rect x="98.9" y="342.6" width="84.6" height="53.2" rx="11" fill="#31606c"/><g fill="#a9cdd0"><circle cx="112.05" cy="344.52" r="1.25"/><circle cx="169.22" cy="344.52" r="1.25"/><circle cx="151.67" cy="348.03" r="1.25"/><circle cx="120.57" cy="352.04" r="1.25"/><circle cx="137.12" cy="353.05" r="1.25"/><circle cx="177.75" cy="352.04" r="1.25"/><circle cx="102.52" cy="358.56" r="1.25"/><circle cx="129.1" cy="358.56" r="1.25"/><circle cx="146.15" cy="358.06" r="1.25"/><circle cx="159.69" cy="358.56" r="1.25"/><circle cx="119.57" cy="363.58" r="1.25"/><circle cx="141.14" cy="364.58" r="1.25"/><circle cx="176.24" cy="363.58" r="1.25"/><circle cx="103.52" cy="366.08" r="1.25"/><circle cx="160.69" cy="366.08" r="1.25"/><circle cx="148.16" cy="368.09" r="1.25"/><circle cx="134.62" cy="370.6" r="1.25"/><circle cx="100.01" cy="373.61" r="1.25"/><circle cx="156.68" cy="373.61" r="1.25"/><circle cx="119.07" cy="376.62" r="1.25"/><circle cx="176.24" cy="376.62" r="1.25"/><circle cx="135.62" cy="383.64" r="1.25"/><circle cx="145.15" cy="382.13" r="1.25"/><circle cx="103.02" cy="387.15" r="1.25"/><circle cx="159.69" cy="387.15" r="1.25"/><circle cx="116.06" cy="390.16" r="1.25"/><circle cx="149.66" cy="389.65" r="1.25"/><circle cx="172.73" cy="390.16" r="1.25"/><circle cx="127.09" cy="393.67" r="1.25"/></g></g><g clip-path="url(#c6)"><rect x="187.6" y="342.6" width="84.6" height="53.2" fill="#f8cfa5"/><circle cx="188.64" cy="348.58" r="0.7" fill="#a8d0d8"/><circle cx="199.52" cy="344.9" r="0.7" fill="#c88a5a"/><circle cx="232.88" cy="380.45" r="0.7" fill="#c88a5a"/><circle cx="200.07" cy="382" r="0.7" fill="#c88a5a"/><circle cx="199.15" cy="371.1" r="0.7" fill="#a8d0d8"/><circle cx="232.11" cy="353.5" r="0.7" fill="#c88a5a"/><circle cx="197.6" cy="383.58" r="0.7" fill="#a8d0d8"/><circle cx="216.49" cy="353.56" r="0.7" fill="#a8d0d8"/><circle cx="218.47" cy="393.41" r="0.7" fill="#c88a5a"/><circle cx="248.85" cy="364.75" r="0.7" fill="#c88a5a"/><circle cx="268.29" cy="387.22" r="0.7" fill="#a8d0d8"/><circle cx="199" cy="350.45" r="0.7" fill="#a8d0d8"/><circle cx="190.17" cy="381.7" r="0.7" fill="#a8d0d8"/><circle cx="242.69" cy="354.22" r="0.7" fill="#a8d0d8"/><circle cx="249.34" cy="352.91" r="0.7" fill="#c88a5a"/><circle cx="228.39" cy="356.61" r="0.7" fill="#a8d0d8"/><circle cx="215.89" cy="363.68" r="0.7" fill="#a8d0d8"/><circle cx="268.93" cy="394.55" r="0.7" fill="#c88a5a"/><circle cx="254.42" cy="358.9" r="0.7" fill="#c88a5a"/><circle cx="234.97" cy="392.39" r="0.7" fill="#a8d0d8"/><circle cx="195.51" cy="352.86" r="0.7" fill="#a8d0d8"/><circle cx="246.43" cy="347.69" r="0.7" fill="#a8d0d8"/><circle cx="211.7" cy="358.86" r="0.7" fill="#c88a5a"/><circle cx="197.24" cy="353.38" r="0.7" fill="#a8d0d8"/><circle cx="225.22" cy="384.57" r="0.7" fill="#c88a5a"/><circle cx="210.25" cy="389.05" r="0.7" fill="#c88a5a"/><circle cx="268.88" cy="353.3" r="0.7" fill="#c88a5a"/><circle cx="247.96" cy="388.04" r="0.7" fill="#a8d0d8"/><circle cx="192.5" cy="375.14" r="0.7" fill="#a8d0d8"/><circle cx="260.39" cy="394.81" r="0.7" fill="#a8d0d8"/><circle cx="241.42" cy="344.63" r="0.7" fill="#c88a5a"/><circle cx="228.67" cy="385.02" r="0.7" fill="#a8d0d8"/><circle cx="269.93" cy="383.43" r="0.7" fill="#a8d0d8"/><circle cx="229.03" cy="384.18" r="0.7" fill="#a8d0d8"/><circle cx="217.1" cy="343.2" r="0.7" fill="#a8d0d8"/><circle cx="236.9" cy="366.32" r="0.7" fill="#c88a5a"/><circle cx="198.78" cy="372.77" r="0.7" fill="#c88a5a"/><circle cx="265.72" cy="389.78" r="0.7" fill="#c88a5a"/><circle cx="267.69" cy="388.7" r="0.7" fill="#c88a5a"/><circle cx="234.51" cy="372.31" r="0.7" fill="#a8d0d8"/><g transform="translate(193.5 350) rotate(-19.11)"><rect x="-1.95" y="-7.8" width="3.9" height="2.6" fill="#4d6b4e"/><circle r="6.5" fill="#6f9a70"/><circle r="3.9" fill="none" stroke="#eef4e4" stroke-opacity="0.9" stroke-width="0.84"/><circle r="1.62" fill="none" stroke="#eef4e4" stroke-opacity="0.9" stroke-width="0.84"/></g><g transform="translate(208 353.5) rotate(-21.38)"><rect x="-1.44" y="-5.76" width="2.88" height="1.92" fill="#97918e"/><circle r="4.8" fill="#d9d0cb"/><circle cx="-2.16" cy="-1.44" r="0.82" fill="#fff" fill-opacity="0.8"/><circle cx="1.44" cy="-2.16" r="0.82" fill="#fff" fill-opacity="0.8"/><circle cx="0.24" cy="0.48" r="0.82" fill="#fff" fill-opacity="0.8"/><circle cx="-1.68" cy="2.4" r="0.82" fill="#fff" fill-opacity="0.8"/><circle cx="2.4" cy="1.44" r="0.82" fill="#fff" fill-opacity="0.8"/><circle cx="2.88" cy="-0.24" r="0.82" fill="#fff" fill-opacity="0.8"/><circle cx="-2.88" cy="0.48" r="0.82" fill="#fff" fill-opacity="0.8"/></g><g transform="translate(222.1 347.5) rotate(8.02)"><rect x="-1.65" y="-6.6" width="3.3" height="2.2" fill="#909e8a"/><circle r="5.5" fill="#cfe3c6"/><circle cx="-2.48" cy="-1.65" r="0.94" fill="#fff" fill-opacity="0.8"/><circle cx="1.65" cy="-2.48" r="0.94" fill="#fff" fill-opacity="0.8"/><circle cx="0.28" cy="0.55" r="0.94" fill="#fff" fill-opacity="0.8"/><circle cx="-1.92" cy="2.75" r="0.94" fill="#fff" fill-opacity="0.8"/><circle cx="2.75" cy="1.65" r="0.94" fill="#fff" fill-opacity="0.8"/><circle cx="3.3" cy="-0.28" r="0.94" fill="#fff" fill-opacity="0.8"/><circle cx="-3.3" cy="0.55" r="0.94" fill="#fff" fill-opacity="0.8"/></g><g transform="translate(241.2 356) rotate(-13.41)"><rect x="-2.4" y="-9.6" width="4.8" height="3.2" fill="#633125"/><circle r="8" fill="#8e4636"/><path d="M-6.8 -2.4q1.2 -1.76 2.4 0t2.4 0t2.4 0t2.4 0t2.4 0M-6.8 2q1.2 -1.76 2.4 0t2.4 0t2.4 0t2.4 0t2.4 0" fill="none" stroke="#fbeee4" stroke-width="1.04"/></g><g transform="translate(255.7 346.5) rotate(22.35)"><rect x="-1.5" y="-6" width="3" height="2" fill="#97918e"/><circle r="5" fill="#d9d0cb"/><circle cx="-2.25" cy="-1.5" r="0.85" fill="#fff" fill-opacity="0.8"/><circle cx="1.5" cy="-2.25" r="0.85" fill="#fff" fill-opacity="0.8"/><circle cx="0.25" cy="0.5" r="0.85" fill="#fff" fill-opacity="0.8"/><circle cx="-1.75" cy="2.5" r="0.85" fill="#fff" fill-opacity="0.8"/><circle cx="2.5" cy="1.5" r="0.85" fill="#fff" fill-opacity="0.8"/><circle cx="3" cy="-0.25" r="0.85" fill="#fff" fill-opacity="0.8"/><circle cx="-3" cy="0.5" r="0.85" fill="#fff" fill-opacity="0.8"/></g><g transform="translate(269.3 350) rotate(-12.18)"><rect x="-1.65" y="-6.6" width="3.3" height="2.2" fill="#4d6b4e"/><circle r="5.5" fill="#6f9a70"/><circle r="3.3" fill="none" stroke="#eef4e4" stroke-opacity="0.9" stroke-width="0.72"/><circle r="1.38" fill="none" stroke="#eef4e4" stroke-opacity="0.9" stroke-width="0.72"/></g><g transform="translate(200 368) rotate(-8.99)"><rect x="-2.55" y="-10.2" width="5.1" height="3.4" fill="#9c6a48"/><circle r="8.5" fill="#b87a45"/><path d="M-7.93 -3.06L7.93 -3.06L8.5 0L7.93 3.06L-7.93 3.06L-8.5 0Z" fill="#f8efe0"/><g fill="#9a6a4a"><circle cx="-5.1" cy="-1.27" r="0.6"/><circle cx="-1.7" cy="-1.27" r="0.6"/><circle cx="1.7" cy="-1.27" r="0.6"/><circle cx="5.1" cy="-1.27" r="0.6"/><circle cx="-3.4" cy="1.45" r="0.6"/><circle cx="0" cy="1.45" r="0.6"/><circle cx="3.4" cy="1.45" r="0.6"/></g></g><g transform="translate(222.1 361) rotate(1.58)"><rect x="-2.1" y="-8.4" width="4.2" height="2.8" fill="#aa8a79"/><circle r="7" fill="#f4c6ae"/></g><g transform="translate(259.7 365) rotate(-10.72)"><rect x="-2.4" y="-9.6" width="4.8" height="3.2" fill="#7f979e"/><circle r="8" fill="#b6d9e3"/><path d="M-7.64 0.18L0.18 -7.64M-6.32 3.83L3.83 -6.32M-3.83 6.32L6.32 -3.83M-0.18 7.64L7.64 -0.18" stroke="#fdf6ee" stroke-opacity="0.85" stroke-width="1.04"/></g><g transform="translate(244.2 371) rotate(-21.59)"><rect x="-1.8" y="-7.2" width="3.6" height="2.4" fill="#aa8c7d"/><circle r="6" fill="#f4c9b4"/></g><g transform="translate(219.6 375.6) rotate(-14.51)"><rect x="-1.2" y="-4.8" width="2.4" height="1.6" fill="#633125"/><circle r="4" fill="#8e4636"/><path d="M-3.4 -1.2q0.6 -0.88 1.2 0t1.2 0t1.2 0t1.2 0t1.2 0M-3.4 1q0.6 -0.88 1.2 0t1.2 0t1.2 0t1.2 0t1.2 0" fill="none" stroke="#fbeee4" stroke-width="0.55"/></g><g transform="translate(211.6 384) rotate(-8.45)"><rect x="-1.35" y="-5.4" width="2.7" height="1.8" fill="#7f979e"/><circle r="4.5" fill="#b6d9e3"/></g><g transform="translate(222.1 390) rotate(19.08)"><rect x="-1.65" y="-6.6" width="3.3" height="2.2" fill="#97918e"/><circle r="5.5" fill="#d9d0cb"/><circle cx="-2.48" cy="-1.65" r="0.94" fill="#fff" fill-opacity="0.8"/><circle cx="1.65" cy="-2.48" r="0.94" fill="#fff" fill-opacity="0.8"/><circle cx="0.28" cy="0.55" r="0.94" fill="#fff" fill-opacity="0.8"/><circle cx="-1.92" cy="2.75" r="0.94" fill="#fff" fill-opacity="0.8"/><circle cx="2.75" cy="1.65" r="0.94" fill="#fff" fill-opacity="0.8"/><circle cx="3.3" cy="-0.28" r="0.94" fill="#fff" fill-opacity="0.8"/><circle cx="-3.3" cy="0.55" r="0.94" fill="#fff" fill-opacity="0.8"/></g><g transform="translate(238.7 386) rotate(-32.06)"><rect x="-1.8" y="-7.2" width="3.6" height="2.4" fill="#909e8a"/><circle r="6" fill="#cfe3c6"/><circle cx="-2.7" cy="-1.8" r="1.02" fill="#fff" fill-opacity="0.8"/><circle cx="1.8" cy="-2.7" r="1.02" fill="#fff" fill-opacity="0.8"/><circle cx="0.3" cy="0.6" r="1.02" fill="#fff" fill-opacity="0.8"/><circle cx="-2.1" cy="3" r="1.02" fill="#fff" fill-opacity="0.8"/><circle cx="3" cy="1.8" r="1.02" fill="#fff" fill-opacity="0.8"/><circle cx="3.6" cy="-0.3" r="1.02" fill="#fff" fill-opacity="0.8"/><circle cx="-3.6" cy="0.6" r="1.02" fill="#fff" fill-opacity="0.8"/></g><g transform="translate(258.2 384) rotate(11.76)"><rect x="-2.85" y="-11.4" width="5.7" height="3.8" fill="#a76d54"/><circle r="9.5" fill="#ef9d78"/><path d="M-9.08 0.21L0.21 -9.08M-7.51 4.55L4.55 -7.51M-4.55 7.51L7.51 -4.55M-0.21 9.08L9.08 -0.21" stroke="#fdf6ee" stroke-opacity="0.85" stroke-width="1.24"/></g><g transform="translate(197 387) rotate(16.28)"><rect x="-1.8" y="-7.2" width="3.6" height="2.4" fill="#a88664"/><circle r="6" fill="#f0c090"/><path d="M-5.73 0.13L0.13 -5.73M-4.74 2.87L2.87 -4.74M-2.87 4.74L4.74 -2.87M-0.13 5.73L5.73 -0.13" stroke="#fdf6ee" stroke-opacity="0.85" stroke-width="0.78"/></g><g transform="translate(206 396) rotate(-20.46)"><rect x="-1.2" y="-4.8" width="2.4" height="1.6" fill="#633125"/><circle r="4" fill="#8e4636"/></g></g><g clip-path="url(#c7)"><rect x="275.1" y="342.6" width="84.6" height="53.2" fill="#fbd4ab"/><g fill="#c48b56"><circle cx="263.6" cy="344.7" r="3"/><circle cx="280" cy="344.7" r="3"/><circle cx="296.4" cy="344.7" r="3"/><circle cx="312.8" cy="344.7" r="3"/><circle cx="329.2" cy="344.7" r="3"/><circle cx="345.6" cy="344.7" r="3"/><circle cx="362" cy="344.7" r="3"/><circle cx="271.8" cy="352.9" r="3"/><circle cx="288.2" cy="352.9" r="3"/><circle cx="304.6" cy="352.9" r="3"/><circle cx="321" cy="352.9" r="3"/><circle cx="337.4" cy="352.9" r="3"/><circle cx="353.8" cy="352.9" r="3"/><circle cx="263.6" cy="361.1" r="3"/><circle cx="280" cy="361.1" r="3"/><circle cx="296.4" cy="361.1" r="3"/><circle cx="312.8" cy="361.1" r="3"/><circle cx="329.2" cy="361.1" r="3"/><circle cx="345.6" cy="361.1" r="3"/><circle cx="362" cy="361.1" r="3"/><circle cx="271.8" cy="369.3" r="3"/><circle cx="288.2" cy="369.3" r="3"/><circle cx="304.6" cy="369.3" r="3"/><circle cx="321" cy="369.3" r="3"/><circle cx="337.4" cy="369.3" r="3"/><circle cx="353.8" cy="369.3" r="3"/><circle cx="263.6" cy="377.5" r="3"/><circle cx="280" cy="377.5" r="3"/><circle cx="296.4" cy="377.5" r="3"/><circle cx="312.8" cy="377.5" r="3"/><circle cx="329.2" cy="377.5" r="3"/><circle cx="345.6" cy="377.5" r="3"/><circle cx="362" cy="377.5" r="3"/><circle cx="271.8" cy="385.7" r="3"/><circle cx="288.2" cy="385.7" r="3"/><circle cx="304.6" cy="385.7" r="3"/><circle cx="321" cy="385.7" r="3"/><circle cx="337.4" cy="385.7" r="3"/><circle cx="353.8" cy="385.7" r="3"/><circle cx="263.6" cy="393.9" r="3"/><circle cx="280" cy="393.9" r="3"/><circle cx="296.4" cy="393.9" r="3"/><circle cx="312.8" cy="393.9" r="3"/><circle cx="329.2" cy="393.9" r="3"/><circle cx="345.6" cy="393.9" r="3"/><circle cx="362" cy="393.9" r="3"/></g></g><g clip-path="url(#c8)"><rect x="363.8" y="342.6" width="84.6" height="53.2" fill="#fdfdfb"/><circle cx="396.03" cy="354.87" r="0.7" fill="#a8d0d8"/><circle cx="440.11" cy="363.12" r="0.7" fill="#c88a5a"/><circle cx="410.59" cy="363" r="0.7" fill="#a8d0d8"/><circle cx="429.89" cy="377.8" r="0.7" fill="#a8d0d8"/><circle cx="400.97" cy="350.85" r="0.7" fill="#a8d0d8"/><circle cx="446.71" cy="359.56" r="0.7" fill="#c88a5a"/><circle cx="419.18" cy="375.63" r="0.7" fill="#a8d0d8"/><circle cx="373.94" cy="373.87" r="0.7" fill="#c88a5a"/><circle cx="437.14" cy="387.34" r="0.7" fill="#a8d0d8"/><circle cx="369.95" cy="361.76" r="0.7" fill="#c88a5a"/><circle cx="374.38" cy="378.24" r="0.7" fill="#a8d0d8"/><circle cx="372.15" cy="350.24" r="0.7" fill="#a8d0d8"/><circle cx="368.33" cy="359.51" r="0.7" fill="#a8d0d8"/><circle cx="415.25" cy="352.29" r="0.7" fill="#a8d0d8"/><circle cx="389.3" cy="350.36" r="0.7" fill="#a8d0d8"/><circle cx="398.25" cy="377.89" r="0.7" fill="#c88a5a"/><circle cx="436.51" cy="354.86" r="0.7" fill="#a8d0d8"/><circle cx="375.22" cy="366.99" r="0.7" fill="#c88a5a"/><circle cx="399.81" cy="382.2" r="0.7" fill="#a8d0d8"/><circle cx="438.28" cy="377.45" r="0.7" fill="#c88a5a"/><circle cx="378.72" cy="385.54" r="0.7" fill="#a8d0d8"/><circle cx="424.73" cy="378.89" r="0.7" fill="#a8d0d8"/><circle cx="447.26" cy="380.11" r="0.7" fill="#c88a5a"/><circle cx="419.25" cy="382.48" r="0.7" fill="#c88a5a"/><circle cx="414.66" cy="347.89" r="0.7" fill="#a8d0d8"/><circle cx="382.46" cy="361.92" r="0.7" fill="#c88a5a"/><circle cx="421.32" cy="364.44" r="0.7" fill="#c88a5a"/><circle cx="370.82" cy="378.17" r="0.7" fill="#a8d0d8"/><circle cx="442.4" cy="355.84" r="0.7" fill="#c88a5a"/><circle cx="439.72" cy="359.93" r="0.7" fill="#c88a5a"/><circle cx="430.44" cy="358.28" r="0.7" fill="#c88a5a"/><circle cx="425.73" cy="354" r="0.7" fill="#a8d0d8"/><circle cx="381.89" cy="354.6" r="0.7" fill="#c88a5a"/><circle cx="420.19" cy="346.02" r="0.7" fill="#a8d0d8"/><circle cx="410.13" cy="375.73" r="0.7" fill="#c88a5a"/><circle cx="391.64" cy="354.75" r="0.7" fill="#a8d0d8"/><circle cx="433.39" cy="366.39" r="0.7" fill="#a8d0d8"/><circle cx="410.55" cy="369.08" r="0.7" fill="#c88a5a"/><circle cx="439.41" cy="386.33" r="0.7" fill="#a8d0d8"/><circle cx="378.91" cy="380.29" r="0.7" fill="#a8d0d8"/><g transform="translate(373 351) rotate(9.68)"><rect x="-2.55" y="-10.2" width="5.1" height="3.4" fill="#a76d54"/><circle r="8.5" fill="#ef9d78"/><path d="M-8.12 0.19L0.19 -8.12M-6.72 4.07L4.07 -6.72M-4.07 6.72L6.72 -4.07M-0.19 8.12L8.12 -0.19" stroke="#fdf6ee" stroke-opacity="0.85" stroke-width="1.1"/></g><g transform="translate(393.1 347) rotate(0.91)"><rect x="-2.4" y="-9.6" width="4.8" height="3.2" fill="#899a80"/><circle r="8" fill="#c4dcb8"/><circle cx="-3.6" cy="-2.4" r="1.36" fill="#fff" fill-opacity="0.8"/><circle cx="2.4" cy="-3.6" r="1.36" fill="#fff" fill-opacity="0.8"/><circle cx="0.4" cy="0.8" r="1.36" fill="#fff" fill-opacity="0.8"/><circle cx="-2.8" cy="4" r="1.36" fill="#fff" fill-opacity="0.8"/><circle cx="4" cy="2.4" r="1.36" fill="#fff" fill-opacity="0.8"/><circle cx="4.8" cy="-0.4" r="1.36" fill="#fff" fill-opacity="0.8"/><circle cx="-4.8" cy="0.8" r="1.36" fill="#fff" fill-opacity="0.8"/></g><g transform="translate(416.2 347) rotate(10.48)"><rect x="-1.35" y="-5.4" width="2.7" height="1.8" fill="#7b7875"/><circle r="4.5" fill="#b0aca8"/></g><g transform="translate(429.2 349) rotate(-22.61)"><rect x="-1.65" y="-6.6" width="3.3" height="2.2" fill="#7f979e"/><circle r="5.5" fill="#b6d9e3"/><path d="M-5.25 0.12L0.12 -5.25M-4.35 2.63L2.63 -4.35M-2.63 4.35L4.35 -2.63M-0.12 5.25L5.25 -0.12" stroke="#fdf6ee" stroke-opacity="0.85" stroke-width="0.72"/></g><g transform="translate(444.3 347) rotate(15.94)"><rect x="-1.35" y="-5.4" width="2.7" height="1.8" fill="#a98047"/><circle r="4.5" fill="#f2b866"/><path d="M-4.3 0.1L0.1 -4.3M-3.56 2.16L2.16 -3.56M-2.16 3.56L3.56 -2.16M-0.1 4.3L4.3 -0.1" stroke="#fdf6ee" stroke-opacity="0.85" stroke-width="0.58"/></g><g transform="translate(386 365) rotate(19.86)"><rect x="-2.25" y="-9" width="4.5" height="3" fill="#aa8c7b"/><circle r="7.5" fill="#f3c8b0"/></g><g transform="translate(401.1 358) rotate(-29.98)"><rect x="-1.5" y="-6" width="3" height="2" fill="#aa946b"/><circle r="5" fill="#f4d49a"/><path d="M-4.78 0.11L0.11 -4.78M-3.95 2.39L2.39 -3.95M-2.39 3.95L3.95 -2.39M-0.11 4.78L4.78 -0.11" stroke="#fdf6ee" stroke-opacity="0.85" stroke-width="0.65"/></g><g transform="translate(418.7 358.6) rotate(0.69)"><rect x="-1.5" y="-6" width="3" height="2" fill="#633125"/><circle r="5" fill="#8e4636"/><path d="M-4.25 -1.5q0.75 -1.1 1.5 0t1.5 0t1.5 0t1.5 0t1.5 0M-4.25 1.25q0.75 -1.1 1.5 0t1.5 0t1.5 0t1.5 0t1.5 0" fill="none" stroke="#fbeee4" stroke-width="0.65"/></g><g transform="translate(442.2 370) rotate(6.67)"><rect x="-3" y="-12" width="6" height="4" fill="#9c6a48"/><circle r="10" fill="#b87a45"/><path d="M-9.33 -3.6L9.33 -3.6L10 0L9.33 3.6L-9.33 3.6L-10 0Z" fill="#f8efe0"/><g fill="#9a6a4a"><circle cx="-6" cy="-1.5" r="0.7"/><circle cx="-2" cy="-1.5" r="0.7"/><circle cx="2" cy="-1.5" r="0.7"/><circle cx="6" cy="-1.5" r="0.7"/><circle cx="-4" cy="1.7" r="0.7"/><circle cx="0" cy="1.7" r="0.7"/><circle cx="4" cy="1.7" r="0.7"/></g></g><g transform="translate(369 374) rotate(-10.36)"><rect x="-2.4" y="-9.6" width="4.8" height="3.2" fill="#7f979e"/><circle r="8" fill="#b6d9e3"/><path d="M-7.64 0.18L0.18 -7.64M-6.32 3.83L3.83 -6.32M-3.83 6.32L6.32 -3.83M-0.18 7.64L7.64 -0.18" stroke="#fdf6ee" stroke-opacity="0.85" stroke-width="1.04"/></g><g transform="translate(390.1 385) rotate(12.72)"><rect x="-3.3" y="-13.2" width="6.6" height="4.4" fill="#633125"/><circle r="11" fill="#8e4636"/><path d="M-9.35 -3.3q1.65 -2.42 3.3 0t3.3 0t3.3 0t3.3 0t3.3 0M-9.35 2.75q1.65 -2.42 3.3 0t3.3 0t3.3 0t3.3 0t3.3 0" fill="none" stroke="#fbeee4" stroke-width="1.43"/></g><g transform="translate(414.7 380) rotate(29.54)"><rect x="-2.85" y="-11.4" width="5.7" height="3.8" fill="#aa8c7b"/><circle r="9.5" fill="#f3c8b0"/></g><g transform="translate(434.2 388) rotate(28.43)"><rect x="-2.1" y="-8.4" width="4.2" height="2.8" fill="#8c8785"/><circle r="7" fill="#c8c2be"/><circle cx="-3.15" cy="-2.1" r="1.19" fill="#fff" fill-opacity="0.8"/><circle cx="2.1" cy="-3.15" r="1.19" fill="#fff" fill-opacity="0.8"/><circle cx="0.35" cy="0.7" r="1.19" fill="#fff" fill-opacity="0.8"/><circle cx="-2.45" cy="3.5" r="1.19" fill="#fff" fill-opacity="0.8"/><circle cx="3.5" cy="2.1" r="1.19" fill="#fff" fill-opacity="0.8"/><circle cx="4.2" cy="-0.35" r="1.19" fill="#fff" fill-opacity="0.8"/><circle cx="-4.2" cy="0.7" r="1.19" fill="#fff" fill-opacity="0.8"/></g></g><rect x="98.9" y="399.5" width="84.6" height="53.9" rx="10" fill="#fde8ca"/><rect x="187.6" y="399.5" width="84.6" height="53.9" rx="10" fill="#d6ecee"/><rect x="275.1" y="399.5" width="84.6" height="53.9" fill="#135258"/><rect x="363.8" y="399.5" width="84.6" height="53.9" fill="#6b8a69"/><rect x="100.9" y="459" width="80.6" height="49.7" rx="8" fill="#fff" stroke="#a9c69b" stroke-width="4"/><g fill="#4a6a48"><rect x="118" y="456.9" width="4.8" height="4" rx="1.8"/><rect x="118" y="506.8" width="4.8" height="4" rx="1.8"/><rect x="134.2" y="456.9" width="4.8" height="4" rx="1.8"/><rect x="134.2" y="506.8" width="4.8" height="4" rx="1.8"/><rect x="150.4" y="456.9" width="4.8" height="4" rx="1.8"/><rect x="150.4" y="506.8" width="4.8" height="4" rx="1.8"/><rect x="167" y="456.9" width="4.8" height="4" rx="1.8"/><rect x="167" y="506.8" width="4.8" height="4" rx="1.8"/><rect x="98.8" y="473.6" width="4" height="4.8" rx="1.8"/><rect x="179.6" y="473.6" width="4" height="4.8" rx="1.8"/><rect x="98.8" y="490.1" width="4" height="4.8" rx="1.8"/><rect x="179.6" y="490.1" width="4" height="4.8" rx="1.8"/></g><rect x="189.5" y="458.9" width="80.8" height="49.9" rx="8.1" fill="#fff" stroke="#b97b46" stroke-width="3.8"/><g mask="url(#m5)"><g clip-path="url(#c10)"><rect x="275.1" y="457" width="84.6" height="53.7" fill="#5d7052"/><g transform="translate(269.7 489.9) rotate(8.6)"><rect x="-1.2" y="-4.8" width="2.4" height="1.6" fill="#849ea7"/><circle r="4" fill="#b8dce8"/></g><g transform="translate(278.9 451.7) rotate(16.93)"><rect x="-1.2" y="-4.8" width="2.4" height="1.6" fill="#9c6a48"/><circle r="4" fill="#f2e2cc"/><path d="M-3.73 -1.44L3.73 -1.44L4 0L3.73 1.44L-3.73 1.44L-4 0Z" fill="#f8efe0"/><g fill="#9a6a4a"><circle cx="-2.4" cy="-0.6" r="0.28"/><circle cx="-0.8" cy="-0.6" r="0.28"/><circle cx="0.8" cy="-0.6" r="0.28"/><circle cx="2.4" cy="-0.6" r="0.28"/><circle cx="-1.6" cy="0.68" r="0.28"/><circle cx="0" cy="0.68" r="0.28"/><circle cx="1.6" cy="0.68" r="0.28"/></g></g><g transform="translate(278 460.1) rotate(20.66)"><rect x="-1.08" y="-4.32" width="2.16" height="1.44" fill="#af9067"/><circle r="3.6" fill="#f4c890"/></g><g transform="translate(285.6 458.3) rotate(30.97)"><rect x="-0.81" y="-3.24" width="1.62" height="1.08" fill="#849ea7"/><circle r="2.7" fill="#b8dce8"/></g><g transform="translate(289.1 453.9) rotate(16.79)"><rect x="-0.66" y="-2.64" width="1.32" height="0.88" fill="#633529"/><circle r="2.2" fill="#8a4a3a"/></g><g transform="translate(290.9 464.6) rotate(29.56)"><rect x="-1.2" y="-4.8" width="2.4" height="1.6" fill="#a49e9b"/><circle r="4" fill="#e4dcd8"/><circle cx="-1.8" cy="-1.2" r="0.68" fill="#fff" fill-opacity="0.8"/><circle cx="1.2" cy="-1.8" r="0.68" fill="#fff" fill-opacity="0.8"/><circle cx="0.2" cy="0.4" r="0.68" fill="#fff" fill-opacity="0.8"/><circle cx="-1.4" cy="2" r="0.68" fill="#fff" fill-opacity="0.8"/><circle cx="2" cy="1.2" r="0.68" fill="#fff" fill-opacity="0.8"/><circle cx="2.4" cy="-0.2" r="0.68" fill="#fff" fill-opacity="0.8"/><circle cx="-2.4" cy="0.4" r="0.68" fill="#fff" fill-opacity="0.8"/></g><g transform="translate(296.7 454.3) rotate(-32.97)"><rect x="-0.66" y="-2.64" width="1.32" height="0.88" fill="#ab8677"/><circle r="2.2" fill="#eebba6"/></g><g transform="translate(299.8 459.7) rotate(-2.41)"><rect x="-1.08" y="-4.32" width="2.16" height="1.44" fill="#84987e"/><circle r="3.6" fill="#b8d4b0"/><circle r="2.16" fill="none" stroke="#eef4e4" stroke-opacity="0.9" stroke-width="0.55"/><circle r="0.9" fill="none" stroke="#eef4e4" stroke-opacity="0.9" stroke-width="0.55"/></g><g transform="translate(302.5 452.1) rotate(31.03)"><rect x="-0.93" y="-3.72" width="1.86" height="1.24" fill="#ab8677"/><circle r="3.1" fill="#eebba6"/></g><g transform="translate(310 458.8) rotate(10.43)"><rect x="-1.59" y="-6.36" width="3.18" height="2.12" fill="#ab8677"/><circle r="5.3" fill="#eebba6"/></g><g transform="translate(282.4 465) rotate(28.06)"><rect x="-0.81" y="-3.24" width="1.62" height="1.08" fill="#73392e"/><circle r="2.7" fill="#a05040"/><path d="M-2.58 0.06L0.06 -2.58M-2.13 1.29L1.29 -2.13M-1.29 2.13L2.13 -1.29M-0.06 2.58L2.58 -0.06" stroke="#fdf6ee" stroke-opacity="0.85" stroke-width="0.55"/></g><g transform="translate(275.8 469) rotate(-27.08)"><rect x="-1.2" y="-4.8" width="2.4" height="1.6" fill="#ac8a7e"/><circle r="4" fill="#f0c0b0"/></g><g transform="translate(299.8 469) rotate(-2.17)"><rect x="-1.2" y="-4.8" width="2.4" height="1.6" fill="#9c6a48"/><circle r="4" fill="#f0d8c0"/><path d="M-3.73 -1.44L3.73 -1.44L4 0L3.73 1.44L-3.73 1.44L-4 0Z" fill="#f8efe0"/><g fill="#9a6a4a"><circle cx="-2.4" cy="-0.6" r="0.28"/><circle cx="-0.8" cy="-0.6" r="0.28"/><circle cx="0.8" cy="-0.6" r="0.28"/><circle cx="2.4" cy="-0.6" r="0.28"/><circle cx="-1.6" cy="0.68" r="0.28"/><circle cx="0" cy="0.68" r="0.28"/><circle cx="1.6" cy="0.68" r="0.28"/></g></g><g transform="translate(308.2 471.7) rotate(-17.74)"><rect x="-1.08" y="-4.32" width="2.16" height="1.44" fill="#84987e"/><circle r="3.6" fill="#b8d4b0"/><circle r="2.16" fill="none" stroke="#eef4e4" stroke-opacity="0.9" stroke-width="0.55"/><circle r="0.9" fill="none" stroke="#eef4e4" stroke-opacity="0.9" stroke-width="0.55"/></g><g transform="translate(284.7 475.7) rotate(3.06)"><rect x="-1.47" y="-5.88" width="2.94" height="1.96" fill="#ac8170"/><circle r="4.9" fill="#f0b49c"/></g><g transform="translate(293.6 474.8) rotate(5.18)"><rect x="-1.08" y="-4.32" width="2.16" height="1.44" fill="#849ea7"/><circle r="3.6" fill="#b8dce8"/></g><g transform="translate(300.7 477.9) rotate(-34.08)"><rect x="-0.93" y="-3.72" width="1.86" height="1.24" fill="#af9067"/><circle r="3.1" fill="#f4c890"/></g><g transform="translate(274.4 481.5) rotate(-19.83)"><rect x="-1.2" y="-4.8" width="2.4" height="1.6" fill="#84987e"/><circle r="4" fill="#b8d4b0"/><circle r="2.4" fill="none" stroke="#eef4e4" stroke-opacity="0.9" stroke-width="0.55"/><circle r="1" fill="none" stroke="#eef4e4" stroke-opacity="0.9" stroke-width="0.55"/></g><g transform="translate(283.3 483.7) rotate(-15.44)"><rect x="-0.81" y="-3.24" width="1.62" height="1.08" fill="#a9a4a1"/><circle r="2.7" fill="#ece4e0"/><circle cx="-1.22" cy="-0.81" r="0.46" fill="#fff" fill-opacity="0.8"/><circle cx="0.81" cy="-1.22" r="0.46" fill="#fff" fill-opacity="0.8"/><circle cx="0.14" cy="0.27" r="0.46" fill="#fff" fill-opacity="0.8"/><circle cx="-0.94" cy="1.35" r="0.46" fill="#fff" fill-opacity="0.8"/><circle cx="1.35" cy="0.81" r="0.46" fill="#fff" fill-opacity="0.8"/><circle cx="1.62" cy="-0.14" r="0.46" fill="#fff" fill-opacity="0.8"/><circle cx="-1.62" cy="0.27" r="0.46" fill="#fff" fill-opacity="0.8"/></g><g transform="translate(291.3 480.6) rotate(29.14)"><rect x="-0.93" y="-3.72" width="1.86" height="1.24" fill="#84987e"/><circle r="3.1" fill="#b8d4b0"/></g><g transform="translate(308.7 479.7) rotate(18.6)"><rect x="-0.93" y="-3.72" width="1.86" height="1.24" fill="#a49e9b"/><circle r="3.1" fill="#e4dcd8"/><circle cx="-1.4" cy="-0.93" r="0.53" fill="#fff" fill-opacity="0.8"/><circle cx="0.93" cy="-1.4" r="0.53" fill="#fff" fill-opacity="0.8"/><circle cx="0.16" cy="0.31" r="0.53" fill="#fff" fill-opacity="0.8"/><circle cx="-1.08" cy="1.55" r="0.53" fill="#fff" fill-opacity="0.8"/><circle cx="1.55" cy="0.93" r="0.53" fill="#fff" fill-opacity="0.8"/><circle cx="1.86" cy="-0.16" r="0.53" fill="#fff" fill-opacity="0.8"/><circle cx="-1.86" cy="0.31" r="0.53" fill="#fff" fill-opacity="0.8"/></g><g transform="translate(301.1 485) rotate(-23.83)"><rect x="-1.2" y="-4.8" width="2.4" height="1.6" fill="#73392e"/><circle r="4" fill="#a05040"/><path d="M-3.82 0.09L0.09 -3.82M-3.16 1.92L1.92 -3.16M-1.92 3.16L3.16 -1.92M-0.09 3.82L3.82 -0.09" stroke="#fdf6ee" stroke-opacity="0.85" stroke-width="0.55"/></g><g transform="translate(291.8 487.7) rotate(20.8)"><rect x="-1.08" y="-4.32" width="2.16" height="1.44" fill="#ab8677"/><circle r="3.6" fill="#eebba6"/></g><g transform="translate(310.9 489.9) rotate(-25.29)"><rect x="-1.2" y="-4.8" width="2.4" height="1.6" fill="#849ea7"/><circle r="4" fill="#b8dce8"/></g><g transform="translate(278.9 492.9) rotate(8.22)"><rect x="-1.2" y="-4.8" width="2.4" height="1.6" fill="#9c6a48"/><circle r="4" fill="#f2e2cc"/><path d="M-3.73 -1.44L3.73 -1.44L4 0L3.73 1.44L-3.73 1.44L-4 0Z" fill="#f8efe0"/><g fill="#9a6a4a"><circle cx="-2.4" cy="-0.6" r="0.28"/><circle cx="-0.8" cy="-0.6" r="0.28"/><circle cx="0.8" cy="-0.6" r="0.28"/><circle cx="2.4" cy="-0.6" r="0.28"/><circle cx="-1.6" cy="0.68" r="0.28"/><circle cx="0" cy="0.68" r="0.28"/><circle cx="1.6" cy="0.68" r="0.28"/></g></g><g transform="translate(278 501.3) rotate(-26.13)"><rect x="-1.08" y="-4.32" width="2.16" height="1.44" fill="#af9067"/><circle r="3.6" fill="#f4c890"/></g><g transform="translate(285.6 499.5) rotate(-34.88)"><rect x="-0.81" y="-3.24" width="1.62" height="1.08" fill="#849ea7"/><circle r="2.7" fill="#b8dce8"/></g><g transform="translate(289.1 495.1) rotate(26)"><rect x="-0.66" y="-2.64" width="1.32" height="0.88" fill="#633529"/><circle r="2.2" fill="#8a4a3a"/></g><g transform="translate(290.9 505.8) rotate(-20.34)"><rect x="-1.2" y="-4.8" width="2.4" height="1.6" fill="#a49e9b"/><circle r="4" fill="#e4dcd8"/><circle cx="-1.8" cy="-1.2" r="0.68" fill="#fff" fill-opacity="0.8"/><circle cx="1.2" cy="-1.8" r="0.68" fill="#fff" fill-opacity="0.8"/><circle cx="0.2" cy="0.4" r="0.68" fill="#fff" fill-opacity="0.8"/><circle cx="-1.4" cy="2" r="0.68" fill="#fff" fill-opacity="0.8"/><circle cx="2" cy="1.2" r="0.68" fill="#fff" fill-opacity="0.8"/><circle cx="2.4" cy="-0.2" r="0.68" fill="#fff" fill-opacity="0.8"/><circle cx="-2.4" cy="0.4" r="0.68" fill="#fff" fill-opacity="0.8"/></g><g transform="translate(296.7 495.5) rotate(-19.92)"><rect x="-0.66" y="-2.64" width="1.32" height="0.88" fill="#ab8677"/><circle r="2.2" fill="#eebba6"/></g><g transform="translate(299.8 500.9) rotate(33.77)"><rect x="-1.08" y="-4.32" width="2.16" height="1.44" fill="#84987e"/><circle r="3.6" fill="#b8d4b0"/><circle r="2.16" fill="none" stroke="#eef4e4" stroke-opacity="0.9" stroke-width="0.55"/><circle r="0.9" fill="none" stroke="#eef4e4" stroke-opacity="0.9" stroke-width="0.55"/></g><g transform="translate(302.5 493.3) rotate(26.07)"><rect x="-0.93" y="-3.72" width="1.86" height="1.24" fill="#ab8677"/><circle r="3.1" fill="#eebba6"/></g><g transform="translate(310 500) rotate(-14.75)"><rect x="-1.59" y="-6.36" width="3.18" height="2.12" fill="#ab8677"/><circle r="5.3" fill="#eebba6"/></g><g transform="translate(282.4 506.2) rotate(32.3)"><rect x="-0.81" y="-3.24" width="1.62" height="1.08" fill="#73392e"/><circle r="2.7" fill="#a05040"/><path d="M-2.58 0.06L0.06 -2.58M-2.13 1.29L1.29 -2.13M-1.29 2.13L2.13 -1.29M-0.06 2.58L2.58 -0.06" stroke="#fdf6ee" stroke-opacity="0.85" stroke-width="0.55"/></g><g transform="translate(275.8 510.2) rotate(2.75)"><rect x="-1.2" y="-4.8" width="2.4" height="1.6" fill="#ac8a7e"/><circle r="4" fill="#f0c0b0"/></g><g transform="translate(299.8 510.2) rotate(12.45)"><rect x="-1.2" y="-4.8" width="2.4" height="1.6" fill="#9c6a48"/><circle r="4" fill="#f0d8c0"/><path d="M-3.73 -1.44L3.73 -1.44L4 0L3.73 1.44L-3.73 1.44L-4 0Z" fill="#f8efe0"/><g fill="#9a6a4a"><circle cx="-2.4" cy="-0.6" r="0.28"/><circle cx="-0.8" cy="-0.6" r="0.28"/><circle cx="0.8" cy="-0.6" r="0.28"/><circle cx="2.4" cy="-0.6" r="0.28"/><circle cx="-1.6" cy="0.68" r="0.28"/><circle cx="0" cy="0.68" r="0.28"/><circle cx="1.6" cy="0.68" r="0.28"/></g></g><g transform="translate(308.2 512.9) rotate(-20.67)"><rect x="-1.08" y="-4.32" width="2.16" height="1.44" fill="#84987e"/><circle r="3.6" fill="#b8d4b0"/><circle r="2.16" fill="none" stroke="#eef4e4" stroke-opacity="0.9" stroke-width="0.55"/><circle r="0.9" fill="none" stroke="#eef4e4" stroke-opacity="0.9" stroke-width="0.55"/></g><g transform="translate(293.6 516) rotate(30.87)"><rect x="-1.08" y="-4.32" width="2.16" height="1.44" fill="#849ea7"/><circle r="3.6" fill="#b8dce8"/></g><g transform="translate(320.1 451.7) rotate(13.34)"><rect x="-1.2" y="-4.8" width="2.4" height="1.6" fill="#9c6a48"/><circle r="4" fill="#f2e2cc"/><path d="M-3.73 -1.44L3.73 -1.44L4 0L3.73 1.44L-3.73 1.44L-4 0Z" fill="#f8efe0"/><g fill="#9a6a4a"><circle cx="-2.4" cy="-0.6" r="0.28"/><circle cx="-0.8" cy="-0.6" r="0.28"/><circle cx="0.8" cy="-0.6" r="0.28"/><circle cx="2.4" cy="-0.6" r="0.28"/><circle cx="-1.6" cy="0.68" r="0.28"/><circle cx="0" cy="0.68" r="0.28"/><circle cx="1.6" cy="0.68" r="0.28"/></g></g><g transform="translate(319.2 460.1) rotate(32.66)"><rect x="-1.08" y="-4.32" width="2.16" height="1.44" fill="#af9067"/><circle r="3.6" fill="#f4c890"/></g><g transform="translate(326.8 458.3) rotate(27.56)"><rect x="-0.81" y="-3.24" width="1.62" height="1.08" fill="#849ea7"/><circle r="2.7" fill="#b8dce8"/></g><g transform="translate(330.3 453.9) rotate(-14.08)"><rect x="-0.66" y="-2.64" width="1.32" height="0.88" fill="#633529"/><circle r="2.2" fill="#8a4a3a"/></g><g transform="translate(332.1 464.6) rotate(-9.72)"><rect x="-1.2" y="-4.8" width="2.4" height="1.6" fill="#a49e9b"/><circle r="4" fill="#e4dcd8"/><circle cx="-1.8" cy="-1.2" r="0.68" fill="#fff" fill-opacity="0.8"/><circle cx="1.2" cy="-1.8" r="0.68" fill="#fff" fill-opacity="0.8"/><circle cx="0.2" cy="0.4" r="0.68" fill="#fff" fill-opacity="0.8"/><circle cx="-1.4" cy="2" r="0.68" fill="#fff" fill-opacity="0.8"/><circle cx="2" cy="1.2" r="0.68" fill="#fff" fill-opacity="0.8"/><circle cx="2.4" cy="-0.2" r="0.68" fill="#fff" fill-opacity="0.8"/><circle cx="-2.4" cy="0.4" r="0.68" fill="#fff" fill-opacity="0.8"/></g><g transform="translate(337.9 454.3) rotate(-23.38)"><rect x="-0.66" y="-2.64" width="1.32" height="0.88" fill="#ab8677"/><circle r="2.2" fill="#eebba6"/></g><g transform="translate(341 459.7) rotate(-24.8)"><rect x="-1.08" y="-4.32" width="2.16" height="1.44" fill="#84987e"/><circle r="3.6" fill="#b8d4b0"/><circle r="2.16" fill="none" stroke="#eef4e4" stroke-opacity="0.9" stroke-width="0.55"/><circle r="0.9" fill="none" stroke="#eef4e4" stroke-opacity="0.9" stroke-width="0.55"/></g><g transform="translate(343.7 452.1) rotate(-30.44)"><rect x="-0.93" y="-3.72" width="1.86" height="1.24" fill="#ab8677"/><circle r="3.1" fill="#eebba6"/></g><g transform="translate(351.2 458.8) rotate(-13.9)"><rect x="-1.59" y="-6.36" width="3.18" height="2.12" fill="#ab8677"/><circle r="5.3" fill="#eebba6"/></g><g transform="translate(323.6 465) rotate(7.22)"><rect x="-0.81" y="-3.24" width="1.62" height="1.08" fill="#73392e"/><circle r="2.7" fill="#a05040"/><path d="M-2.58 0.06L0.06 -2.58M-2.13 1.29L1.29 -2.13M-1.29 2.13L2.13 -1.29M-0.06 2.58L2.58 -0.06" stroke="#fdf6ee" stroke-opacity="0.85" stroke-width="0.55"/></g><g transform="translate(317 469) rotate(-34.76)"><rect x="-1.2" y="-4.8" width="2.4" height="1.6" fill="#ac8a7e"/><circle r="4" fill="#f0c0b0"/></g><g transform="translate(341 469) rotate(12.46)"><rect x="-1.2" y="-4.8" width="2.4" height="1.6" fill="#9c6a48"/><circle r="4" fill="#f0d8c0"/><path d="M-3.73 -1.44L3.73 -1.44L4 0L3.73 1.44L-3.73 1.44L-4 0Z" fill="#f8efe0"/><g fill="#9a6a4a"><circle cx="-2.4" cy="-0.6" r="0.28"/><circle cx="-0.8" cy="-0.6" r="0.28"/><circle cx="0.8" cy="-0.6" r="0.28"/><circle cx="2.4" cy="-0.6" r="0.28"/><circle cx="-1.6" cy="0.68" r="0.28"/><circle cx="0" cy="0.68" r="0.28"/><circle cx="1.6" cy="0.68" r="0.28"/></g></g><g transform="translate(349.4 471.7) rotate(-11.35)"><rect x="-1.08" y="-4.32" width="2.16" height="1.44" fill="#84987e"/><circle r="3.6" fill="#b8d4b0"/><circle r="2.16" fill="none" stroke="#eef4e4" stroke-opacity="0.9" stroke-width="0.55"/><circle r="0.9" fill="none" stroke="#eef4e4" stroke-opacity="0.9" stroke-width="0.55"/></g><g transform="translate(325.9 475.7) rotate(-13.3)"><rect x="-1.47" y="-5.88" width="2.94" height="1.96" fill="#ac8170"/><circle r="4.9" fill="#f0b49c"/></g><g transform="translate(334.8 474.8) rotate(22.3)"><rect x="-1.08" y="-4.32" width="2.16" height="1.44" fill="#849ea7"/><circle r="3.6" fill="#b8dce8"/></g><g transform="translate(341.9 477.9) rotate(-1.35)"><rect x="-0.93" y="-3.72" width="1.86" height="1.24" fill="#af9067"/><circle r="3.1" fill="#f4c890"/></g><g transform="translate(315.6 481.5) rotate(-12.89)"><rect x="-1.2" y="-4.8" width="2.4" height="1.6" fill="#84987e"/><circle r="4" fill="#b8d4b0"/><circle r="2.4" fill="none" stroke="#eef4e4" stroke-opacity="0.9" stroke-width="0.55"/><circle r="1" fill="none" stroke="#eef4e4" stroke-opacity="0.9" stroke-width="0.55"/></g><g transform="translate(324.5 483.7) rotate(-1.31)"><rect x="-0.81" y="-3.24" width="1.62" height="1.08" fill="#a9a4a1"/><circle r="2.7" fill="#ece4e0"/><circle cx="-1.22" cy="-0.81" r="0.46" fill="#fff" fill-opacity="0.8"/><circle cx="0.81" cy="-1.22" r="0.46" fill="#fff" fill-opacity="0.8"/><circle cx="0.14" cy="0.27" r="0.46" fill="#fff" fill-opacity="0.8"/><circle cx="-0.94" cy="1.35" r="0.46" fill="#fff" fill-opacity="0.8"/><circle cx="1.35" cy="0.81" r="0.46" fill="#fff" fill-opacity="0.8"/><circle cx="1.62" cy="-0.14" r="0.46" fill="#fff" fill-opacity="0.8"/><circle cx="-1.62" cy="0.27" r="0.46" fill="#fff" fill-opacity="0.8"/></g><g transform="translate(332.5 480.6) rotate(14.33)"><rect x="-0.93" y="-3.72" width="1.86" height="1.24" fill="#84987e"/><circle r="3.1" fill="#b8d4b0"/></g><g transform="translate(349.9 479.7) rotate(-31.01)"><rect x="-0.93" y="-3.72" width="1.86" height="1.24" fill="#a49e9b"/><circle r="3.1" fill="#e4dcd8"/><circle cx="-1.4" cy="-0.93" r="0.53" fill="#fff" fill-opacity="0.8"/><circle cx="0.93" cy="-1.4" r="0.53" fill="#fff" fill-opacity="0.8"/><circle cx="0.16" cy="0.31" r="0.53" fill="#fff" fill-opacity="0.8"/><circle cx="-1.08" cy="1.55" r="0.53" fill="#fff" fill-opacity="0.8"/><circle cx="1.55" cy="0.93" r="0.53" fill="#fff" fill-opacity="0.8"/><circle cx="1.86" cy="-0.16" r="0.53" fill="#fff" fill-opacity="0.8"/><circle cx="-1.86" cy="0.31" r="0.53" fill="#fff" fill-opacity="0.8"/></g><g transform="translate(342.3 485) rotate(33.26)"><rect x="-1.2" y="-4.8" width="2.4" height="1.6" fill="#73392e"/><circle r="4" fill="#a05040"/><path d="M-3.82 0.09L0.09 -3.82M-3.16 1.92L1.92 -3.16M-1.92 3.16L3.16 -1.92M-0.09 3.82L3.82 -0.09" stroke="#fdf6ee" stroke-opacity="0.85" stroke-width="0.55"/></g><g transform="translate(333 487.7) rotate(-33.4)"><rect x="-1.08" y="-4.32" width="2.16" height="1.44" fill="#ab8677"/><circle r="3.6" fill="#eebba6"/></g><g transform="translate(352.1 489.9) rotate(17.49)"><rect x="-1.2" y="-4.8" width="2.4" height="1.6" fill="#849ea7"/><circle r="4" fill="#b8dce8"/></g><g transform="translate(320.1 492.9) rotate(24.14)"><rect x="-1.2" y="-4.8" width="2.4" height="1.6" fill="#9c6a48"/><circle r="4" fill="#f2e2cc"/><path d="M-3.73 -1.44L3.73 -1.44L4 0L3.73 1.44L-3.73 1.44L-4 0Z" fill="#f8efe0"/><g fill="#9a6a4a"><circle cx="-2.4" cy="-0.6" r="0.28"/><circle cx="-0.8" cy="-0.6" r="0.28"/><circle cx="0.8" cy="-0.6" r="0.28"/><circle cx="2.4" cy="-0.6" r="0.28"/><circle cx="-1.6" cy="0.68" r="0.28"/><circle cx="0" cy="0.68" r="0.28"/><circle cx="1.6" cy="0.68" r="0.28"/></g></g><g transform="translate(319.2 501.3) rotate(-33.74)"><rect x="-1.08" y="-4.32" width="2.16" height="1.44" fill="#af9067"/><circle r="3.6" fill="#f4c890"/></g><g transform="translate(326.8 499.5) rotate(20.14)"><rect x="-0.81" y="-3.24" width="1.62" height="1.08" fill="#849ea7"/><circle r="2.7" fill="#b8dce8"/></g><g transform="translate(330.3 495.1) rotate(-9.37)"><rect x="-0.66" y="-2.64" width="1.32" height="0.88" fill="#633529"/><circle r="2.2" fill="#8a4a3a"/></g><g transform="translate(332.1 505.8) rotate(5.5)"><rect x="-1.2" y="-4.8" width="2.4" height="1.6" fill="#a49e9b"/><circle r="4" fill="#e4dcd8"/><circle cx="-1.8" cy="-1.2" r="0.68" fill="#fff" fill-opacity="0.8"/><circle cx="1.2" cy="-1.8" r="0.68" fill="#fff" fill-opacity="0.8"/><circle cx="0.2" cy="0.4" r="0.68" fill="#fff" fill-opacity="0.8"/><circle cx="-1.4" cy="2" r="0.68" fill="#fff" fill-opacity="0.8"/><circle cx="2" cy="1.2" r="0.68" fill="#fff" fill-opacity="0.8"/><circle cx="2.4" cy="-0.2" r="0.68" fill="#fff" fill-opacity="0.8"/><circle cx="-2.4" cy="0.4" r="0.68" fill="#fff" fill-opacity="0.8"/></g><g transform="translate(337.9 495.5) rotate(-34.36)"><rect x="-0.66" y="-2.64" width="1.32" height="0.88" fill="#ab8677"/><circle r="2.2" fill="#eebba6"/></g><g transform="translate(341 500.9) rotate(-31.73)"><rect x="-1.08" y="-4.32" width="2.16" height="1.44" fill="#84987e"/><circle r="3.6" fill="#b8d4b0"/><circle r="2.16" fill="none" stroke="#eef4e4" stroke-opacity="0.9" stroke-width="0.55"/><circle r="0.9" fill="none" stroke="#eef4e4" stroke-opacity="0.9" stroke-width="0.55"/></g><g transform="translate(343.7 493.3) rotate(-22.34)"><rect x="-0.93" y="-3.72" width="1.86" height="1.24" fill="#ab8677"/><circle r="3.1" fill="#eebba6"/></g><g transform="translate(351.2 500) rotate(31.86)"><rect x="-1.59" y="-6.36" width="3.18" height="2.12" fill="#ab8677"/><circle r="5.3" fill="#eebba6"/></g><g transform="translate(323.6 506.2) rotate(-21.24)"><rect x="-0.81" y="-3.24" width="1.62" height="1.08" fill="#73392e"/><circle r="2.7" fill="#a05040"/><path d="M-2.58 0.06L0.06 -2.58M-2.13 1.29L1.29 -2.13M-1.29 2.13L2.13 -1.29M-0.06 2.58L2.58 -0.06" stroke="#fdf6ee" stroke-opacity="0.85" stroke-width="0.55"/></g><g transform="translate(317 510.2) rotate(17.9)"><rect x="-1.2" y="-4.8" width="2.4" height="1.6" fill="#ac8a7e"/><circle r="4" fill="#f0c0b0"/></g><g transform="translate(341 510.2) rotate(30.08)"><rect x="-1.2" y="-4.8" width="2.4" height="1.6" fill="#9c6a48"/><circle r="4" fill="#f0d8c0"/><path d="M-3.73 -1.44L3.73 -1.44L4 0L3.73 1.44L-3.73 1.44L-4 0Z" fill="#f8efe0"/><g fill="#9a6a4a"><circle cx="-2.4" cy="-0.6" r="0.28"/><circle cx="-0.8" cy="-0.6" r="0.28"/><circle cx="0.8" cy="-0.6" r="0.28"/><circle cx="2.4" cy="-0.6" r="0.28"/><circle cx="-1.6" cy="0.68" r="0.28"/><circle cx="0" cy="0.68" r="0.28"/><circle cx="1.6" cy="0.68" r="0.28"/></g></g><g transform="translate(349.4 512.9) rotate(30.94)"><rect x="-1.08" y="-4.32" width="2.16" height="1.44" fill="#84987e"/><circle r="3.6" fill="#b8d4b0"/><circle r="2.16" fill="none" stroke="#eef4e4" stroke-opacity="0.9" stroke-width="0.55"/><circle r="0.9" fill="none" stroke="#eef4e4" stroke-opacity="0.9" stroke-width="0.55"/></g><g transform="translate(334.8 516) rotate(-10.89)"><rect x="-1.08" y="-4.32" width="2.16" height="1.44" fill="#849ea7"/><circle r="3.6" fill="#b8dce8"/></g><g transform="translate(361.3 451.7) rotate(-10.16)"><rect x="-1.2" y="-4.8" width="2.4" height="1.6" fill="#9c6a48"/><circle r="4" fill="#f2e2cc"/><path d="M-3.73 -1.44L3.73 -1.44L4 0L3.73 1.44L-3.73 1.44L-4 0Z" fill="#f8efe0"/><g fill="#9a6a4a"><circle cx="-2.4" cy="-0.6" r="0.28"/><circle cx="-0.8" cy="-0.6" r="0.28"/><circle cx="0.8" cy="-0.6" r="0.28"/><circle cx="2.4" cy="-0.6" r="0.28"/><circle cx="-1.6" cy="0.68" r="0.28"/><circle cx="0" cy="0.68" r="0.28"/><circle cx="1.6" cy="0.68" r="0.28"/></g></g><g transform="translate(360.4 460.1) rotate(1.73)"><rect x="-1.08" y="-4.32" width="2.16" height="1.44" fill="#af9067"/><circle r="3.6" fill="#f4c890"/></g><g transform="translate(364.8 465) rotate(19.29)"><rect x="-0.81" y="-3.24" width="1.62" height="1.08" fill="#73392e"/><circle r="2.7" fill="#a05040"/><path d="M-2.58 0.06L0.06 -2.58M-2.13 1.29L1.29 -2.13M-1.29 2.13L2.13 -1.29M-0.06 2.58L2.58 -0.06" stroke="#fdf6ee" stroke-opacity="0.85" stroke-width="0.55"/></g><g transform="translate(358.2 469) rotate(-27.44)"><rect x="-1.2" y="-4.8" width="2.4" height="1.6" fill="#ac8a7e"/><circle r="4" fill="#f0c0b0"/></g><g transform="translate(356.8 481.5) rotate(17.39)"><rect x="-1.2" y="-4.8" width="2.4" height="1.6" fill="#84987e"/><circle r="4" fill="#b8d4b0"/><circle r="2.4" fill="none" stroke="#eef4e4" stroke-opacity="0.9" stroke-width="0.55"/><circle r="1" fill="none" stroke="#eef4e4" stroke-opacity="0.9" stroke-width="0.55"/></g><g transform="translate(365.7 483.7) rotate(20.81)"><rect x="-0.81" y="-3.24" width="1.62" height="1.08" fill="#a9a4a1"/><circle r="2.7" fill="#ece4e0"/><circle cx="-1.22" cy="-0.81" r="0.46" fill="#fff" fill-opacity="0.8"/><circle cx="0.81" cy="-1.22" r="0.46" fill="#fff" fill-opacity="0.8"/><circle cx="0.14" cy="0.27" r="0.46" fill="#fff" fill-opacity="0.8"/><circle cx="-0.94" cy="1.35" r="0.46" fill="#fff" fill-opacity="0.8"/><circle cx="1.35" cy="0.81" r="0.46" fill="#fff" fill-opacity="0.8"/><circle cx="1.62" cy="-0.14" r="0.46" fill="#fff" fill-opacity="0.8"/><circle cx="-1.62" cy="0.27" r="0.46" fill="#fff" fill-opacity="0.8"/></g><g transform="translate(361.3 492.9) rotate(25.18)"><rect x="-1.2" y="-4.8" width="2.4" height="1.6" fill="#9c6a48"/><circle r="4" fill="#f2e2cc"/><path d="M-3.73 -1.44L3.73 -1.44L4 0L3.73 1.44L-3.73 1.44L-4 0Z" fill="#f8efe0"/><g fill="#9a6a4a"><circle cx="-2.4" cy="-0.6" r="0.28"/><circle cx="-0.8" cy="-0.6" r="0.28"/><circle cx="0.8" cy="-0.6" r="0.28"/><circle cx="2.4" cy="-0.6" r="0.28"/><circle cx="-1.6" cy="0.68" r="0.28"/><circle cx="0" cy="0.68" r="0.28"/><circle cx="1.6" cy="0.68" r="0.28"/></g></g><g transform="translate(360.4 501.3) rotate(-32.44)"><rect x="-1.08" y="-4.32" width="2.16" height="1.44" fill="#af9067"/><circle r="3.6" fill="#f4c890"/></g><g transform="translate(364.8 506.2) rotate(31.21)"><rect x="-0.81" y="-3.24" width="1.62" height="1.08" fill="#73392e"/><circle r="2.7" fill="#a05040"/><path d="M-2.58 0.06L0.06 -2.58M-2.13 1.29L1.29 -2.13M-1.29 2.13L2.13 -1.29M-0.06 2.58L2.58 -0.06" stroke="#fdf6ee" stroke-opacity="0.85" stroke-width="0.55"/></g><g transform="translate(358.2 510.2) rotate(-28.62)"><rect x="-1.2" y="-4.8" width="2.4" height="1.6" fill="#ac8a7e"/><circle r="4" fill="#f0c0b0"/></g></g><rect x="275.1" y="457" width="84.6" height="53.7" fill="#5d7052" fill-opacity="0.45"/></g><rect x="279.3" y="461.2" width="76.2" height="45.3" fill="#fff"/><rect x="365.7" y="458.9" width="80.8" height="49.9" rx="0" fill="#fff" stroke="#bfe0e6" stroke-width="3.8"/><g fill="#24505a"><circle cx="366.8" cy="458.9" r="1.6"/><circle cx="366.8" cy="508.8" r="1.6"/><circle cx="374.9" cy="458.9" r="1.6"/><circle cx="374.9" cy="508.8" r="1.6"/><circle cx="383" cy="458.9" r="1.6"/><circle cx="383" cy="508.8" r="1.6"/><circle cx="391.1" cy="458.9" r="1.6"/><circle cx="391.1" cy="508.8" r="1.6"/><circle cx="399.2" cy="458.9" r="1.6"/><circle cx="399.2" cy="508.8" r="1.6"/><circle cx="407.3" cy="458.9" r="1.6"/><circle cx="407.3" cy="508.8" r="1.6"/><circle cx="415.4" cy="458.9" r="1.6"/><circle cx="415.4" cy="508.8" r="1.6"/><circle cx="423.5" cy="458.9" r="1.6"/><circle cx="423.5" cy="508.8" r="1.6"/><circle cx="431.6" cy="458.9" r="1.6"/><circle cx="431.6" cy="508.8" r="1.6"/><circle cx="439.7" cy="458.9" r="1.6"/><circle cx="439.7" cy="508.8" r="1.6"/><circle cx="447.8" cy="458.9" r="1.6"/><circle cx="447.8" cy="508.8" r="1.6"/><circle cx="365.7" cy="466" r="1.6"/><circle cx="446.5" cy="466" r="1.6"/><circle cx="365.7" cy="474.1" r="1.6"/><circle cx="446.5" cy="474.1" r="1.6"/><circle cx="365.7" cy="482.2" r="1.6"/><circle cx="446.5" cy="482.2" r="1.6"/><circle cx="365.7" cy="490.3" r="1.6"/><circle cx="446.5" cy="490.3" r="1.6"/><circle cx="365.7" cy="498.4" r="1.6"/><circle cx="446.5" cy="498.4" r="1.6"/><circle cx="365.7" cy="506.5" r="1.6"/><circle cx="446.5" cy="506.5" r="1.6"/></g><rect x="101" y="516.5" width="80.4" height="48.8" rx="7.9" fill="#fff" stroke="#d7edef" stroke-width="4.2"/><rect x="189.7" y="516.5" width="80.4" height="48.8" rx="7.9" fill="#fff" stroke="#fde8c8" stroke-width="4.2"/><rect x="276.7" y="516" width="81.4" height="49.8" rx="0" fill="#fff" stroke="#6e8c6c" stroke-width="3.2"/><rect x="365.4" y="516" width="81.4" height="49.8" rx="0" fill="#fff" stroke="#15525a" stroke-width="3.2"/><rect x="620.5" y="122.8" width="5.7" height="105.8" fill="#fff"/><rect x="710.3" y="122.8" width="6.3" height="105.8" fill="#fff"/><g clip-path="url(#c11)"><rect x="536" y="122.8" width="84.5" height="105.8" fill="#5d7052"/><g transform="translate(534.6 119.6) rotate(8.6)"><rect x="-1.2" y="-4.8" width="2.4" height="1.6" fill="#849ea7"/><circle r="4" fill="#b8dce8"/></g><g transform="translate(533.7 129.7) rotate(16.93)"><rect x="-1.59" y="-6.36" width="3.18" height="2.12" fill="#ab8677"/><circle r="5.3" fill="#eebba6"/></g><g transform="translate(531.9 142.6) rotate(20.66)"><rect x="-1.08" y="-4.32" width="2.16" height="1.44" fill="#84987e"/><circle r="3.6" fill="#b8d4b0"/><circle r="2.16" fill="none" stroke="#eef4e4" stroke-opacity="0.9" stroke-width="0.55"/><circle r="0.9" fill="none" stroke="#eef4e4" stroke-opacity="0.9" stroke-width="0.55"/></g><g transform="translate(532.4 150.6) rotate(30.97)"><rect x="-0.93" y="-3.72" width="1.86" height="1.24" fill="#a49e9b"/><circle r="3.1" fill="#e4dcd8"/><circle cx="-1.4" cy="-0.93" r="0.53" fill="#fff" fill-opacity="0.8"/><circle cx="0.93" cy="-1.4" r="0.53" fill="#fff" fill-opacity="0.8"/><circle cx="0.16" cy="0.31" r="0.53" fill="#fff" fill-opacity="0.8"/><circle cx="-1.08" cy="1.55" r="0.53" fill="#fff" fill-opacity="0.8"/><circle cx="1.55" cy="0.93" r="0.53" fill="#fff" fill-opacity="0.8"/><circle cx="1.86" cy="-0.16" r="0.53" fill="#fff" fill-opacity="0.8"/><circle cx="-1.86" cy="0.31" r="0.53" fill="#fff" fill-opacity="0.8"/></g><g transform="translate(534.6 160.8) rotate(16.79)"><rect x="-1.2" y="-4.8" width="2.4" height="1.6" fill="#849ea7"/><circle r="4" fill="#b8dce8"/></g><g transform="translate(533.7 170.9) rotate(29.56)"><rect x="-1.59" y="-6.36" width="3.18" height="2.12" fill="#ab8677"/><circle r="5.3" fill="#eebba6"/></g><g transform="translate(531.9 183.8) rotate(-32.97)"><rect x="-1.08" y="-4.32" width="2.16" height="1.44" fill="#84987e"/><circle r="3.6" fill="#b8d4b0"/><circle r="2.16" fill="none" stroke="#eef4e4" stroke-opacity="0.9" stroke-width="0.55"/><circle r="0.9" fill="none" stroke="#eef4e4" stroke-opacity="0.9" stroke-width="0.55"/></g><g transform="translate(532.4 191.8) rotate(-2.41)"><rect x="-0.93" y="-3.72" width="1.86" height="1.24" fill="#a49e9b"/><circle r="3.1" fill="#e4dcd8"/><circle cx="-1.4" cy="-0.93" r="0.53" fill="#fff" fill-opacity="0.8"/><circle cx="0.93" cy="-1.4" r="0.53" fill="#fff" fill-opacity="0.8"/><circle cx="0.16" cy="0.31" r="0.53" fill="#fff" fill-opacity="0.8"/><circle cx="-1.08" cy="1.55" r="0.53" fill="#fff" fill-opacity="0.8"/><circle cx="1.55" cy="0.93" r="0.53" fill="#fff" fill-opacity="0.8"/><circle cx="1.86" cy="-0.16" r="0.53" fill="#fff" fill-opacity="0.8"/><circle cx="-1.86" cy="0.31" r="0.53" fill="#fff" fill-opacity="0.8"/></g><g transform="translate(534.6 202) rotate(31.03)"><rect x="-1.2" y="-4.8" width="2.4" height="1.6" fill="#849ea7"/><circle r="4" fill="#b8dce8"/></g><g transform="translate(533.7 212.1) rotate(10.43)"><rect x="-1.59" y="-6.36" width="3.18" height="2.12" fill="#ab8677"/><circle r="5.3" fill="#eebba6"/></g><g transform="translate(531.9 225) rotate(28.06)"><rect x="-1.08" y="-4.32" width="2.16" height="1.44" fill="#84987e"/><circle r="3.6" fill="#b8d4b0"/><circle r="2.16" fill="none" stroke="#eef4e4" stroke-opacity="0.9" stroke-width="0.55"/><circle r="0.9" fill="none" stroke="#eef4e4" stroke-opacity="0.9" stroke-width="0.55"/></g><g transform="translate(532.4 233) rotate(-27.08)"><rect x="-0.93" y="-3.72" width="1.86" height="1.24" fill="#a49e9b"/><circle r="3.1" fill="#e4dcd8"/><circle cx="-1.4" cy="-0.93" r="0.53" fill="#fff" fill-opacity="0.8"/><circle cx="0.93" cy="-1.4" r="0.53" fill="#fff" fill-opacity="0.8"/><circle cx="0.16" cy="0.31" r="0.53" fill="#fff" fill-opacity="0.8"/><circle cx="-1.08" cy="1.55" r="0.53" fill="#fff" fill-opacity="0.8"/><circle cx="1.55" cy="0.93" r="0.53" fill="#fff" fill-opacity="0.8"/><circle cx="1.86" cy="-0.16" r="0.53" fill="#fff" fill-opacity="0.8"/><circle cx="-1.86" cy="0.31" r="0.53" fill="#fff" fill-opacity="0.8"/></g><g transform="translate(556.7 117.4) rotate(-2.17)"><rect x="-1.08" y="-4.32" width="2.16" height="1.44" fill="#ab8677"/><circle r="3.6" fill="#eebba6"/></g><g transform="translate(575.8 119.6) rotate(-17.74)"><rect x="-1.2" y="-4.8" width="2.4" height="1.6" fill="#849ea7"/><circle r="4" fill="#b8dce8"/></g><g transform="translate(543.8 122.6) rotate(3.06)"><rect x="-1.2" y="-4.8" width="2.4" height="1.6" fill="#9c6a48"/><circle r="4" fill="#f2e2cc"/><path d="M-3.73 -1.44L3.73 -1.44L4 0L3.73 1.44L-3.73 1.44L-4 0Z" fill="#f8efe0"/><g fill="#9a6a4a"><circle cx="-2.4" cy="-0.6" r="0.28"/><circle cx="-0.8" cy="-0.6" r="0.28"/><circle cx="0.8" cy="-0.6" r="0.28"/><circle cx="2.4" cy="-0.6" r="0.28"/><circle cx="-1.6" cy="0.68" r="0.28"/><circle cx="0" cy="0.68" r="0.28"/><circle cx="1.6" cy="0.68" r="0.28"/></g></g><g transform="translate(542.9 131) rotate(5.18)"><rect x="-1.08" y="-4.32" width="2.16" height="1.44" fill="#af9067"/><circle r="3.6" fill="#f4c890"/></g><g transform="translate(550.5 129.2) rotate(-34.08)"><rect x="-0.81" y="-3.24" width="1.62" height="1.08" fill="#849ea7"/><circle r="2.7" fill="#b8dce8"/></g><g transform="translate(554 124.8) rotate(-19.83)"><rect x="-0.66" y="-2.64" width="1.32" height="0.88" fill="#633529"/><circle r="2.2" fill="#8a4a3a"/></g><g transform="translate(555.8 135.5) rotate(-15.44)"><rect x="-1.2" y="-4.8" width="2.4" height="1.6" fill="#a49e9b"/><circle r="4" fill="#e4dcd8"/><circle cx="-1.8" cy="-1.2" r="0.68" fill="#fff" fill-opacity="0.8"/><circle cx="1.2" cy="-1.8" r="0.68" fill="#fff" fill-opacity="0.8"/><circle cx="0.2" cy="0.4" r="0.68" fill="#fff" fill-opacity="0.8"/><circle cx="-1.4" cy="2" r="0.68" fill="#fff" fill-opacity="0.8"/><circle cx="2" cy="1.2" r="0.68" fill="#fff" fill-opacity="0.8"/><circle cx="2.4" cy="-0.2" r="0.68" fill="#fff" fill-opacity="0.8"/><circle cx="-2.4" cy="0.4" r="0.68" fill="#fff" fill-opacity="0.8"/></g><g transform="translate(561.6 125.2) rotate(29.14)"><rect x="-0.66" y="-2.64" width="1.32" height="0.88" fill="#ab8677"/><circle r="2.2" fill="#eebba6"/></g><g transform="translate(564.7 130.6) rotate(18.6)"><rect x="-1.08" y="-4.32" width="2.16" height="1.44" fill="#84987e"/><circle r="3.6" fill="#b8d4b0"/><circle r="2.16" fill="none" stroke="#eef4e4" stroke-opacity="0.9" stroke-width="0.55"/><circle r="0.9" fill="none" stroke="#eef4e4" stroke-opacity="0.9" stroke-width="0.55"/></g><g transform="translate(567.4 123) rotate(-23.83)"><rect x="-0.93" y="-3.72" width="1.86" height="1.24" fill="#ab8677"/><circle r="3.1" fill="#eebba6"/></g><g transform="translate(574.9 129.7) rotate(20.8)"><rect x="-1.59" y="-6.36" width="3.18" height="2.12" fill="#ab8677"/><circle r="5.3" fill="#eebba6"/></g><g transform="translate(547.3 135.9) rotate(-25.29)"><rect x="-0.81" y="-3.24" width="1.62" height="1.08" fill="#73392e"/><circle r="2.7" fill="#a05040"/><path d="M-2.58 0.06L0.06 -2.58M-2.13 1.29L1.29 -2.13M-1.29 2.13L2.13 -1.29M-0.06 2.58L2.58 -0.06" stroke="#fdf6ee" stroke-opacity="0.85" stroke-width="0.55"/></g><g transform="translate(540.7 139.9) rotate(8.22)"><rect x="-1.2" y="-4.8" width="2.4" height="1.6" fill="#ac8a7e"/><circle r="4" fill="#f0c0b0"/></g><g transform="translate(564.7 139.9) rotate(-26.13)"><rect x="-1.2" y="-4.8" width="2.4" height="1.6" fill="#9c6a48"/><circle r="4" fill="#f0d8c0"/><path d="M-3.73 -1.44L3.73 -1.44L4 0L3.73 1.44L-3.73 1.44L-4 0Z" fill="#f8efe0"/><g fill="#9a6a4a"><circle cx="-2.4" cy="-0.6" r="0.28"/><circle cx="-0.8" cy="-0.6" r="0.28"/><circle cx="0.8" cy="-0.6" r="0.28"/><circle cx="2.4" cy="-0.6" r="0.28"/><circle cx="-1.6" cy="0.68" r="0.28"/><circle cx="0" cy="0.68" r="0.28"/><circle cx="1.6" cy="0.68" r="0.28"/></g></g><g transform="translate(573.1 142.6) rotate(-34.88)"><rect x="-1.08" y="-4.32" width="2.16" height="1.44" fill="#84987e"/><circle r="3.6" fill="#b8d4b0"/><circle r="2.16" fill="none" stroke="#eef4e4" stroke-opacity="0.9" stroke-width="0.55"/><circle r="0.9" fill="none" stroke="#eef4e4" stroke-opacity="0.9" stroke-width="0.55"/></g><g transform="translate(549.6 146.6) rotate(26)"><rect x="-1.47" y="-5.88" width="2.94" height="1.96" fill="#ac8170"/><circle r="4.9" fill="#f0b49c"/></g><g transform="translate(558.5 145.7) rotate(-20.34)"><rect x="-1.08" y="-4.32" width="2.16" height="1.44" fill="#849ea7"/><circle r="3.6" fill="#b8dce8"/></g><g transform="translate(565.6 148.8) rotate(-19.92)"><rect x="-0.93" y="-3.72" width="1.86" height="1.24" fill="#af9067"/><circle r="3.1" fill="#f4c890"/></g><g transform="translate(539.3 152.4) rotate(33.77)"><rect x="-1.2" y="-4.8" width="2.4" height="1.6" fill="#84987e"/><circle r="4" fill="#b8d4b0"/><circle r="2.4" fill="none" stroke="#eef4e4" stroke-opacity="0.9" stroke-width="0.55"/><circle r="1" fill="none" stroke="#eef4e4" stroke-opacity="0.9" stroke-width="0.55"/></g><g transform="translate(548.2 154.6) rotate(26.07)"><rect x="-0.81" y="-3.24" width="1.62" height="1.08" fill="#a9a4a1"/><circle r="2.7" fill="#ece4e0"/><circle cx="-1.22" cy="-0.81" r="0.46" fill="#fff" fill-opacity="0.8"/><circle cx="0.81" cy="-1.22" r="0.46" fill="#fff" fill-opacity="0.8"/><circle cx="0.14" cy="0.27" r="0.46" fill="#fff" fill-opacity="0.8"/><circle cx="-0.94" cy="1.35" r="0.46" fill="#fff" fill-opacity="0.8"/><circle cx="1.35" cy="0.81" r="0.46" fill="#fff" fill-opacity="0.8"/><circle cx="1.62" cy="-0.14" r="0.46" fill="#fff" fill-opacity="0.8"/><circle cx="-1.62" cy="0.27" r="0.46" fill="#fff" fill-opacity="0.8"/></g><g transform="translate(556.2 151.5) rotate(-14.75)"><rect x="-0.93" y="-3.72" width="1.86" height="1.24" fill="#84987e"/><circle r="3.1" fill="#b8d4b0"/></g><g transform="translate(573.6 150.6) rotate(32.3)"><rect x="-0.93" y="-3.72" width="1.86" height="1.24" fill="#a49e9b"/><circle r="3.1" fill="#e4dcd8"/><circle cx="-1.4" cy="-0.93" r="0.53" fill="#fff" fill-opacity="0.8"/><circle cx="0.93" cy="-1.4" r="0.53" fill="#fff" fill-opacity="0.8"/><circle cx="0.16" cy="0.31" r="0.53" fill="#fff" fill-opacity="0.8"/><circle cx="-1.08" cy="1.55" r="0.53" fill="#fff" fill-opacity="0.8"/><circle cx="1.55" cy="0.93" r="0.53" fill="#fff" fill-opacity="0.8"/><circle cx="1.86" cy="-0.16" r="0.53" fill="#fff" fill-opacity="0.8"/><circle cx="-1.86" cy="0.31" r="0.53" fill="#fff" fill-opacity="0.8"/></g><g transform="translate(566 155.9) rotate(2.75)"><rect x="-1.2" y="-4.8" width="2.4" height="1.6" fill="#73392e"/><circle r="4" fill="#a05040"/><path d="M-3.82 0.09L0.09 -3.82M-3.16 1.92L1.92 -3.16M-1.92 3.16L3.16 -1.92M-0.09 3.82L3.82 -0.09" stroke="#fdf6ee" stroke-opacity="0.85" stroke-width="0.55"/></g><g transform="translate(556.7 158.6) rotate(12.45)"><rect x="-1.08" y="-4.32" width="2.16" height="1.44" fill="#ab8677"/><circle r="3.6" fill="#eebba6"/></g><g transform="translate(575.8 160.8) rotate(-20.67)"><rect x="-1.2" y="-4.8" width="2.4" height="1.6" fill="#849ea7"/><circle r="4" fill="#b8dce8"/></g><g transform="translate(543.8 163.8) rotate(30.87)"><rect x="-1.2" y="-4.8" width="2.4" height="1.6" fill="#9c6a48"/><circle r="4" fill="#f2e2cc"/><path d="M-3.73 -1.44L3.73 -1.44L4 0L3.73 1.44L-3.73 1.44L-4 0Z" fill="#f8efe0"/><g fill="#9a6a4a"><circle cx="-2.4" cy="-0.6" r="0.28"/><circle cx="-0.8" cy="-0.6" r="0.28"/><circle cx="0.8" cy="-0.6" r="0.28"/><circle cx="2.4" cy="-0.6" r="0.28"/><circle cx="-1.6" cy="0.68" r="0.28"/><circle cx="0" cy="0.68" r="0.28"/><circle cx="1.6" cy="0.68" r="0.28"/></g></g><g transform="translate(542.9 172.2) rotate(13.34)"><rect x="-1.08" y="-4.32" width="2.16" height="1.44" fill="#af9067"/><circle r="3.6" fill="#f4c890"/></g><g transform="translate(550.5 170.4) rotate(32.66)"><rect x="-0.81" y="-3.24" width="1.62" height="1.08" fill="#849ea7"/><circle r="2.7" fill="#b8dce8"/></g><g transform="translate(554 166) rotate(27.56)"><rect x="-0.66" y="-2.64" width="1.32" height="0.88" fill="#633529"/><circle r="2.2" fill="#8a4a3a"/></g><g transform="translate(555.8 176.7) rotate(-14.08)"><rect x="-1.2" y="-4.8" width="2.4" height="1.6" fill="#a49e9b"/><circle r="4" fill="#e4dcd8"/><circle cx="-1.8" cy="-1.2" r="0.68" fill="#fff" fill-opacity="0.8"/><circle cx="1.2" cy="-1.8" r="0.68" fill="#fff" fill-opacity="0.8"/><circle cx="0.2" cy="0.4" r="0.68" fill="#fff" fill-opacity="0.8"/><circle cx="-1.4" cy="2" r="0.68" fill="#fff" fill-opacity="0.8"/><circle cx="2" cy="1.2" r="0.68" fill="#fff" fill-opacity="0.8"/><circle cx="2.4" cy="-0.2" r="0.68" fill="#fff" fill-opacity="0.8"/><circle cx="-2.4" cy="0.4" r="0.68" fill="#fff" fill-opacity="0.8"/></g><g transform="translate(561.6 166.4) rotate(-9.72)"><rect x="-0.66" y="-2.64" width="1.32" height="0.88" fill="#ab8677"/><circle r="2.2" fill="#eebba6"/></g><g transform="translate(564.7 171.8) rotate(-23.38)"><rect x="-1.08" y="-4.32" width="2.16" height="1.44" fill="#84987e"/><circle r="3.6" fill="#b8d4b0"/><circle r="2.16" fill="none" stroke="#eef4e4" stroke-opacity="0.9" stroke-width="0.55"/><circle r="0.9" fill="none" stroke="#eef4e4" stroke-opacity="0.9" stroke-width="0.55"/></g><g transform="translate(567.4 164.2) rotate(-24.8)"><rect x="-0.93" y="-3.72" width="1.86" height="1.24" fill="#ab8677"/><circle r="3.1" fill="#eebba6"/></g><g transform="translate(574.9 170.9) rotate(-30.44)"><rect x="-1.59" y="-6.36" width="3.18" height="2.12" fill="#ab8677"/><circle r="5.3" fill="#eebba6"/></g><g transform="translate(547.3 177.1) rotate(-13.9)"><rect x="-0.81" y="-3.24" width="1.62" height="1.08" fill="#73392e"/><circle r="2.7" fill="#a05040"/><path d="M-2.58 0.06L0.06 -2.58M-2.13 1.29L1.29 -2.13M-1.29 2.13L2.13 -1.29M-0.06 2.58L2.58 -0.06" stroke="#fdf6ee" stroke-opacity="0.85" stroke-width="0.55"/></g><g transform="translate(540.7 181.1) rotate(7.22)"><rect x="-1.2" y="-4.8" width="2.4" height="1.6" fill="#ac8a7e"/><circle r="4" fill="#f0c0b0"/></g><g transform="translate(564.7 181.1) rotate(-34.76)"><rect x="-1.2" y="-4.8" width="2.4" height="1.6" fill="#9c6a48"/><circle r="4" fill="#f0d8c0"/><path d="M-3.73 -1.44L3.73 -1.44L4 0L3.73 1.44L-3.73 1.44L-4 0Z" fill="#f8efe0"/><g fill="#9a6a4a"><circle cx="-2.4" cy="-0.6" r="0.28"/><circle cx="-0.8" cy="-0.6" r="0.28"/><circle cx="0.8" cy="-0.6" r="0.28"/><circle cx="2.4" cy="-0.6" r="0.28"/><circle cx="-1.6" cy="0.68" r="0.28"/><circle cx="0" cy="0.68" r="0.28"/><circle cx="1.6" cy="0.68" r="0.28"/></g></g><g transform="translate(573.1 183.8) rotate(12.46)"><rect x="-1.08" y="-4.32" width="2.16" height="1.44" fill="#84987e"/><circle r="3.6" fill="#b8d4b0"/><circle r="2.16" fill="none" stroke="#eef4e4" stroke-opacity="0.9" stroke-width="0.55"/><circle r="0.9" fill="none" stroke="#eef4e4" stroke-opacity="0.9" stroke-width="0.55"/></g><g transform="translate(549.6 187.8) rotate(-11.35)"><rect x="-1.47" y="-5.88" width="2.94" height="1.96" fill="#ac8170"/><circle r="4.9" fill="#f0b49c"/></g><g transform="translate(558.5 186.9) rotate(-13.3)"><rect x="-1.08" y="-4.32" width="2.16" height="1.44" fill="#849ea7"/><circle r="3.6" fill="#b8dce8"/></g><g transform="translate(565.6 190) rotate(22.3)"><rect x="-0.93" y="-3.72" width="1.86" height="1.24" fill="#af9067"/><circle r="3.1" fill="#f4c890"/></g><g transform="translate(539.3 193.6) rotate(-1.35)"><rect x="-1.2" y="-4.8" width="2.4" height="1.6" fill="#84987e"/><circle r="4" fill="#b8d4b0"/><circle r="2.4" fill="none" stroke="#eef4e4" stroke-opacity="0.9" stroke-width="0.55"/><circle r="1" fill="none" stroke="#eef4e4" stroke-opacity="0.9" stroke-width="0.55"/></g><g transform="translate(548.2 195.8) rotate(-12.89)"><rect x="-0.81" y="-3.24" width="1.62" height="1.08" fill="#a9a4a1"/><circle r="2.7" fill="#ece4e0"/><circle cx="-1.22" cy="-0.81" r="0.46" fill="#fff" fill-opacity="0.8"/><circle cx="0.81" cy="-1.22" r="0.46" fill="#fff" fill-opacity="0.8"/><circle cx="0.14" cy="0.27" r="0.46" fill="#fff" fill-opacity="0.8"/><circle cx="-0.94" cy="1.35" r="0.46" fill="#fff" fill-opacity="0.8"/><circle cx="1.35" cy="0.81" r="0.46" fill="#fff" fill-opacity="0.8"/><circle cx="1.62" cy="-0.14" r="0.46" fill="#fff" fill-opacity="0.8"/><circle cx="-1.62" cy="0.27" r="0.46" fill="#fff" fill-opacity="0.8"/></g><g transform="translate(556.2 192.7) rotate(-1.31)"><rect x="-0.93" y="-3.72" width="1.86" height="1.24" fill="#84987e"/><circle r="3.1" fill="#b8d4b0"/></g><g transform="translate(573.6 191.8) rotate(14.33)"><rect x="-0.93" y="-3.72" width="1.86" height="1.24" fill="#a49e9b"/><circle r="3.1" fill="#e4dcd8"/><circle cx="-1.4" cy="-0.93" r="0.53" fill="#fff" fill-opacity="0.8"/><circle cx="0.93" cy="-1.4" r="0.53" fill="#fff" fill-opacity="0.8"/><circle cx="0.16" cy="0.31" r="0.53" fill="#fff" fill-opacity="0.8"/><circle cx="-1.08" cy="1.55" r="0.53" fill="#fff" fill-opacity="0.8"/><circle cx="1.55" cy="0.93" r="0.53" fill="#fff" fill-opacity="0.8"/><circle cx="1.86" cy="-0.16" r="0.53" fill="#fff" fill-opacity="0.8"/><circle cx="-1.86" cy="0.31" r="0.53" fill="#fff" fill-opacity="0.8"/></g><g transform="translate(566 197.1) rotate(-31.01)"><rect x="-1.2" y="-4.8" width="2.4" height="1.6" fill="#73392e"/><circle r="4" fill="#a05040"/><path d="M-3.82 0.09L0.09 -3.82M-3.16 1.92L1.92 -3.16M-1.92 3.16L3.16 -1.92M-0.09 3.82L3.82 -0.09" stroke="#fdf6ee" stroke-opacity="0.85" stroke-width="0.55"/></g><g transform="translate(556.7 199.8) rotate(33.26)"><rect x="-1.08" y="-4.32" width="2.16" height="1.44" fill="#ab8677"/><circle r="3.6" fill="#eebba6"/></g><g transform="translate(575.8 202) rotate(-33.4)"><rect x="-1.2" y="-4.8" width="2.4" height="1.6" fill="#849ea7"/><circle r="4" fill="#b8dce8"/></g><g transform="translate(543.8 205) rotate(17.49)"><rect x="-1.2" y="-4.8" width="2.4" height="1.6" fill="#9c6a48"/><circle r="4" fill="#f2e2cc"/><path d="M-3.73 -1.44L3.73 -1.44L4 0L3.73 1.44L-3.73 1.44L-4 0Z" fill="#f8efe0"/><g fill="#9a6a4a"><circle cx="-2.4" cy="-0.6" r="0.28"/><circle cx="-0.8" cy="-0.6" r="0.28"/><circle cx="0.8" cy="-0.6" r="0.28"/><circle cx="2.4" cy="-0.6" r="0.28"/><circle cx="-1.6" cy="0.68" r="0.28"/><circle cx="0" cy="0.68" r="0.28"/><circle cx="1.6" cy="0.68" r="0.28"/></g></g><g transform="translate(542.9 213.4) rotate(24.14)"><rect x="-1.08" y="-4.32" width="2.16" height="1.44" fill="#af9067"/><circle r="3.6" fill="#f4c890"/></g><g transform="translate(550.5 211.6) rotate(-33.74)"><rect x="-0.81" y="-3.24" width="1.62" height="1.08" fill="#849ea7"/><circle r="2.7" fill="#b8dce8"/></g><g transform="translate(554 207.2) rotate(20.14)"><rect x="-0.66" y="-2.64" width="1.32" height="0.88" fill="#633529"/><circle r="2.2" fill="#8a4a3a"/></g><g transform="translate(555.8 217.9) rotate(-9.37)"><rect x="-1.2" y="-4.8" width="2.4" height="1.6" fill="#a49e9b"/><circle r="4" fill="#e4dcd8"/><circle cx="-1.8" cy="-1.2" r="0.68" fill="#fff" fill-opacity="0.8"/><circle cx="1.2" cy="-1.8" r="0.68" fill="#fff" fill-opacity="0.8"/><circle cx="0.2" cy="0.4" r="0.68" fill="#fff" fill-opacity="0.8"/><circle cx="-1.4" cy="2" r="0.68" fill="#fff" fill-opacity="0.8"/><circle cx="2" cy="1.2" r="0.68" fill="#fff" fill-opacity="0.8"/><circle cx="2.4" cy="-0.2" r="0.68" fill="#fff" fill-opacity="0.8"/><circle cx="-2.4" cy="0.4" r="0.68" fill="#fff" fill-opacity="0.8"/></g><g transform="translate(561.6 207.6) rotate(5.5)"><rect x="-0.66" y="-2.64" width="1.32" height="0.88" fill="#ab8677"/><circle r="2.2" fill="#eebba6"/></g><g transform="translate(564.7 213) rotate(-34.36)"><rect x="-1.08" y="-4.32" width="2.16" height="1.44" fill="#84987e"/><circle r="3.6" fill="#b8d4b0"/><circle r="2.16" fill="none" stroke="#eef4e4" stroke-opacity="0.9" stroke-width="0.55"/><circle r="0.9" fill="none" stroke="#eef4e4" stroke-opacity="0.9" stroke-width="0.55"/></g><g transform="translate(567.4 205.4) rotate(-31.73)"><rect x="-0.93" y="-3.72" width="1.86" height="1.24" fill="#ab8677"/><circle r="3.1" fill="#eebba6"/></g><g transform="translate(574.9 212.1) rotate(-22.34)"><rect x="-1.59" y="-6.36" width="3.18" height="2.12" fill="#ab8677"/><circle r="5.3" fill="#eebba6"/></g><g transform="translate(547.3 218.3) rotate(31.86)"><rect x="-0.81" y="-3.24" width="1.62" height="1.08" fill="#73392e"/><circle r="2.7" fill="#a05040"/><path d="M-2.58 0.06L0.06 -2.58M-2.13 1.29L1.29 -2.13M-1.29 2.13L2.13 -1.29M-0.06 2.58L2.58 -0.06" stroke="#fdf6ee" stroke-opacity="0.85" stroke-width="0.55"/></g><g transform="translate(540.7 222.3) rotate(-21.24)"><rect x="-1.2" y="-4.8" width="2.4" height="1.6" fill="#ac8a7e"/><circle r="4" fill="#f0c0b0"/></g><g transform="translate(564.7 222.3) rotate(17.9)"><rect x="-1.2" y="-4.8" width="2.4" height="1.6" fill="#9c6a48"/><circle r="4" fill="#f0d8c0"/><path d="M-3.73 -1.44L3.73 -1.44L4 0L3.73 1.44L-3.73 1.44L-4 0Z" fill="#f8efe0"/><g fill="#9a6a4a"><circle cx="-2.4" cy="-0.6" r="0.28"/><circle cx="-0.8" cy="-0.6" r="0.28"/><circle cx="0.8" cy="-0.6" r="0.28"/><circle cx="2.4" cy="-0.6" r="0.28"/><circle cx="-1.6" cy="0.68" r="0.28"/><circle cx="0" cy="0.68" r="0.28"/><circle cx="1.6" cy="0.68" r="0.28"/></g></g><g transform="translate(573.1 225) rotate(30.08)"><rect x="-1.08" y="-4.32" width="2.16" height="1.44" fill="#84987e"/><circle r="3.6" fill="#b8d4b0"/><circle r="2.16" fill="none" stroke="#eef4e4" stroke-opacity="0.9" stroke-width="0.55"/><circle r="0.9" fill="none" stroke="#eef4e4" stroke-opacity="0.9" stroke-width="0.55"/></g><g transform="translate(549.6 229) rotate(30.94)"><rect x="-1.47" y="-5.88" width="2.94" height="1.96" fill="#ac8170"/><circle r="4.9" fill="#f0b49c"/></g><g transform="translate(558.5 228.1) rotate(-10.89)"><rect x="-1.08" y="-4.32" width="2.16" height="1.44" fill="#849ea7"/><circle r="3.6" fill="#b8dce8"/></g><g transform="translate(565.6 231.2) rotate(-10.16)"><rect x="-0.93" y="-3.72" width="1.86" height="1.24" fill="#af9067"/><circle r="3.1" fill="#f4c890"/></g><g transform="translate(556.2 233.9) rotate(1.73)"><rect x="-0.93" y="-3.72" width="1.86" height="1.24" fill="#84987e"/><circle r="3.1" fill="#b8d4b0"/></g><g transform="translate(573.6 233) rotate(19.29)"><rect x="-0.93" y="-3.72" width="1.86" height="1.24" fill="#a49e9b"/><circle r="3.1" fill="#e4dcd8"/><circle cx="-1.4" cy="-0.93" r="0.53" fill="#fff" fill-opacity="0.8"/><circle cx="0.93" cy="-1.4" r="0.53" fill="#fff" fill-opacity="0.8"/><circle cx="0.16" cy="0.31" r="0.53" fill="#fff" fill-opacity="0.8"/><circle cx="-1.08" cy="1.55" r="0.53" fill="#fff" fill-opacity="0.8"/><circle cx="1.55" cy="0.93" r="0.53" fill="#fff" fill-opacity="0.8"/><circle cx="1.86" cy="-0.16" r="0.53" fill="#fff" fill-opacity="0.8"/><circle cx="-1.86" cy="0.31" r="0.53" fill="#fff" fill-opacity="0.8"/></g><g transform="translate(597.9 117.4) rotate(-27.44)"><rect x="-1.08" y="-4.32" width="2.16" height="1.44" fill="#ab8677"/><circle r="3.6" fill="#eebba6"/></g><g transform="translate(617 119.6) rotate(17.39)"><rect x="-1.2" y="-4.8" width="2.4" height="1.6" fill="#849ea7"/><circle r="4" fill="#b8dce8"/></g><g transform="translate(585 122.6) rotate(20.81)"><rect x="-1.2" y="-4.8" width="2.4" height="1.6" fill="#9c6a48"/><circle r="4" fill="#f2e2cc"/><path d="M-3.73 -1.44L3.73 -1.44L4 0L3.73 1.44L-3.73 1.44L-4 0Z" fill="#f8efe0"/><g fill="#9a6a4a"><circle cx="-2.4" cy="-0.6" r="0.28"/><circle cx="-0.8" cy="-0.6" r="0.28"/><circle cx="0.8" cy="-0.6" r="0.28"/><circle cx="2.4" cy="-0.6" r="0.28"/><circle cx="-1.6" cy="0.68" r="0.28"/><circle cx="0" cy="0.68" r="0.28"/><circle cx="1.6" cy="0.68" r="0.28"/></g></g><g transform="translate(584.1 131) rotate(25.18)"><rect x="-1.08" y="-4.32" width="2.16" height="1.44" fill="#af9067"/><circle r="3.6" fill="#f4c890"/></g><g transform="translate(591.7 129.2) rotate(-32.44)"><rect x="-0.81" y="-3.24" width="1.62" height="1.08" fill="#849ea7"/><circle r="2.7" fill="#b8dce8"/></g><g transform="translate(595.2 124.8) rotate(31.21)"><rect x="-0.66" y="-2.64" width="1.32" height="0.88" fill="#633529"/><circle r="2.2" fill="#8a4a3a"/></g><g transform="translate(597 135.5) rotate(-28.62)"><rect x="-1.2" y="-4.8" width="2.4" height="1.6" fill="#a49e9b"/><circle r="4" fill="#e4dcd8"/><circle cx="-1.8" cy="-1.2" r="0.68" fill="#fff" fill-opacity="0.8"/><circle cx="1.2" cy="-1.8" r="0.68" fill="#fff" fill-opacity="0.8"/><circle cx="0.2" cy="0.4" r="0.68" fill="#fff" fill-opacity="0.8"/><circle cx="-1.4" cy="2" r="0.68" fill="#fff" fill-opacity="0.8"/><circle cx="2" cy="1.2" r="0.68" fill="#fff" fill-opacity="0.8"/><circle cx="2.4" cy="-0.2" r="0.68" fill="#fff" fill-opacity="0.8"/><circle cx="-2.4" cy="0.4" r="0.68" fill="#fff" fill-opacity="0.8"/></g><g transform="translate(602.8 125.2) rotate(-11.15)"><rect x="-0.66" y="-2.64" width="1.32" height="0.88" fill="#ab8677"/><circle r="2.2" fill="#eebba6"/></g><g transform="translate(605.9 130.6) rotate(7.76)"><rect x="-1.08" y="-4.32" width="2.16" height="1.44" fill="#84987e"/><circle r="3.6" fill="#b8d4b0"/><circle r="2.16" fill="none" stroke="#eef4e4" stroke-opacity="0.9" stroke-width="0.55"/><circle r="0.9" fill="none" stroke="#eef4e4" stroke-opacity="0.9" stroke-width="0.55"/></g><g transform="translate(608.6 123) rotate(29.27)"><rect x="-0.93" y="-3.72" width="1.86" height="1.24" fill="#ab8677"/><circle r="3.1" fill="#eebba6"/></g><g transform="translate(616.1 129.7) rotate(-11.2)"><rect x="-1.59" y="-6.36" width="3.18" height="2.12" fill="#ab8677"/><circle r="5.3" fill="#eebba6"/></g><g transform="translate(588.5 135.9) rotate(29.69)"><rect x="-0.81" y="-3.24" width="1.62" height="1.08" fill="#73392e"/><circle r="2.7" fill="#a05040"/><path d="M-2.58 0.06L0.06 -2.58M-2.13 1.29L1.29 -2.13M-1.29 2.13L2.13 -1.29M-0.06 2.58L2.58 -0.06" stroke="#fdf6ee" stroke-opacity="0.85" stroke-width="0.55"/></g><g transform="translate(581.9 139.9) rotate(3.16)"><rect x="-1.2" y="-4.8" width="2.4" height="1.6" fill="#ac8a7e"/><circle r="4" fill="#f0c0b0"/></g><g transform="translate(605.9 139.9) rotate(-13.13)"><rect x="-1.2" y="-4.8" width="2.4" height="1.6" fill="#9c6a48"/><circle r="4" fill="#f0d8c0"/><path d="M-3.73 -1.44L3.73 -1.44L4 0L3.73 1.44L-3.73 1.44L-4 0Z" fill="#f8efe0"/><g fill="#9a6a4a"><circle cx="-2.4" cy="-0.6" r="0.28"/><circle cx="-0.8" cy="-0.6" r="0.28"/><circle cx="0.8" cy="-0.6" r="0.28"/><circle cx="2.4" cy="-0.6" r="0.28"/><circle cx="-1.6" cy="0.68" r="0.28"/><circle cx="0" cy="0.68" r="0.28"/><circle cx="1.6" cy="0.68" r="0.28"/></g></g><g transform="translate(614.3 142.6) rotate(-12.82)"><rect x="-1.08" y="-4.32" width="2.16" height="1.44" fill="#84987e"/><circle r="3.6" fill="#b8d4b0"/><circle r="2.16" fill="none" stroke="#eef4e4" stroke-opacity="0.9" stroke-width="0.55"/><circle r="0.9" fill="none" stroke="#eef4e4" stroke-opacity="0.9" stroke-width="0.55"/></g><g transform="translate(590.8 146.6) rotate(-22.58)"><rect x="-1.47" y="-5.88" width="2.94" height="1.96" fill="#ac8170"/><circle r="4.9" fill="#f0b49c"/></g><g transform="translate(599.7 145.7) rotate(-29.53)"><rect x="-1.08" y="-4.32" width="2.16" height="1.44" fill="#849ea7"/><circle r="3.6" fill="#b8dce8"/></g><g transform="translate(606.8 148.8) rotate(-24.58)"><rect x="-0.93" y="-3.72" width="1.86" height="1.24" fill="#af9067"/><circle r="3.1" fill="#f4c890"/></g><g transform="translate(580.5 152.4) rotate(13.24)"><rect x="-1.2" y="-4.8" width="2.4" height="1.6" fill="#84987e"/><circle r="4" fill="#b8d4b0"/><circle r="2.4" fill="none" stroke="#eef4e4" stroke-opacity="0.9" stroke-width="0.55"/><circle r="1" fill="none" stroke="#eef4e4" stroke-opacity="0.9" stroke-width="0.55"/></g><g transform="translate(589.4 154.6) rotate(34.77)"><rect x="-0.81" y="-3.24" width="1.62" height="1.08" fill="#a9a4a1"/><circle r="2.7" fill="#ece4e0"/><circle cx="-1.22" cy="-0.81" r="0.46" fill="#fff" fill-opacity="0.8"/><circle cx="0.81" cy="-1.22" r="0.46" fill="#fff" fill-opacity="0.8"/><circle cx="0.14" cy="0.27" r="0.46" fill="#fff" fill-opacity="0.8"/><circle cx="-0.94" cy="1.35" r="0.46" fill="#fff" fill-opacity="0.8"/><circle cx="1.35" cy="0.81" r="0.46" fill="#fff" fill-opacity="0.8"/><circle cx="1.62" cy="-0.14" r="0.46" fill="#fff" fill-opacity="0.8"/><circle cx="-1.62" cy="0.27" r="0.46" fill="#fff" fill-opacity="0.8"/></g><g transform="translate(597.4 151.5) rotate(-23.69)"><rect x="-0.93" y="-3.72" width="1.86" height="1.24" fill="#84987e"/><circle r="3.1" fill="#b8d4b0"/></g><g transform="translate(614.8 150.6) rotate(-31.6)"><rect x="-0.93" y="-3.72" width="1.86" height="1.24" fill="#a49e9b"/><circle r="3.1" fill="#e4dcd8"/><circle cx="-1.4" cy="-0.93" r="0.53" fill="#fff" fill-opacity="0.8"/><circle cx="0.93" cy="-1.4" r="0.53" fill="#fff" fill-opacity="0.8"/><circle cx="0.16" cy="0.31" r="0.53" fill="#fff" fill-opacity="0.8"/><circle cx="-1.08" cy="1.55" r="0.53" fill="#fff" fill-opacity="0.8"/><circle cx="1.55" cy="0.93" r="0.53" fill="#fff" fill-opacity="0.8"/><circle cx="1.86" cy="-0.16" r="0.53" fill="#fff" fill-opacity="0.8"/><circle cx="-1.86" cy="0.31" r="0.53" fill="#fff" fill-opacity="0.8"/></g><g transform="translate(607.2 155.9) rotate(34.07)"><rect x="-1.2" y="-4.8" width="2.4" height="1.6" fill="#73392e"/><circle r="4" fill="#a05040"/><path d="M-3.82 0.09L0.09 -3.82M-3.16 1.92L1.92 -3.16M-1.92 3.16L3.16 -1.92M-0.09 3.82L3.82 -0.09" stroke="#fdf6ee" stroke-opacity="0.85" stroke-width="0.55"/></g><g transform="translate(597.9 158.6) rotate(2.35)"><rect x="-1.08" y="-4.32" width="2.16" height="1.44" fill="#ab8677"/><circle r="3.6" fill="#eebba6"/></g><g transform="translate(617 160.8) rotate(-6.59)"><rect x="-1.2" y="-4.8" width="2.4" height="1.6" fill="#849ea7"/><circle r="4" fill="#b8dce8"/></g><g transform="translate(585 163.8) rotate(-18.39)"><rect x="-1.2" y="-4.8" width="2.4" height="1.6" fill="#9c6a48"/><circle r="4" fill="#f2e2cc"/><path d="M-3.73 -1.44L3.73 -1.44L4 0L3.73 1.44L-3.73 1.44L-4 0Z" fill="#f8efe0"/><g fill="#9a6a4a"><circle cx="-2.4" cy="-0.6" r="0.28"/><circle cx="-0.8" cy="-0.6" r="0.28"/><circle cx="0.8" cy="-0.6" r="0.28"/><circle cx="2.4" cy="-0.6" r="0.28"/><circle cx="-1.6" cy="0.68" r="0.28"/><circle cx="0" cy="0.68" r="0.28"/><circle cx="1.6" cy="0.68" r="0.28"/></g></g><g transform="translate(584.1 172.2) rotate(6.58)"><rect x="-1.08" y="-4.32" width="2.16" height="1.44" fill="#af9067"/><circle r="3.6" fill="#f4c890"/></g><g transform="translate(591.7 170.4) rotate(22.84)"><rect x="-0.81" y="-3.24" width="1.62" height="1.08" fill="#849ea7"/><circle r="2.7" fill="#b8dce8"/></g><g transform="translate(595.2 166) rotate(-3.1)"><rect x="-0.66" y="-2.64" width="1.32" height="0.88" fill="#633529"/><circle r="2.2" fill="#8a4a3a"/></g><g transform="translate(597 176.7) rotate(-5.48)"><rect x="-1.2" y="-4.8" width="2.4" height="1.6" fill="#a49e9b"/><circle r="4" fill="#e4dcd8"/><circle cx="-1.8" cy="-1.2" r="0.68" fill="#fff" fill-opacity="0.8"/><circle cx="1.2" cy="-1.8" r="0.68" fill="#fff" fill-opacity="0.8"/><circle cx="0.2" cy="0.4" r="0.68" fill="#fff" fill-opacity="0.8"/><circle cx="-1.4" cy="2" r="0.68" fill="#fff" fill-opacity="0.8"/><circle cx="2" cy="1.2" r="0.68" fill="#fff" fill-opacity="0.8"/><circle cx="2.4" cy="-0.2" r="0.68" fill="#fff" fill-opacity="0.8"/><circle cx="-2.4" cy="0.4" r="0.68" fill="#fff" fill-opacity="0.8"/></g><g transform="translate(602.8 166.4) rotate(-31.1)"><rect x="-0.66" y="-2.64" width="1.32" height="0.88" fill="#ab8677"/><circle r="2.2" fill="#eebba6"/></g><g transform="translate(605.9 171.8) rotate(29.12)"><rect x="-1.08" y="-4.32" width="2.16" height="1.44" fill="#84987e"/><circle r="3.6" fill="#b8d4b0"/><circle r="2.16" fill="none" stroke="#eef4e4" stroke-opacity="0.9" stroke-width="0.55"/><circle r="0.9" fill="none" stroke="#eef4e4" stroke-opacity="0.9" stroke-width="0.55"/></g><g transform="translate(608.6 164.2) rotate(-32.71)"><rect x="-0.93" y="-3.72" width="1.86" height="1.24" fill="#ab8677"/><circle r="3.1" fill="#eebba6"/></g><g transform="translate(616.1 170.9) rotate(-0.45)"><rect x="-1.59" y="-6.36" width="3.18" height="2.12" fill="#ab8677"/><circle r="5.3" fill="#eebba6"/></g><g transform="translate(588.5 177.1) rotate(23.69)"><rect x="-0.81" y="-3.24" width="1.62" height="1.08" fill="#73392e"/><circle r="2.7" fill="#a05040"/><path d="M-2.58 0.06L0.06 -2.58M-2.13 1.29L1.29 -2.13M-1.29 2.13L2.13 -1.29M-0.06 2.58L2.58 -0.06" stroke="#fdf6ee" stroke-opacity="0.85" stroke-width="0.55"/></g><g transform="translate(581.9 181.1) rotate(-25.86)"><rect x="-1.2" y="-4.8" width="2.4" height="1.6" fill="#ac8a7e"/><circle r="4" fill="#f0c0b0"/></g><g transform="translate(605.9 181.1) rotate(16.22)"><rect x="-1.2" y="-4.8" width="2.4" height="1.6" fill="#9c6a48"/><circle r="4" fill="#f0d8c0"/><path d="M-3.73 -1.44L3.73 -1.44L4 0L3.73 1.44L-3.73 1.44L-4 0Z" fill="#f8efe0"/><g fill="#9a6a4a"><circle cx="-2.4" cy="-0.6" r="0.28"/><circle cx="-0.8" cy="-0.6" r="0.28"/><circle cx="0.8" cy="-0.6" r="0.28"/><circle cx="2.4" cy="-0.6" r="0.28"/><circle cx="-1.6" cy="0.68" r="0.28"/><circle cx="0" cy="0.68" r="0.28"/><circle cx="1.6" cy="0.68" r="0.28"/></g></g><g transform="translate(614.3 183.8) rotate(31.49)"><rect x="-1.08" y="-4.32" width="2.16" height="1.44" fill="#84987e"/><circle r="3.6" fill="#b8d4b0"/><circle r="2.16" fill="none" stroke="#eef4e4" stroke-opacity="0.9" stroke-width="0.55"/><circle r="0.9" fill="none" stroke="#eef4e4" stroke-opacity="0.9" stroke-width="0.55"/></g><g transform="translate(590.8 187.8) rotate(9.13)"><rect x="-1.47" y="-5.88" width="2.94" height="1.96" fill="#ac8170"/><circle r="4.9" fill="#f0b49c"/></g><g transform="translate(599.7 186.9) rotate(20.16)"><rect x="-1.08" y="-4.32" width="2.16" height="1.44" fill="#849ea7"/><circle r="3.6" fill="#b8dce8"/></g><g transform="translate(606.8 190) rotate(-27.54)"><rect x="-0.93" y="-3.72" width="1.86" height="1.24" fill="#af9067"/><circle r="3.1" fill="#f4c890"/></g><g transform="translate(580.5 193.6) rotate(-4.58)"><rect x="-1.2" y="-4.8" width="2.4" height="1.6" fill="#84987e"/><circle r="4" fill="#b8d4b0"/><circle r="2.4" fill="none" stroke="#eef4e4" stroke-opacity="0.9" stroke-width="0.55"/><circle r="1" fill="none" stroke="#eef4e4" stroke-opacity="0.9" stroke-width="0.55"/></g><g transform="translate(589.4 195.8) rotate(-24.55)"><rect x="-0.81" y="-3.24" width="1.62" height="1.08" fill="#a9a4a1"/><circle r="2.7" fill="#ece4e0"/><circle cx="-1.22" cy="-0.81" r="0.46" fill="#fff" fill-opacity="0.8"/><circle cx="0.81" cy="-1.22" r="0.46" fill="#fff" fill-opacity="0.8"/><circle cx="0.14" cy="0.27" r="0.46" fill="#fff" fill-opacity="0.8"/><circle cx="-0.94" cy="1.35" r="0.46" fill="#fff" fill-opacity="0.8"/><circle cx="1.35" cy="0.81" r="0.46" fill="#fff" fill-opacity="0.8"/><circle cx="1.62" cy="-0.14" r="0.46" fill="#fff" fill-opacity="0.8"/><circle cx="-1.62" cy="0.27" r="0.46" fill="#fff" fill-opacity="0.8"/></g><g transform="translate(597.4 192.7) rotate(24.13)"><rect x="-0.93" y="-3.72" width="1.86" height="1.24" fill="#84987e"/><circle r="3.1" fill="#b8d4b0"/></g><g transform="translate(614.8 191.8) rotate(-14.36)"><rect x="-0.93" y="-3.72" width="1.86" height="1.24" fill="#a49e9b"/><circle r="3.1" fill="#e4dcd8"/><circle cx="-1.4" cy="-0.93" r="0.53" fill="#fff" fill-opacity="0.8"/><circle cx="0.93" cy="-1.4" r="0.53" fill="#fff" fill-opacity="0.8"/><circle cx="0.16" cy="0.31" r="0.53" fill="#fff" fill-opacity="0.8"/><circle cx="-1.08" cy="1.55" r="0.53" fill="#fff" fill-opacity="0.8"/><circle cx="1.55" cy="0.93" r="0.53" fill="#fff" fill-opacity="0.8"/><circle cx="1.86" cy="-0.16" r="0.53" fill="#fff" fill-opacity="0.8"/><circle cx="-1.86" cy="0.31" r="0.53" fill="#fff" fill-opacity="0.8"/></g><g transform="translate(607.2 197.1) rotate(-3.28)"><rect x="-1.2" y="-4.8" width="2.4" height="1.6" fill="#73392e"/><circle r="4" fill="#a05040"/><path d="M-3.82 0.09L0.09 -3.82M-3.16 1.92L1.92 -3.16M-1.92 3.16L3.16 -1.92M-0.09 3.82L3.82 -0.09" stroke="#fdf6ee" stroke-opacity="0.85" stroke-width="0.55"/></g><g transform="translate(597.9 199.8) rotate(34.95)"><rect x="-1.08" y="-4.32" width="2.16" height="1.44" fill="#ab8677"/><circle r="3.6" fill="#eebba6"/></g><g transform="translate(617 202) rotate(24.66)"><rect x="-1.2" y="-4.8" width="2.4" height="1.6" fill="#849ea7"/><circle r="4" fill="#b8dce8"/></g><g transform="translate(585 205) rotate(33.32)"><rect x="-1.2" y="-4.8" width="2.4" height="1.6" fill="#9c6a48"/><circle r="4" fill="#f2e2cc"/><path d="M-3.73 -1.44L3.73 -1.44L4 0L3.73 1.44L-3.73 1.44L-4 0Z" fill="#f8efe0"/><g fill="#9a6a4a"><circle cx="-2.4" cy="-0.6" r="0.28"/><circle cx="-0.8" cy="-0.6" r="0.28"/><circle cx="0.8" cy="-0.6" r="0.28"/><circle cx="2.4" cy="-0.6" r="0.28"/><circle cx="-1.6" cy="0.68" r="0.28"/><circle cx="0" cy="0.68" r="0.28"/><circle cx="1.6" cy="0.68" r="0.28"/></g></g><g transform="translate(584.1 213.4) rotate(-3.25)"><rect x="-1.08" y="-4.32" width="2.16" height="1.44" fill="#af9067"/><circle r="3.6" fill="#f4c890"/></g><g transform="translate(591.7 211.6) rotate(-0.83)"><rect x="-0.81" y="-3.24" width="1.62" height="1.08" fill="#849ea7"/><circle r="2.7" fill="#b8dce8"/></g><g transform="translate(595.2 207.2) rotate(16.07)"><rect x="-0.66" y="-2.64" width="1.32" height="0.88" fill="#633529"/><circle r="2.2" fill="#8a4a3a"/></g><g transform="translate(597 217.9) rotate(-1.47)"><rect x="-1.2" y="-4.8" width="2.4" height="1.6" fill="#a49e9b"/><circle r="4" fill="#e4dcd8"/><circle cx="-1.8" cy="-1.2" r="0.68" fill="#fff" fill-opacity="0.8"/><circle cx="1.2" cy="-1.8" r="0.68" fill="#fff" fill-opacity="0.8"/><circle cx="0.2" cy="0.4" r="0.68" fill="#fff" fill-opacity="0.8"/><circle cx="-1.4" cy="2" r="0.68" fill="#fff" fill-opacity="0.8"/><circle cx="2" cy="1.2" r="0.68" fill="#fff" fill-opacity="0.8"/><circle cx="2.4" cy="-0.2" r="0.68" fill="#fff" fill-opacity="0.8"/><circle cx="-2.4" cy="0.4" r="0.68" fill="#fff" fill-opacity="0.8"/></g><g transform="translate(602.8 207.6) rotate(-14.63)"><rect x="-0.66" y="-2.64" width="1.32" height="0.88" fill="#ab8677"/><circle r="2.2" fill="#eebba6"/></g><g transform="translate(605.9 213) rotate(-6.73)"><rect x="-1.08" y="-4.32" width="2.16" height="1.44" fill="#84987e"/><circle r="3.6" fill="#b8d4b0"/><circle r="2.16" fill="none" stroke="#eef4e4" stroke-opacity="0.9" stroke-width="0.55"/><circle r="0.9" fill="none" stroke="#eef4e4" stroke-opacity="0.9" stroke-width="0.55"/></g><g transform="translate(608.6 205.4) rotate(-24.74)"><rect x="-0.93" y="-3.72" width="1.86" height="1.24" fill="#ab8677"/><circle r="3.1" fill="#eebba6"/></g><g transform="translate(616.1 212.1) rotate(-8.61)"><rect x="-1.59" y="-6.36" width="3.18" height="2.12" fill="#ab8677"/><circle r="5.3" fill="#eebba6"/></g><g transform="translate(588.5 218.3) rotate(34.19)"><rect x="-0.81" y="-3.24" width="1.62" height="1.08" fill="#73392e"/><circle r="2.7" fill="#a05040"/><path d="M-2.58 0.06L0.06 -2.58M-2.13 1.29L1.29 -2.13M-1.29 2.13L2.13 -1.29M-0.06 2.58L2.58 -0.06" stroke="#fdf6ee" stroke-opacity="0.85" stroke-width="0.55"/></g><g transform="translate(581.9 222.3) rotate(32.19)"><rect x="-1.2" y="-4.8" width="2.4" height="1.6" fill="#ac8a7e"/><circle r="4" fill="#f0c0b0"/></g><g transform="translate(605.9 222.3) rotate(8.89)"><rect x="-1.2" y="-4.8" width="2.4" height="1.6" fill="#9c6a48"/><circle r="4" fill="#f0d8c0"/><path d="M-3.73 -1.44L3.73 -1.44L4 0L3.73 1.44L-3.73 1.44L-4 0Z" fill="#f8efe0"/><g fill="#9a6a4a"><circle cx="-2.4" cy="-0.6" r="0.28"/><circle cx="-0.8" cy="-0.6" r="0.28"/><circle cx="0.8" cy="-0.6" r="0.28"/><circle cx="2.4" cy="-0.6" r="0.28"/><circle cx="-1.6" cy="0.68" r="0.28"/><circle cx="0" cy="0.68" r="0.28"/><circle cx="1.6" cy="0.68" r="0.28"/></g></g><g transform="translate(614.3 225) rotate(-0.05)"><rect x="-1.08" y="-4.32" width="2.16" height="1.44" fill="#84987e"/><circle r="3.6" fill="#b8d4b0"/><circle r="2.16" fill="none" stroke="#eef4e4" stroke-opacity="0.9" stroke-width="0.55"/><circle r="0.9" fill="none" stroke="#eef4e4" stroke-opacity="0.9" stroke-width="0.55"/></g><g transform="translate(590.8 229) rotate(-11.31)"><rect x="-1.47" y="-5.88" width="2.94" height="1.96" fill="#ac8170"/><circle r="4.9" fill="#f0b49c"/></g><g transform="translate(599.7 228.1) rotate(-28.76)"><rect x="-1.08" y="-4.32" width="2.16" height="1.44" fill="#849ea7"/><circle r="3.6" fill="#b8dce8"/></g><g transform="translate(606.8 231.2) rotate(-15.94)"><rect x="-0.93" y="-3.72" width="1.86" height="1.24" fill="#af9067"/><circle r="3.1" fill="#f4c890"/></g><g transform="translate(597.4 233.9) rotate(19.74)"><rect x="-0.93" y="-3.72" width="1.86" height="1.24" fill="#84987e"/><circle r="3.1" fill="#b8d4b0"/></g><g transform="translate(614.8 233) rotate(25.72)"><rect x="-0.93" y="-3.72" width="1.86" height="1.24" fill="#a49e9b"/><circle r="3.1" fill="#e4dcd8"/><circle cx="-1.4" cy="-0.93" r="0.53" fill="#fff" fill-opacity="0.8"/><circle cx="0.93" cy="-1.4" r="0.53" fill="#fff" fill-opacity="0.8"/><circle cx="0.16" cy="0.31" r="0.53" fill="#fff" fill-opacity="0.8"/><circle cx="-1.08" cy="1.55" r="0.53" fill="#fff" fill-opacity="0.8"/><circle cx="1.55" cy="0.93" r="0.53" fill="#fff" fill-opacity="0.8"/><circle cx="1.86" cy="-0.16" r="0.53" fill="#fff" fill-opacity="0.8"/><circle cx="-1.86" cy="0.31" r="0.53" fill="#fff" fill-opacity="0.8"/></g><g transform="translate(626.2 122.6) rotate(-9.71)"><rect x="-1.2" y="-4.8" width="2.4" height="1.6" fill="#9c6a48"/><circle r="4" fill="#f2e2cc"/><path d="M-3.73 -1.44L3.73 -1.44L4 0L3.73 1.44L-3.73 1.44L-4 0Z" fill="#f8efe0"/><g fill="#9a6a4a"><circle cx="-2.4" cy="-0.6" r="0.28"/><circle cx="-0.8" cy="-0.6" r="0.28"/><circle cx="0.8" cy="-0.6" r="0.28"/><circle cx="2.4" cy="-0.6" r="0.28"/><circle cx="-1.6" cy="0.68" r="0.28"/><circle cx="0" cy="0.68" r="0.28"/><circle cx="1.6" cy="0.68" r="0.28"/></g></g><g transform="translate(625.3 131) rotate(20.02)"><rect x="-1.08" y="-4.32" width="2.16" height="1.44" fill="#af9067"/><circle r="3.6" fill="#f4c890"/></g><g transform="translate(623.1 139.9) rotate(19.24)"><rect x="-1.2" y="-4.8" width="2.4" height="1.6" fill="#ac8a7e"/><circle r="4" fill="#f0c0b0"/></g><g transform="translate(621.7 152.4) rotate(13.62)"><rect x="-1.2" y="-4.8" width="2.4" height="1.6" fill="#84987e"/><circle r="4" fill="#b8d4b0"/><circle r="2.4" fill="none" stroke="#eef4e4" stroke-opacity="0.9" stroke-width="0.55"/><circle r="1" fill="none" stroke="#eef4e4" stroke-opacity="0.9" stroke-width="0.55"/></g><g transform="translate(626.2 163.8) rotate(11.48)"><rect x="-1.2" y="-4.8" width="2.4" height="1.6" fill="#9c6a48"/><circle r="4" fill="#f2e2cc"/><path d="M-3.73 -1.44L3.73 -1.44L4 0L3.73 1.44L-3.73 1.44L-4 0Z" fill="#f8efe0"/><g fill="#9a6a4a"><circle cx="-2.4" cy="-0.6" r="0.28"/><circle cx="-0.8" cy="-0.6" r="0.28"/><circle cx="0.8" cy="-0.6" r="0.28"/><circle cx="2.4" cy="-0.6" r="0.28"/><circle cx="-1.6" cy="0.68" r="0.28"/><circle cx="0" cy="0.68" r="0.28"/><circle cx="1.6" cy="0.68" r="0.28"/></g></g><g transform="translate(625.3 172.2) rotate(18.17)"><rect x="-1.08" y="-4.32" width="2.16" height="1.44" fill="#af9067"/><circle r="3.6" fill="#f4c890"/></g><g transform="translate(623.1 181.1) rotate(-9.56)"><rect x="-1.2" y="-4.8" width="2.4" height="1.6" fill="#ac8a7e"/><circle r="4" fill="#f0c0b0"/></g><g transform="translate(621.7 193.6) rotate(14.31)"><rect x="-1.2" y="-4.8" width="2.4" height="1.6" fill="#84987e"/><circle r="4" fill="#b8d4b0"/><circle r="2.4" fill="none" stroke="#eef4e4" stroke-opacity="0.9" stroke-width="0.55"/><circle r="1" fill="none" stroke="#eef4e4" stroke-opacity="0.9" stroke-width="0.55"/></g><g transform="translate(626.2 205) rotate(-15.34)"><rect x="-1.2" y="-4.8" width="2.4" height="1.6" fill="#9c6a48"/><circle r="4" fill="#f2e2cc"/><path d="M-3.73 -1.44L3.73 -1.44L4 0L3.73 1.44L-3.73 1.44L-4 0Z" fill="#f8efe0"/><g fill="#9a6a4a"><circle cx="-2.4" cy="-0.6" r="0.28"/><circle cx="-0.8" cy="-0.6" r="0.28"/><circle cx="0.8" cy="-0.6" r="0.28"/><circle cx="2.4" cy="-0.6" r="0.28"/><circle cx="-1.6" cy="0.68" r="0.28"/><circle cx="0" cy="0.68" r="0.28"/><circle cx="1.6" cy="0.68" r="0.28"/></g></g><g transform="translate(625.3 213.4) rotate(-1)"><rect x="-1.08" y="-4.32" width="2.16" height="1.44" fill="#af9067"/><circle r="3.6" fill="#f4c890"/></g><g transform="translate(623.1 222.3) rotate(18.88)"><rect x="-1.2" y="-4.8" width="2.4" height="1.6" fill="#ac8a7e"/><circle r="4" fill="#f0c0b0"/></g></g><g clip-path="url(#c12)"><rect x="626.2" y="122.8" width="84.1" height="105.8" fill="#b7d9de"/><g fill="#2e5e68"><circle cx="610.7" cy="122.6" r="3.1"/><circle cx="627.2" cy="122.6" r="3.1"/><circle cx="643.7" cy="122.6" r="3.1"/><circle cx="660.2" cy="122.6" r="3.1"/><circle cx="676.7" cy="122.6" r="3.1"/><circle cx="693.2" cy="122.6" r="3.1"/><circle cx="709.7" cy="122.6" r="3.1"/><circle cx="618.95" cy="130.85" r="3.1"/><circle cx="635.45" cy="130.85" r="3.1"/><circle cx="651.95" cy="130.85" r="3.1"/><circle cx="668.45" cy="130.85" r="3.1"/><circle cx="684.95" cy="130.85" r="3.1"/><circle cx="701.45" cy="130.85" r="3.1"/><circle cx="610.7" cy="139.1" r="3.1"/><circle cx="627.2" cy="139.1" r="3.1"/><circle cx="643.7" cy="139.1" r="3.1"/><circle cx="660.2" cy="139.1" r="3.1"/><circle cx="676.7" cy="139.1" r="3.1"/><circle cx="693.2" cy="139.1" r="3.1"/><circle cx="709.7" cy="139.1" r="3.1"/><circle cx="618.95" cy="147.35" r="3.1"/><circle cx="635.45" cy="147.35" r="3.1"/><circle cx="651.95" cy="147.35" r="3.1"/><circle cx="668.45" cy="147.35" r="3.1"/><circle cx="684.95" cy="147.35" r="3.1"/><circle cx="701.45" cy="147.35" r="3.1"/><circle cx="610.7" cy="155.6" r="3.1"/><circle cx="627.2" cy="155.6" r="3.1"/><circle cx="643.7" cy="155.6" r="3.1"/><circle cx="660.2" cy="155.6" r="3.1"/><circle cx="676.7" cy="155.6" r="3.1"/><circle cx="693.2" cy="155.6" r="3.1"/><circle cx="709.7" cy="155.6" r="3.1"/><circle cx="618.95" cy="163.85" r="3.1"/><circle cx="635.45" cy="163.85" r="3.1"/><circle cx="651.95" cy="163.85" r="3.1"/><circle cx="668.45" cy="163.85" r="3.1"/><circle cx="684.95" cy="163.85" r="3.1"/><circle cx="701.45" cy="163.85" r="3.1"/><circle cx="610.7" cy="172.1" r="3.1"/><circle cx="627.2" cy="172.1" r="3.1"/><circle cx="643.7" cy="172.1" r="3.1"/><circle cx="660.2" cy="172.1" r="3.1"/><circle cx="676.7" cy="172.1" r="3.1"/><circle cx="693.2" cy="172.1" r="3.1"/><circle cx="709.7" cy="172.1" r="3.1"/><circle cx="618.95" cy="180.35" r="3.1"/><circle cx="635.45" cy="180.35" r="3.1"/><circle cx="651.95" cy="180.35" r="3.1"/><circle cx="668.45" cy="180.35" r="3.1"/><circle cx="684.95" cy="180.35" r="3.1"/><circle cx="701.45" cy="180.35" r="3.1"/><circle cx="610.7" cy="188.6" r="3.1"/><circle cx="627.2" cy="188.6" r="3.1"/><circle cx="643.7" cy="188.6" r="3.1"/><circle cx="660.2" cy="188.6" r="3.1"/><circle cx="676.7" cy="188.6" r="3.1"/><circle cx="693.2" cy="188.6" r="3.1"/><circle cx="709.7" cy="188.6" r="3.1"/><circle cx="618.95" cy="196.85" r="3.1"/><circle cx="635.45" cy="196.85" r="3.1"/><circle cx="651.95" cy="196.85" r="3.1"/><circle cx="668.45" cy="196.85" r="3.1"/><circle cx="684.95" cy="196.85" r="3.1"/><circle cx="701.45" cy="196.85" r="3.1"/><circle cx="610.7" cy="205.1" r="3.1"/><circle cx="627.2" cy="205.1" r="3.1"/><circle cx="643.7" cy="205.1" r="3.1"/><circle cx="660.2" cy="205.1" r="3.1"/><circle cx="676.7" cy="205.1" r="3.1"/><circle cx="693.2" cy="205.1" r="3.1"/><circle cx="709.7" cy="205.1" r="3.1"/><circle cx="618.95" cy="213.35" r="3.1"/><circle cx="635.45" cy="213.35" r="3.1"/><circle cx="651.95" cy="213.35" r="3.1"/><circle cx="668.45" cy="213.35" r="3.1"/><circle cx="684.95" cy="213.35" r="3.1"/><circle cx="701.45" cy="213.35" r="3.1"/><circle cx="610.7" cy="221.6" r="3.1"/><circle cx="627.2" cy="221.6" r="3.1"/><circle cx="643.7" cy="221.6" r="3.1"/><circle cx="660.2" cy="221.6" r="3.1"/><circle cx="676.7" cy="221.6" r="3.1"/><circle cx="693.2" cy="221.6" r="3.1"/><circle cx="709.7" cy="221.6" r="3.1"/><circle cx="618.95" cy="229.85" r="3.1"/><circle cx="635.45" cy="229.85" r="3.1"/><circle cx="651.95" cy="229.85" r="3.1"/><circle cx="668.45" cy="229.85" r="3.1"/><circle cx="684.95" cy="229.85" r="3.1"/><circle cx="701.45" cy="229.85" r="3.1"/></g></g><g clip-path="url(#c13)"><rect x="716.6" y="122.8" width="85.5" height="105.8" fill="#375d67"/><g transform="translate(716.6 122.8) scale(1.3) translate(-285.3 -132.3)"><circle cx="777.51" cy="211.65" r="0.7" fill="#d08a6a"/><circle cx="735.26" cy="140.5" r="0.7" fill="#d08a6a"/><circle cx="773.96" cy="132.51" r="0.7" fill="#d08a6a"/><circle cx="785.55" cy="152.78" r="0.7" fill="#d08a6a"/><circle cx="754.34" cy="214.4" r="0.7" fill="#e8c890"/><circle cx="726.48" cy="177.49" r="0.7" fill="#a8d0d8"/><circle cx="779.8" cy="169.8" r="0.7" fill="#a8d0d8"/><circle cx="759.33" cy="228.08" r="0.7" fill="#e8c890"/><circle cx="781.63" cy="212.02" r="0.7" fill="#d08a6a"/><circle cx="774.84" cy="224.39" r="0.7" fill="#d08a6a"/><circle cx="762.95" cy="161.63" r="0.7" fill="#d08a6a"/><circle cx="795.66" cy="156.25" r="0.7" fill="#e8c890"/><circle cx="722.55" cy="133.05" r="0.7" fill="#e8c890"/><circle cx="767.6" cy="138.98" r="0.7" fill="#a8d0d8"/><circle cx="790.11" cy="150.99" r="0.7" fill="#e8c890"/><circle cx="740.02" cy="143.76" r="0.7" fill="#e8c890"/><circle cx="758.87" cy="139.12" r="0.7" fill="#d08a6a"/><circle cx="744.32" cy="143.74" r="0.7" fill="#e8c890"/><circle cx="799.86" cy="136.7" r="0.7" fill="#e8c890"/><circle cx="738.78" cy="176.64" r="0.7" fill="#d08a6a"/><circle cx="762.09" cy="148.47" r="0.7" fill="#e8c890"/><circle cx="728.28" cy="155.96" r="0.7" fill="#e8c890"/><circle cx="772.06" cy="164.2" r="0.7" fill="#a8d0d8"/><circle cx="751.1" cy="172.41" r="0.7" fill="#a8d0d8"/><circle cx="738.02" cy="142.43" r="0.7" fill="#e8c890"/><circle cx="787.21" cy="158.92" r="0.7" fill="#d08a6a"/><circle cx="793.99" cy="126.37" r="0.7" fill="#a8d0d8"/><circle cx="776.71" cy="169.22" r="0.7" fill="#d08a6a"/><circle cx="719.8" cy="227.46" r="0.7" fill="#e8c890"/><circle cx="751.58" cy="162.61" r="0.7" fill="#a8d0d8"/><circle cx="765.88" cy="166.13" r="0.7" fill="#a8d0d8"/><circle cx="788.27" cy="152.61" r="0.7" fill="#a8d0d8"/><circle cx="741.72" cy="158.36" r="0.7" fill="#d08a6a"/><circle cx="784.86" cy="190.63" r="0.7" fill="#d08a6a"/><circle cx="794.48" cy="220.65" r="0.7" fill="#d08a6a"/><circle cx="775.77" cy="167.16" r="0.7" fill="#e8c890"/><circle cx="750.2" cy="153.6" r="0.7" fill="#a8d0d8"/><circle cx="749.26" cy="203.23" r="0.7" fill="#a8d0d8"/><circle cx="791.1" cy="123.7" r="0.7" fill="#d08a6a"/><circle cx="757.76" cy="206.68" r="0.7" fill="#d08a6a"/><g transform="translate(288.5 123.5) rotate(19.93)"><rect x="-2.49" y="-9.96" width="4.98" height="3.32" fill="#a87d6d"/><circle r="8.3" fill="#f0b49c"/><path d="M-7.93 0.18L0.18 -7.93M-6.56 3.98L3.98 -6.56M-3.98 6.56L6.56 -3.98M-0.18 7.93L7.93 -0.18" stroke="#fdf6ee" stroke-opacity="0.85" stroke-width="1.08"/></g><g transform="translate(307.8 130.9) rotate(24.15)"><rect x="-2.49" y="-9.96" width="4.98" height="3.32" fill="#6d8562"/><circle r="8.3" fill="#9cbf8c"/><circle r="4.98" fill="none" stroke="#eef4e4" stroke-opacity="0.9" stroke-width="1.08"/><circle r="2.08" fill="none" stroke="#eef4e4" stroke-opacity="0.9" stroke-width="1.08"/></g><g transform="translate(325.4 127.2) rotate(2.07)"><rect x="-1.95" y="-7.8" width="3.9" height="2.6" fill="#97918e"/><circle r="6.5" fill="#d9d0cb"/><circle cx="-2.93" cy="-1.95" r="1.1" fill="#fff" fill-opacity="0.8"/><circle cx="1.95" cy="-2.93" r="1.1" fill="#fff" fill-opacity="0.8"/><circle cx="0.33" cy="0.65" r="1.1" fill="#fff" fill-opacity="0.8"/><circle cx="-2.27" cy="3.25" r="1.1" fill="#fff" fill-opacity="0.8"/><circle cx="3.25" cy="1.95" r="1.1" fill="#fff" fill-opacity="0.8"/><circle cx="3.9" cy="-0.33" r="1.1" fill="#fff" fill-opacity="0.8"/><circle cx="-3.9" cy="0.65" r="1.1" fill="#fff" fill-opacity="0.8"/></g><g transform="translate(340 122.5) rotate(27.95)"><rect x="-1.38" y="-5.52" width="2.76" height="1.84" fill="#aa9572"/><circle r="4.6" fill="#f4d6a4"/></g><g transform="translate(358.6 127.2) rotate(-20.09)"><rect x="-1.8" y="-7.2" width="3.6" height="2.4" fill="#80947b"/><circle r="6" fill="#b8d4b0"/></g><g transform="translate(291.2 137.5) rotate(-3.8)"><rect x="-1.95" y="-7.8" width="3.9" height="2.6" fill="#97918e"/><circle r="6.5" fill="#d9d0cb"/><circle cx="-2.93" cy="-1.95" r="1.1" fill="#fff" fill-opacity="0.8"/><circle cx="1.95" cy="-2.93" r="1.1" fill="#fff" fill-opacity="0.8"/><circle cx="0.33" cy="0.65" r="1.1" fill="#fff" fill-opacity="0.8"/><circle cx="-2.27" cy="3.25" r="1.1" fill="#fff" fill-opacity="0.8"/><circle cx="3.25" cy="1.95" r="1.1" fill="#fff" fill-opacity="0.8"/><circle cx="3.9" cy="-0.33" r="1.1" fill="#fff" fill-opacity="0.8"/><circle cx="-3.9" cy="0.65" r="1.1" fill="#fff" fill-opacity="0.8"/></g><g transform="translate(340.1 138.3) rotate(-22.71)"><rect x="-2.67" y="-10.68" width="5.34" height="3.56" fill="#633125"/><circle r="8.9" fill="#8e4636"/><path d="M-7.57 -2.67q1.33 -1.96 2.67 0t2.67 0t2.67 0t2.67 0t2.67 0M-7.57 2.23q1.33 -1.96 2.67 0t2.67 0t2.67 0t2.67 0t2.67 0" fill="none" stroke="#fbeee4" stroke-width="1.16"/></g><g transform="translate(278.3 143.8) rotate(-31.59)"><rect x="-1.95" y="-7.8" width="3.9" height="2.6" fill="#a98777"/><circle r="6.5" fill="#f2c2ab"/></g><g transform="translate(321.7 147.5) rotate(22.71)"><rect x="-2.49" y="-9.96" width="4.98" height="3.32" fill="#7f979e"/><circle r="8.3" fill="#b6d9e3"/><path d="M-7.93 0.18L0.18 -7.93M-6.56 3.98L3.98 -6.56M-3.98 6.56L6.56 -3.98M-0.18 7.93L7.93 -0.18" stroke="#fdf6ee" stroke-opacity="0.85" stroke-width="1.08"/></g><g transform="translate(358.6 143.8) rotate(-31.34)"><rect x="-1.65" y="-6.6" width="3.3" height="2.2" fill="#a98777"/><circle r="5.5" fill="#f2c2ab"/></g><g transform="translate(299.5 152.1) rotate(30.41)"><rect x="-3" y="-12" width="6" height="4" fill="#9c6a48"/><circle r="10" fill="#b87a45"/><path d="M-9.33 -3.6L9.33 -3.6L10 0L9.33 3.6L-9.33 3.6L-10 0Z" fill="#f8efe0"/><g fill="#9a6a4a"><circle cx="-6" cy="-1.5" r="0.7"/><circle cx="-2" cy="-1.5" r="0.7"/><circle cx="2" cy="-1.5" r="0.7"/><circle cx="6" cy="-1.5" r="0.7"/><circle cx="-4" cy="1.7" r="0.7"/><circle cx="0" cy="1.7" r="0.7"/><circle cx="4" cy="1.7" r="0.7"/></g></g><g transform="translate(278.3 160.4) rotate(3.97)"><rect x="-1.65" y="-6.6" width="3.3" height="2.2" fill="#633125"/><circle r="5.5" fill="#8e4636"/><path d="M-4.67 -1.65q0.82 -1.21 1.65 0t1.65 0t1.65 0t1.65 0t1.65 0M-4.67 1.38q0.82 -1.21 1.65 0t1.65 0t1.65 0t1.65 0t1.65 0" fill="none" stroke="#fbeee4" stroke-width="0.72"/></g><g transform="translate(336 156) rotate(14.05)"><rect x="-1.65" y="-6.6" width="3.3" height="2.2" fill="#a89863"/><circle r="5.5" fill="#f0da8e"/></g><g transform="translate(340.1 166) rotate(-31.53)"><rect x="-3.3" y="-13.2" width="6.6" height="4.4" fill="#839160"/><circle r="11" fill="#bcd08a"/><circle cx="-3.85" cy="-4.4" r="4.18" fill="#e4e49a" fill-opacity="0.9"/><circle cx="4.4" cy="-2.2" r="3.3" fill="#e4e49a" fill-opacity="0.9"/><circle cx="-1.1" cy="3.85" r="4.62" fill="#e4e49a" fill-opacity="0.9"/><circle cx="5.5" cy="4.95" r="2.75" fill="#e4e49a" fill-opacity="0.9"/><circle cx="-6.6" cy="2.2" r="2.42" fill="#e4e49a" fill-opacity="0.9"/></g><g transform="translate(320.7 168.7) rotate(28.51)"><rect x="-2.76" y="-11.04" width="5.52" height="3.68" fill="#a87d6d"/><circle r="9.2" fill="#f0b49c"/><path d="M-8.79 0.2L0.2 -8.79M-7.27 4.41L4.41 -7.27M-4.41 7.27L7.27 -4.41M-0.2 8.79L8.79 -0.2" stroke="#fdf6ee" stroke-opacity="0.85" stroke-width="1.2"/></g><g transform="translate(302.3 171.5) rotate(20.56)"><rect x="-2.1" y="-8.4" width="4.2" height="2.8" fill="#aa8c64"/><circle r="7" fill="#f4c890"/><path d="M-6.69 0.15L0.15 -6.69M-5.53 3.35L3.35 -5.53M-3.35 5.53L5.53 -3.35M-0.15 6.69L6.69 -0.15" stroke="#fdf6ee" stroke-opacity="0.85" stroke-width="0.91"/></g><g transform="translate(286.6 167.8) rotate(-27.73)"><rect x="-1.38" y="-5.52" width="2.76" height="1.84" fill="#7f979e"/><circle r="4.6" fill="#b6d9e3"/></g><g transform="translate(278.3 178.9) rotate(-22.2)"><rect x="-2.22" y="-8.88" width="4.44" height="2.96" fill="#97918e"/><circle r="7.4" fill="#d9d0cb"/><circle cx="-3.33" cy="-2.22" r="1.26" fill="#fff" fill-opacity="0.8"/><circle cx="2.22" cy="-3.33" r="1.26" fill="#fff" fill-opacity="0.8"/><circle cx="0.37" cy="0.74" r="1.26" fill="#fff" fill-opacity="0.8"/><circle cx="-2.59" cy="3.7" r="1.26" fill="#fff" fill-opacity="0.8"/><circle cx="3.7" cy="2.22" r="1.26" fill="#fff" fill-opacity="0.8"/><circle cx="4.44" cy="-0.37" r="1.26" fill="#fff" fill-opacity="0.8"/><circle cx="-4.44" cy="0.74" r="1.26" fill="#fff" fill-opacity="0.8"/></g><g transform="translate(293 182.6) rotate(-25.14)"><rect x="-1.95" y="-7.8" width="3.9" height="2.6" fill="#633125"/><circle r="6.5" fill="#8e4636"/><path d="M-5.52 -1.95q0.97 -1.43 1.95 0t1.95 0t1.95 0t1.95 0t1.95 0M-5.52 1.62q0.97 -1.43 1.95 0t1.95 0t1.95 0t1.95 0t1.95 0" fill="none" stroke="#fbeee4" stroke-width="0.84"/></g><g transform="translate(306 189) rotate(0.28)"><rect x="-2.49" y="-9.96" width="4.98" height="3.32" fill="#a98777"/><circle r="8.3" fill="#f2c2ab"/></g><g transform="translate(342 188.1) rotate(-29.49)"><rect x="-2.67" y="-10.68" width="5.34" height="3.56" fill="#9c6a48"/><circle r="8.9" fill="#b87a45"/><path d="M-8.3 -3.2L8.3 -3.2L8.9 0L8.3 3.2L-8.3 3.2L-8.9 0Z" fill="#f8efe0"/><g fill="#9a6a4a"><circle cx="-5.34" cy="-1.33" r="0.62"/><circle cx="-1.78" cy="-1.33" r="0.62"/><circle cx="1.78" cy="-1.33" r="0.62"/><circle cx="5.34" cy="-1.33" r="0.62"/><circle cx="-3.56" cy="1.51" r="0.62"/><circle cx="0" cy="1.51" r="0.62"/><circle cx="3.56" cy="1.51" r="0.62"/></g></g><g transform="translate(358.6 177) rotate(20.89)"><rect x="-1.95" y="-7.8" width="3.9" height="2.6" fill="#97918e"/><circle r="6.5" fill="#d9d0cb"/><circle cx="-2.93" cy="-1.95" r="1.1" fill="#fff" fill-opacity="0.8"/><circle cx="1.95" cy="-2.93" r="1.1" fill="#fff" fill-opacity="0.8"/><circle cx="0.33" cy="0.65" r="1.1" fill="#fff" fill-opacity="0.8"/><circle cx="-2.27" cy="3.25" r="1.1" fill="#fff" fill-opacity="0.8"/><circle cx="3.25" cy="1.95" r="1.1" fill="#fff" fill-opacity="0.8"/><circle cx="3.9" cy="-0.33" r="1.1" fill="#fff" fill-opacity="0.8"/><circle cx="-3.9" cy="0.65" r="1.1" fill="#fff" fill-opacity="0.8"/></g><g transform="translate(326.3 195.5) rotate(-0.25)"><rect x="-2.22" y="-8.88" width="4.44" height="2.96" fill="#6d8562"/><circle r="7.4" fill="#9cbf8c"/><circle r="4.44" fill="none" stroke="#eef4e4" stroke-opacity="0.9" stroke-width="0.96"/><circle r="1.85" fill="none" stroke="#eef4e4" stroke-opacity="0.9" stroke-width="0.96"/></g><g transform="translate(288.5 202) rotate(14.29)"><rect x="-3" y="-12" width="6" height="4" fill="#a87d6d"/><circle r="10" fill="#f0b49c"/><path d="M-9.55 0.22L0.22 -9.55M-7.9 4.79L4.79 -7.9M-4.79 7.9L7.9 -4.79M-0.22 9.55L9.55 -0.22" stroke="#fdf6ee" stroke-opacity="0.85" stroke-width="1.3"/></g><g transform="translate(354.9 201) rotate(-17.18)"><rect x="-2.1" y="-8.4" width="4.2" height="2.8" fill="#7f979e"/><circle r="7" fill="#b6d9e3"/><path d="M-6.69 0.15L0.15 -6.69M-5.53 3.35L3.35 -5.53M-3.35 5.53L5.53 -3.35M-0.15 6.69L6.69 -0.15" stroke="#fdf6ee" stroke-opacity="0.85" stroke-width="0.91"/></g><g transform="translate(308.7 214) rotate(10.78)"><rect x="-2.76" y="-11.04" width="5.52" height="3.68" fill="#6d8562"/><circle r="9.2" fill="#9cbf8c"/><circle r="5.52" fill="none" stroke="#eef4e4" stroke-opacity="0.9" stroke-width="1.2"/><circle r="2.3" fill="none" stroke="#eef4e4" stroke-opacity="0.9" stroke-width="1.2"/></g><g transform="translate(325.4 211.2) rotate(-3.25)"><rect x="-2.22" y="-8.88" width="4.44" height="2.96" fill="#97918e"/><circle r="7.4" fill="#d9d0cb"/><circle cx="-3.33" cy="-2.22" r="1.26" fill="#fff" fill-opacity="0.8"/><circle cx="2.22" cy="-3.33" r="1.26" fill="#fff" fill-opacity="0.8"/><circle cx="0.37" cy="0.74" r="1.26" fill="#fff" fill-opacity="0.8"/><circle cx="-2.59" cy="3.7" r="1.26" fill="#fff" fill-opacity="0.8"/><circle cx="3.7" cy="2.22" r="1.26" fill="#fff" fill-opacity="0.8"/><circle cx="4.44" cy="-0.37" r="1.26" fill="#fff" fill-opacity="0.8"/><circle cx="-4.44" cy="0.74" r="1.26" fill="#fff" fill-opacity="0.8"/></g><g transform="translate(340.1 206.6) rotate(10.39)"><rect x="-1.65" y="-6.6" width="3.3" height="2.2" fill="#aa8c64"/><circle r="5.5" fill="#f4c890"/></g><g transform="translate(340.1 221.3) rotate(-6.25)"><rect x="-2.22" y="-8.88" width="4.44" height="2.96" fill="#633125"/><circle r="7.4" fill="#8e4636"/><path d="M-6.29 -2.22q1.11 -1.63 2.22 0t2.22 0t2.22 0t2.22 0t2.22 0M-6.29 1.85q1.11 -1.63 2.22 0t2.22 0t2.22 0t2.22 0t2.22 0" fill="none" stroke="#fbeee4" stroke-width="0.96"/></g><g transform="translate(291.2 219.5) rotate(34.28)"><rect x="-1.65" y="-6.6" width="3.3" height="2.2" fill="#97918e"/><circle r="5.5" fill="#d9d0cb"/><circle cx="-2.48" cy="-1.65" r="0.94" fill="#fff" fill-opacity="0.8"/><circle cx="1.65" cy="-2.48" r="0.94" fill="#fff" fill-opacity="0.8"/><circle cx="0.28" cy="0.55" r="0.94" fill="#fff" fill-opacity="0.8"/><circle cx="-1.92" cy="2.75" r="0.94" fill="#fff" fill-opacity="0.8"/><circle cx="2.75" cy="1.65" r="0.94" fill="#fff" fill-opacity="0.8"/><circle cx="3.3" cy="-0.28" r="0.94" fill="#fff" fill-opacity="0.8"/><circle cx="-3.3" cy="0.55" r="0.94" fill="#fff" fill-opacity="0.8"/></g><g transform="translate(356.7 214) rotate(24.24)"><rect x="-1.38" y="-5.52" width="2.76" height="1.84" fill="#80947b"/><circle r="4.6" fill="#b8d4b0"/></g><g transform="translate(280 226) rotate(23.29)"><rect x="-1.5" y="-6" width="3" height="2" fill="#80947b"/><circle r="5" fill="#b8d4b0"/></g><g transform="translate(320 228) rotate(-11.11)"><rect x="-1.5" y="-6" width="3" height="2" fill="#7f979e"/><circle r="5" fill="#b6d9e3"/></g></g></g><g clip-path="url(#c14)"><rect x="803.3" y="122.8" width="84.5" height="105.8" rx="0" fill="#687a58"/><g fill="#c9d6b0"><circle cx="819.7" cy="125" r="1.9"/><circle cx="852.1" cy="126" r="1.9"/><circle cx="862.4" cy="131.4" r="1.9"/><circle cx="881.2" cy="128.3" r="1.9"/><circle cx="842.5" cy="134.9" r="1.9"/><circle cx="876" cy="139.1" r="1.9"/><circle cx="819.2" cy="144.3" r="1.9"/><circle cx="843.9" cy="154.9" r="1.9"/><circle cx="858.5" cy="152.5" r="1.9"/><circle cx="880.8" cy="160.3" r="1.9"/><circle cx="814.3" cy="165" r="1.9"/><circle cx="831" cy="170.1" r="1.9"/><circle cx="864.8" cy="163.8" r="1.9"/><circle cx="846.2" cy="177.2" r="1.9"/><circle cx="808.5" cy="181.4" r="1.9"/><circle cx="868.1" cy="186.5" r="1.9"/><circle cx="820.9" cy="193.1" r="1.9"/><circle cx="845.8" cy="194.3" r="1.9"/><circle cx="834.3" cy="203" r="1.9"/><circle cx="859.9" cy="202" r="1.9"/><circle cx="879.8" cy="203" r="1.9"/><circle cx="819.7" cy="210.5" r="1.9"/><circle cx="851.9" cy="211.9" r="1.9"/><circle cx="862.7" cy="217" r="1.9"/><circle cx="880" cy="214.2" r="1.9"/><circle cx="842" cy="220.6" r="1.9"/><circle cx="875.6" cy="224.1" r="1.9"/><circle cx="806" cy="128" r="1.9"/><circle cx="806" cy="207" r="1.9"/></g></g><g fill="#8c9c78"><circle cx="819.7" cy="125" r="0.7"/><circle cx="852.1" cy="126" r="0.7"/><circle cx="862.4" cy="131.4" r="0.7"/><circle cx="881.2" cy="128.3" r="0.7"/><circle cx="842.5" cy="134.9" r="0.7"/><circle cx="876" cy="139.1" r="0.7"/><circle cx="819.2" cy="144.3" r="0.7"/><circle cx="843.9" cy="154.9" r="0.7"/><circle cx="858.5" cy="152.5" r="0.7"/><circle cx="880.8" cy="160.3" r="0.7"/><circle cx="814.3" cy="165" r="0.7"/><circle cx="831" cy="170.1" r="0.7"/><circle cx="864.8" cy="163.8" r="0.7"/><circle cx="846.2" cy="177.2" r="0.7"/><circle cx="808.5" cy="181.4" r="0.7"/><circle cx="868.1" cy="186.5" r="0.7"/><circle cx="820.9" cy="193.1" r="0.7"/><circle cx="845.8" cy="194.3" r="0.7"/><circle cx="834.3" cy="203" r="0.7"/><circle cx="859.9" cy="202" r="0.7"/><circle cx="879.8" cy="203" r="0.7"/><circle cx="819.7" cy="210.5" r="0.7"/><circle cx="851.9" cy="211.9" r="0.7"/><circle cx="862.7" cy="217" r="0.7"/><circle cx="880" cy="214.2" r="0.7"/><circle cx="842" cy="220.6" r="0.7"/><circle cx="875.6" cy="224.1" r="0.7"/><circle cx="806" cy="128" r="0.7"/><circle cx="806" cy="207" r="0.7"/></g><rect x="535.6" y="122.4" width="352" height="106" fill="none" stroke="#8a8a8a" stroke-width="1.1"/><rect x="531.7" y="118.7" width="6.6" height="6.6" fill="#fff" stroke="#858585" stroke-width="1.3"/><rect x="884.3" y="118.7" width="6.6" height="6.6" fill="#fff" stroke="#858585" stroke-width="1.3"/><rect x="531.7" y="225.2" width="6.6" height="6.6" fill="#fff" stroke="#858585" stroke-width="1.3"/><rect x="884.3" y="225.2" width="6.6" height="6.6" fill="#fff" stroke="#858585" stroke-width="1.3"/><path d="M696 175.9H727.6M711.6 160V191.5" stroke="#7d8f90" stroke-opacity="0.55" stroke-width="0.9"/><rect x="676.7" y="99.3" width="70" height="12.4" rx="3" fill="#1f1f1f"/><text x="711.7" y="108.6" font-size="8.6" fill="#ffffff" textLength="53" lengthAdjust="spacingAndGlyphs" text-anchor="middle">6.25  in x 1.9  in</text><rect x="41.5" y="30" width="970.5" height="31.5" fill="#ffffff"/><rect x="41.5" y="60.6" width="958.5" height="1.3" fill="#c9c9c9"/><path d="M56 45.2L53.4 47.6L56 50M53.8 47.6H60.6C62.8 47.6 64 48.8 64 50.2C64 51.6 62.8 52.4 61.2 52.4H57.6" fill="none" stroke="#333333" stroke-width="1.2"/><path d="M84.6 45.2L87.2 47.6L84.6 50M86.8 47.6H80C77.8 47.6 76.6 48.8 76.6 50.2C76.6 51.6 77.8 52.4 79.4 52.4H83" fill="none" stroke="#cfcfcf" stroke-width="1.2"/><rect x="98.35" y="35.5" width="0.9" height="21" fill="#dedede"/><rect x="186.25" y="35.5" width="0.9" height="21" fill="#dedede"/><rect x="259.25" y="35.5" width="0.9" height="21" fill="#dedede"/><rect x="354.25" y="35.5" width="0.9" height="21" fill="#dedede"/><rect x="390.75" y="35.5" width="0.9" height="21" fill="#dedede"/><rect x="429.25" y="35.5" width="0.9" height="21" fill="#dedede"/><rect x="544.55" y="35.5" width="0.9" height="21" fill="#dedede"/><rect x="615.35" y="35.5" width="0.9" height="21" fill="#dedede"/><text x="108.8" y="40.8" font-size="6.3" fill="#5c5c5c" textLength="29.5" lengthAdjust="spacingAndGlyphs">Operation</text><rect x="108.6" y="45.3" width="54.4" height="10.4" fill="#fff" stroke="#d3d3d3" stroke-width="0.8"/><text x="112.2" y="53.1" font-size="6.5" fill="#3a3a3a" textLength="42" lengthAdjust="spacingAndGlyphs">Print Then Cut</text><path d="M155.6 48.6H159.8L157.7 52.2Z" fill="#222"/><rect x="166.4" y="45.5" width="11.2" height="10.2" fill="#fff" stroke="#d3d3d3" stroke-width="0.8"/><text x="172" y="53" font-size="6.3" fill="#444" text-anchor="middle">?</text><text x="196.7" y="40.8" font-size="6.3" fill="#5c5c5c" textLength="27.3" lengthAdjust="spacingAndGlyphs">Select All</text><circle cx="210.6" cy="50.6" r="5" fill="none" stroke="#333333" stroke-width="1.1" stroke-dasharray="1.6 1.3"/><g fill="#333333"><circle cx="208.4" cy="49" r="0.85"/><circle cx="211.8" cy="49" r="0.85"/><circle cx="208.4" cy="52.4" r="0.85"/></g><path d="M211 51.4L213.6 54.2L212.2 54.2L212 55.4Z" fill="#333333"/><text x="235.8" y="40.8" font-size="6.3" fill="#5c5c5c" textLength="11" lengthAdjust="spacingAndGlyphs">Edit</text><path d="M234.6 55.4L235.4 52.6L242.2 45.8L244.2 47.8L237.4 54.6Z" fill="none" stroke="#333333" stroke-width="1" stroke-linejoin="round"/><path d="M246.3 49.7H250.5L248.4 52.7Z" fill="#222"/><text x="270.5" y="40.8" font-size="6.3" fill="#5c5c5c" textLength="14.5" lengthAdjust="spacingAndGlyphs">Align</text><path d="M271.4 47V55" stroke="#333333" stroke-width="1.1"/><rect x="273.4" y="48.6" width="6.4" height="4.2" rx="1.6" fill="none" stroke="#333333" stroke-width="1"/><path d="M282.5 49.7H286.7L284.6 52.7Z" fill="#222"/><text x="295.8" y="40.8" font-size="6.3" fill="#5c5c5c" textLength="22.2" lengthAdjust="spacingAndGlyphs">Arrange</text><rect x="297.4" y="46.6" width="5" height="5" rx="1" fill="none" stroke="#333333" stroke-width="1"/><rect x="301.2" y="50.2" width="5" height="5" rx="1" fill="#fff" stroke="#333333" stroke-width="1"/><path d="M308.9 49.7H313.1L311 52.7Z" fill="#222"/><text x="330.8" y="40.8" font-size="6.3" fill="#5c5c5c" textLength="10.9" lengthAdjust="spacingAndGlyphs">Flip</text><path d="M334.6 45.6L330.4 55.4H334.6ZM335.8 45.6L340 55.4H335.8Z" fill="none" stroke="#333333" stroke-width="1.1" stroke-linejoin="round"/><path d="M341.5 49.7H345.7L343.6 52.7Z" fill="#222"/><text x="363.7" y="40.8" font-size="6.3" fill="#5c5c5c" textLength="17.6" lengthAdjust="spacingAndGlyphs">Offset</text><circle cx="370.4" cy="51.2" r="3" fill="none" stroke="#333333" stroke-width="1"/><path d="M370.4 45.6L375.8 49.6L374 55.6H366.8L365 49.6Z" fill="none" stroke="#333333" stroke-width="1" stroke-dasharray="1.4 1.2"/><path d="M377.5 49.7H381.7L379.6 52.7Z" fill="#222"/><text x="402.5" y="40.8" font-size="6.3" fill="#c8c8c8" textLength="15" lengthAdjust="spacingAndGlyphs">Warp</text><path d="M403 47.2H417M403 54H417M404 47.2V54M408.6 47.2V54M413 47.2V54M416.4 47.2V54" fill="none" stroke="#c8c8c8" stroke-width="1"/><path d="M418.4 49.5H422.6L420.5 52.5Z" fill="#c8c8c8"/><text x="439.2" y="40.8" font-size="6.3" fill="#5c5c5c" textLength="11.6" lengthAdjust="spacingAndGlyphs">Size</text><text x="439.2" y="52.8" font-size="6.6" fill="#555">W</text><rect x="448.3" y="44.8" width="35" height="10.4" rx="1" fill="#fff" stroke="#d6d6d6" stroke-width="0.8"/><text x="451.9" y="52.6" font-size="6.6" fill="#555">6.247</text><path d="M475.3 44.8V55.2" stroke="#e3e3e3" stroke-width="0.8"/><path d="M477.5 49L479.7 46L481.9 49ZM477.5 51L479.7 54L481.9 51Z" fill="#333"/><path d="M484.5 44V42.2H489M499 42.2H503.5V44" fill="none" stroke="#bcbcbc" stroke-width="0.7"/><rect x="490.6" y="40.2" width="7" height="5.2" rx="0.8" fill="none" stroke="#333333" stroke-width="1.1"/><path d="M491.8 40.2V38.8C491.8 36 496.4 36 496.4 38.8V40.2" fill="none" stroke="#333333" stroke-width="1.1"/><text x="493.3" y="52.8" font-size="6.6" fill="#555">H</text><rect x="501.3" y="44.8" width="35" height="10.4" rx="1" fill="#fff" stroke="#d6d6d6" stroke-width="0.8"/><text x="504.9" y="52.6" font-size="6.6" fill="#555">1.9</text><path d="M528.3 44.8V55.2" stroke="#e3e3e3" stroke-width="0.8"/><path d="M530.5 49L532.7 46L534.9 49ZM530.5 51L532.7 54L534.9 51Z" fill="#333"/><text x="555.5" y="40.8" font-size="6.3" fill="#5c5c5c" textLength="18.5" lengthAdjust="spacingAndGlyphs">Rotate</text><path d="M557.4 49C558 46.6 560 45.2 562 45.2C563.8 45.2 565.2 46 566 47.4M566.6 52.6C566 55 564 56.4 562 56.4C560.2 56.4 558.8 55.6 558 54.2" fill="none" stroke="#333333" stroke-width="1.2"/><path d="M566.8 45V48.2H563.6ZM557.2 56.6V53.4H560.4Z" fill="#333333"/><rect x="570.8" y="44.8" width="35.9" height="10.4" rx="1" fill="#fff" stroke="#d6d6d6" stroke-width="0.8"/><text x="574.4" y="52.6" font-size="6.6" fill="#555">0</text><path d="M598.7 44.8V55.2" stroke="#e3e3e3" stroke-width="0.8"/><path d="M600.9 49L603.1 46L605.3 49ZM600.9 51L603.1 54L605.3 51Z" fill="#333"/><text x="625.8" y="40.8" font-size="6.3" fill="#5c5c5c" textLength="22.9" lengthAdjust="spacingAndGlyphs">Position</text><text x="625.8" y="52.8" font-size="6.6" fill="#555">X</text><rect x="633" y="44.8" width="35" height="10.4" rx="1" fill="#fff" stroke="#d6d6d6" stroke-width="0.8"/><text x="636.6" y="52.6" font-size="6.6" fill="#555">8.506</text><path d="M660 44.8V55.2" stroke="#e3e3e3" stroke-width="0.8"/><path d="M662.2 49L664.4 46L666.6 49ZM662.2 51L664.4 54L666.6 51Z" fill="#333"/><text x="675" y="52.8" font-size="6.6" fill="#555">Y</text><rect x="682.2" y="44.8" width="34.5" height="10.4" rx="1" fill="#fff" stroke="#d6d6d6" stroke-width="0.8"/><text x="685.8" y="52.6" font-size="6.6" fill="#555">0.822</text><path d="M708.7 44.8V55.2" stroke="#e3e3e3" stroke-width="0.8"/><path d="M710.9 49L713.1 46L715.3 49ZM710.9 51L713.1 54L715.3 51Z" fill="#333"/><rect x="0" y="0" width="1200" height="30" fill="#3f444a"/><path d="M12 10.5H27.2M12 14.5H27.2M12 18.5H27.2" stroke="#f2f2f2" stroke-width="1.4"/><text x="41.7" y="18.7" font-size="10.5" fill="#f4f4f4" textLength="34.3" lengthAdjust="spacingAndGlyphs" stroke="#f4f4f4" stroke-width="0.3">Canvas</text><text x="374" y="19.1" font-size="11.6" fill="#f4f4f4" textLength="245" lengthAdjust="spacingAndGlyphs" stroke="#f4f4f4" stroke-width="0.3">Mim-Jenkinson-Craft-with-Sarah-Christmas-Stickers*</text><path d="M921.6 18.4C923.4 17 923.4 14.2 923.4 12C923.4 9 925.2 7.4 927.4 7.4C929.6 7.4 931.4 9 931.4 12C931.4 14.2 931.4 17 933.2 18.4Z" fill="none" stroke="#eeeeee" stroke-width="1.2" stroke-linejoin="round"/><path d="M925.6 20.4H929.2" stroke="#eeeeee" stroke-width="1.2"/><circle cx="928.3" cy="7" r="5.6" fill="#e4561f" stroke="#3f444a" stroke-width="0.8"/><text x="928.3" y="9.2" font-size="6" fill="#ffffff" font-weight="bold" text-anchor="middle">14</text><text x="942" y="19.4" font-size="11.4" fill="#f4f4f4" textLength="38.5" lengthAdjust="spacingAndGlyphs" stroke="#f4f4f4" stroke-width="0.3">My Stuff</text><text x="988" y="19.4" font-size="11.4" fill="#f4f4f4" textLength="22.5" lengthAdjust="spacingAndGlyphs" stroke="#f4f4f4" stroke-width="0.3">Save</text><rect x="1026.6" y="10.5" width="1" height="9" fill="#b5b5b5"/><text x="1043" y="19.4" font-size="11.4" fill="#f4f4f4" textLength="28" lengthAdjust="spacingAndGlyphs" stroke="#f4f4f4" stroke-width="0.3">Maker</text><path d="M1078.4 12.6L1082.6 16.8L1086.8 12.6" fill="none" stroke="#f0f0f0" stroke-width="1.3"/><rect x="1109.5" y="4.5" width="82.5" height="20" rx="10" fill="#04775a"/><text x="1151" y="17.6" font-size="7.8" fill="#ffffff" textLength="25" lengthAdjust="spacingAndGlyphs" font-weight="bold" text-anchor="middle">Make It</text><rect x="0" y="30" width="41.5" height="588" fill="#cbcbcb"/><rect x="40.6" y="30" width="1.2" height="588" fill="#e9e9e9"/><circle cx="19.4" cy="44.6" r="6.3" fill="none" stroke="#333333" stroke-width="1.2"/><path d="M19.4 41.2V48M16 44.6H22.8" stroke="#333333" stroke-width="1.2"/><text x="19.6" y="62" font-size="6.1" fill="#4a4a4a" textLength="11" lengthAdjust="spacingAndGlyphs" text-anchor="middle">New</text><path d="M16.2 82.2L13.2 84V87.6L15 88.2V93.2H23.8V88.2L25.6 87.6V84L22.6 82.2C21.8 83.4 17 83.4 16.2 82.2Z" fill="none" stroke="#333333" stroke-width="1.1" stroke-linejoin="round"/><path d="M17.6 86.8H21.2M17.6 89.4H21.2" stroke="#333333" stroke-width="0.8"/><text x="19.8" y="106.2" font-size="6.1" fill="#4a4a4a" textLength="30" lengthAdjust="spacingAndGlyphs" text-anchor="middle">Templates</text><rect x="14.6" y="127" width="9.6" height="11.6" rx="1.4" fill="none" stroke="#333333" stroke-width="1.1"/><circle cx="19.4" cy="132" r="1.8" fill="none" stroke="#333333" stroke-width="0.9"/><path d="M17 135.8H21.8M17.5 126.3L21.8 125.3" stroke="#333333" stroke-width="0.9"/><text x="19.6" y="149.2" font-size="6.1" fill="#4a4a4a" textLength="23" lengthAdjust="spacingAndGlyphs" text-anchor="middle">Projects</text><path d="M18.2 170.8L13.8 178.4H22.6Z" fill="none" stroke="#333333" stroke-width="1.1" stroke-linejoin="round"/><circle cx="21.8" cy="178.6" r="3.6" fill="#cbcbcb" stroke="#333333" stroke-width="1.1"/><text x="19.6" y="193.6" font-size="6.1" fill="#4a4a4a" textLength="20" lengthAdjust="spacingAndGlyphs" text-anchor="middle">Shapes</text><path d="M19.4 213.6C16.4 213.6 14.4 215.8 14.4 218.4C14.4 221 16.6 222.6 18.2 224.2H20.6C22.2 222.6 24.4 221 24.4 218.4C24.4 215.8 22.4 213.6 19.4 213.6Z" fill="none" stroke="#333333" stroke-width="1.1"/><path d="M19.4 213.8V224M17.2 215L17.6 223.4M21.6 215L21.2 223.4" stroke="#333333" stroke-width="0.6"/><rect x="18" y="224.6" width="2.8" height="1.6" fill="#333333"/><text x="19.6" y="237.4" font-size="6.1" fill="#4a4a4a" textLength="20" lengthAdjust="spacingAndGlyphs" text-anchor="middle">Images</text><path d="M14.4 260.8V259.4H24.2V260.8M19.3 259.4V268.4M17.4 268.4H21.2" fill="none" stroke="#333333" stroke-width="1.2"/><text x="19.6" y="281.5" font-size="6.1" fill="#4a4a4a" textLength="12" lengthAdjust="spacingAndGlyphs" text-anchor="middle">Text</text><path d="M19.4 302.6C16 302.6 13.8 304.8 13.8 307.6C13.8 310.4 16 312.6 19.4 312.6C20.6 312.6 21.6 312.4 22.4 312L24.4 313.4L24 311C24.6 310 25 308.8 25 307.6C25 304.8 22.8 302.6 19.4 302.6Z" fill="none" stroke="#333333" stroke-width="1.1"/><path d="M16.8 306.6H22M16.8 308.8H22" stroke="#333333" stroke-width="1"/><text x="19.6" y="325.6" font-size="6.1" fill="#4a4a4a" textLength="22" lengthAdjust="spacingAndGlyphs" text-anchor="middle">Phrases</text><path d="M16.2 344.6H23.6V352.6H15.4V346" fill="none" stroke="#333333" stroke-width="1"/><path d="M15.6 340.8L16.4 343.2L18.8 344L16.4 344.8L15.6 347.2L14.8 344.8L12.4 344L14.8 343.2Z" fill="#333333"/><g fill="#333333"><circle cx="23.6" cy="344.6" r="1.2"/><circle cx="23.6" cy="352.6" r="1.2"/><circle cx="15.4" cy="352.6" r="1.2"/></g><text x="19.6" y="366.6" font-size="6.1" fill="#4a4a4a" textLength="23" lengthAdjust="spacingAndGlyphs" text-anchor="middle">Editable</text><text x="19.6" y="376" font-size="6.1" fill="#4a4a4a" textLength="20" lengthAdjust="spacingAndGlyphs" text-anchor="middle">Images</text><path d="M14.6 390.4H24.4M19.5 393V400.6M16.4 396L19.5 392.8L22.6 396" fill="none" stroke="#333333" stroke-width="1.2"/><text x="19.6" y="413" font-size="6.1" fill="#4a4a4a" textLength="20" lengthAdjust="spacingAndGlyphs" text-anchor="middle">Upload</text><path d="M13.6 437.6H20.2M14.6 438V447.4M16.8 438V447.4M18.8 438V447.4" stroke="#333333" stroke-width="1.3"/><path d="M25 439.4C24.4 438.2 23.4 437.8 22.4 437.8C20.6 437.8 19.6 439.6 19.6 442.6C19.6 445.6 20.6 447.4 22.4 447.4C23.6 447.4 24.6 446.6 25 445.4V442.8H22.6" fill="none" stroke="#333333" stroke-width="1.3"/><text x="19.6" y="457" font-size="6.1" fill="#4a4a4a" textLength="31" lengthAdjust="spacingAndGlyphs" text-anchor="middle">Monogram</text><rect x="1012" y="30" width="188" height="588" fill="#ffffff"/><rect x="1011.3" y="30" width="0.9" height="588" fill="#e2e2e2"/><text x="1021.6" y="48.8" font-size="9.2" fill="#1b6f5d" textLength="28.2" lengthAdjust="spacingAndGlyphs" stroke="#1b6f5d" stroke-width="0.35">Layers</text><text x="1068.6" y="48.8" font-size="9.2" fill="#555" textLength="45.2" lengthAdjust="spacingAndGlyphs" stroke="#555" stroke-width="0.15">Color Sync</text><rect x="1012" y="58.6" width="47" height="1.8" fill="#0b6c55"/><rect x="1012" y="60.4" width="188" height="0.8" fill="#ececec"/><path d="M1024.4 71.4V69.8H1026M1032.6 69.8H1034.2V71.4M1034.2 79V80.6H1032.6M1026 80.6H1024.4V79" fill="none" stroke="#333" stroke-width="1.1"/><circle cx="1028.4" cy="74.4" r="2.4" fill="none" stroke="#333" stroke-width="1.1"/><circle cx="1030.4" cy="76.2" r="2.4" fill="#fff" stroke="#333" stroke-width="1.1"/><rect x="1048.6" y="69.4" width="8" height="8" rx="0.8" fill="none" stroke="#333" stroke-width="1.1"/><rect x="1051" y="71.8" width="8" height="8" rx="0.8" fill="#fff" stroke="#333" stroke-width="1.1"/><path d="M1055 73.8V77.8M1053 75.8H1057" stroke="#333" stroke-width="1"/><path d="M1074 71.6H1085.2M1077.6 71.6V69.8H1081.6V71.6M1075.2 71.6L1076 80.4H1083.2L1084 71.6M1078.2 73.6V78.4M1081 73.6V78.4" fill="none" stroke="#333" stroke-width="1.1" stroke-linejoin="round"/><rect x="1014.8" y="91" width="171.7" height="34.3" rx="2" fill="#b3e5d9"/><rect x="1036" y="100.6" width="11.2" height="14.2" fill="url(#th_sp)"/><text x="1055" y="104.4" font-size="8.6" fill="#2b3b37" textLength="30" lengthAdjust="spacingAndGlyphs" stroke="#2b3b37" stroke-width="0.3">Square</text><text x="1055" y="117" font-size="8.6" fill="#6d857f" textLength="58" lengthAdjust="spacingAndGlyphs">Print Then Cut</text><rect x="1014.8" y="127.5" width="171.7" height="34.3" rx="2" fill="#b3e5d9"/><rect x="1036" y="137.1" width="11.2" height="14.2" fill="url(#th_ornA)"/><text x="1055" y="140.9" font-size="8.6" fill="#2b3b37" textLength="30" lengthAdjust="spacingAndGlyphs" stroke="#2b3b37" stroke-width="0.3">Square</text><text x="1055" y="153.5" font-size="8.6" fill="#6d857f" textLength="58" lengthAdjust="spacingAndGlyphs">Print Then Cut</text><rect x="1014.8" y="164" width="171.7" height="34.3" rx="2" fill="#b3e5d9"/><rect x="1036" y="173.6" width="11.2" height="14.2" fill="url(#th_polka)"/><text x="1055" y="177.4" font-size="8.6" fill="#2b3b37" textLength="30" lengthAdjust="spacingAndGlyphs" stroke="#2b3b37" stroke-width="0.3">Square</text><text x="1055" y="190" font-size="8.6" fill="#6d857f" textLength="58" lengthAdjust="spacingAndGlyphs">Print Then Cut</text><rect x="1014.8" y="200.5" width="171.7" height="34.3" rx="2" fill="#b3e5d9"/><rect x="1036" y="210.1" width="11.2" height="14.2" fill="url(#th_ornB)"/><text x="1055" y="213.9" font-size="8.6" fill="#2b3b37" textLength="30" lengthAdjust="spacingAndGlyphs" stroke="#2b3b37" stroke-width="0.3">Square</text><text x="1055" y="226.5" font-size="8.6" fill="#6d857f" textLength="58" lengthAdjust="spacingAndGlyphs">Print Then Cut</text><text x="1055" y="250.3" font-size="8.6" fill="#3d4a47" textLength="104.5" lengthAdjust="spacingAndGlyphs">Mim-jenkinson-weekly-s...</text><text x="1055" y="262.7" font-size="8.6" fill="#7c8784" textLength="58" lengthAdjust="spacingAndGlyphs">Print Then Cut</text><text x="1055" y="286.8" font-size="8.6" fill="#3d4a47" textLength="104.5" lengthAdjust="spacingAndGlyphs">Mim-jenkinson-weekly-s...</text><text x="1055" y="299.2" font-size="8.6" fill="#7c8784" textLength="58" lengthAdjust="spacingAndGlyphs">Print Then Cut</text><rect x="1035.4" y="321" width="12.4" height="8.4" fill="#d8eef0"/><text x="1055" y="323.3" font-size="8.6" fill="#3d4a47" textLength="104.5" lengthAdjust="spacingAndGlyphs">Mim-jenkinson-weekly-s...</text><text x="1055" y="335.7" font-size="8.6" fill="#7c8784" textLength="58" lengthAdjust="spacingAndGlyphs">Print Then Cut</text><rect x="1035.4" y="357.5" width="12.4" height="8.4" fill="#fbe6c8"/><text x="1055" y="359.8" font-size="8.6" fill="#3d4a47" textLength="104.5" lengthAdjust="spacingAndGlyphs">Mim-jenkinson-weekly-s...</text><text x="1055" y="372.2" font-size="8.6" fill="#7c8784" textLength="58" lengthAdjust="spacingAndGlyphs">Print Then Cut</text><text x="1055" y="396.3" font-size="8.6" fill="#3d4a47" textLength="104.5" lengthAdjust="spacingAndGlyphs">Mim-jenkinson-weekly-s...</text><text x="1055" y="408.7" font-size="8.6" fill="#7c8784" textLength="58" lengthAdjust="spacingAndGlyphs">Print Then Cut</text><text x="1055" y="432.8" font-size="8.6" fill="#3d4a47" textLength="104.5" lengthAdjust="spacingAndGlyphs">Mim-jenkinson-weekly-s...</text><text x="1055" y="445.2" font-size="8.6" fill="#7c8784" textLength="58" lengthAdjust="spacingAndGlyphs">Print Then Cut</text><rect x="1035.4" y="467" width="12.4" height="8.4" fill="#6d8b6a"/><text x="1055" y="469.3" font-size="8.6" fill="#3d4a47" textLength="104.5" lengthAdjust="spacingAndGlyphs">Mim-jenkinson-weekly-s...</text><text x="1055" y="481.7" font-size="8.6" fill="#7c8784" textLength="58" lengthAdjust="spacingAndGlyphs">Print Then Cut</text><rect x="1035.4" y="503.5" width="12.4" height="8.4" fill="#19585a"/><text x="1055" y="505.8" font-size="8.6" fill="#3d4a47" textLength="104.5" lengthAdjust="spacingAndGlyphs">Mim-jenkinson-weekly-s...</text><text x="1055" y="518.2" font-size="8.6" fill="#7c8784" textLength="58" lengthAdjust="spacingAndGlyphs">Print Then Cut</text><rect x="1190" y="91" width="10" height="434" fill="#f7f7f7"/><path d="M1192.4 99.6L1195 96.6L1197.6 99.6Z" fill="#222"/><rect x="1191.2" y="102.4" width="7.6" height="122.6" fill="#c4c4c4"/><path d="M1192.4 518L1195 521L1197.6 518Z" fill="#222"/><rect x="1012" y="525" width="188" height="31" fill="#f2f2f2"/><rect x="1018.3" y="529" width="33.4" height="22.3" rx="1.5" fill="#fff" stroke="#8a8a8a" stroke-width="0.7"/><text x="1058" y="542.6" font-size="5.6" fill="#333" textLength="38" lengthAdjust="spacingAndGlyphs">Blank Canvas</text><rect x="1012" y="556" width="188" height="30" fill="#ffffff"/><path d="M1024.6 568.6V562.4H1030.6M1026.4 564.8H1033.4V571.2H1026.4Z" fill="none" stroke="#cfcfcf" stroke-width="1"/><circle cx="1026.4" cy="565" r="2.6" fill="none" stroke="#cfcfcf" stroke-width="0.9"/><text x="1029" y="580.4" font-size="5.8" fill="#c8c8c8" textLength="13" lengthAdjust="spacingAndGlyphs" text-anchor="middle">Slice</text><rect x="1051.2" y="560" width="7.4" height="7.4" rx="1" fill="none" stroke="#333" stroke-width="1.1"/><circle cx="1058" cy="566.4" r="3.8" fill="#fff" stroke="#333" stroke-width="1.1"/><path d="M1065.5 563.7H1069.7L1067.6 566.7Z" fill="#222"/><text x="1060" y="580.4" font-size="5.8" fill="#333" textLength="26.5" lengthAdjust="spacingAndGlyphs" text-anchor="middle">Combine</text><rect x="1086.4" y="562.4" width="9" height="6" rx="3" fill="none" stroke="#333" stroke-width="1.2"/><rect x="1090.6" y="562.4" width="9" height="6" rx="3" fill="none" stroke="#333" stroke-width="1.2"/><text x="1093" y="580.4" font-size="5.8" fill="#333" textLength="19" lengthAdjust="spacingAndGlyphs" text-anchor="middle">Attach</text><path d="M1117.8 565.4L1123 568.2L1128.2 565.4M1117.8 568.2L1123 571L1128.2 568.2M1123 559.6V565.6M1120.8 563.2L1123 565.6L1125.2 563.2" fill="none" stroke="#333" stroke-width="1.1"/><text x="1123" y="580.4" font-size="5.8" fill="#333" textLength="20" lengthAdjust="spacingAndGlyphs" text-anchor="middle">Flatten</text><circle cx="1155" cy="565.4" r="5" fill="none" stroke="#cfcfcf" stroke-width="1" stroke-dasharray="1.5 1.3"/><text x="1155" y="580.4" font-size="5.8" fill="#c8c8c8" textLength="23.5" lengthAdjust="spacingAndGlyphs" text-anchor="middle">Contour</text><rect x="1012" y="585.8" width="188" height="32.2" fill="#054abf"/><path d="M1022.4 595H1041.4L1038.6 608.2H1025.8L1022.4 611Z" fill="#1a9a6a"/><text x="1031.2" y="605.4" font-size="10" fill="#ffffff" text-anchor="middle">a</text><text x="1047.5" y="605.6" font-size="9.4" fill="#ffffff" textLength="103.3" lengthAdjust="spacingAndGlyphs" stroke="#fff" stroke-width="0.25">Try Cricut Access for free</text><circle cx="291.3" cy="75" r="19" fill="#f4f08a" fill-opacity="0.55"/><path d="M291.4 73.4V84.2L293.8 81.8L295.8 86L297.4 85.2L295.4 81.2H298.6Z" fill="#fff" stroke="#222" stroke-width="0.8" stroke-linejoin="round"/><path d="M201.2 191.7L261.5 71.5" stroke="#d1361f" stroke-width="9"/><path d="M268.2 54.3L246.7 65.2L272.6 77.8Z" fill="#d1361f"/><rect x="62" y="582.6" width="71.5" height="19.6" rx="3" fill="#ececec" fill-opacity="0.45"/><circle cx="73" cy="592.6" r="5" fill="none" stroke="#b8b8b8" stroke-width="1.3"/><text x="98.2" y="596.8" font-size="10.4" fill="#b0b0b0" textLength="28.5" lengthAdjust="spacingAndGlyphs" text-anchor="middle" stroke="#b0b0b0" stroke-width="0.45">125%</text><circle cx="124.6" cy="592.6" r="5" fill="none" stroke="#b8b8b8" stroke-width="1.3"/><path d="M124.6 589.6V595.6M121.6 592.6H127.6" stroke="#b8b8b8" stroke-width="1.2"/><g><circle cx="49.5" cy="557.5" r="16.6" fill="#fae3e4"/><circle cx="21.6" cy="577.6" r="16.6" fill="#fae3e4"/><path d="M21.6 577.6L49.5 557.5L66 556C70 565 72 580 71.6 592L70 610Q44 609 22 599Z" fill="#fae3e4"/></g><path d="M49.8 553.8L56 554.4L67.3 552.5C70.5 562 72.2 578 71.6 592L70 610Q44 609 22 599.3L28.6 591.7L41 580L49.7 570.7L55.4 563Z" fill="#e8844b"/><path d="M50 553.8L58 554.2L62 556L56.4 566L52 557.6Z" fill="#ee9c84"/><path d="M22 599.3L25.9 597.4L70.8 583.8C71.6 593 71 603 70 610Q44 609 22 599.3Z" fill="#e3653e"/></svg></body></html>
